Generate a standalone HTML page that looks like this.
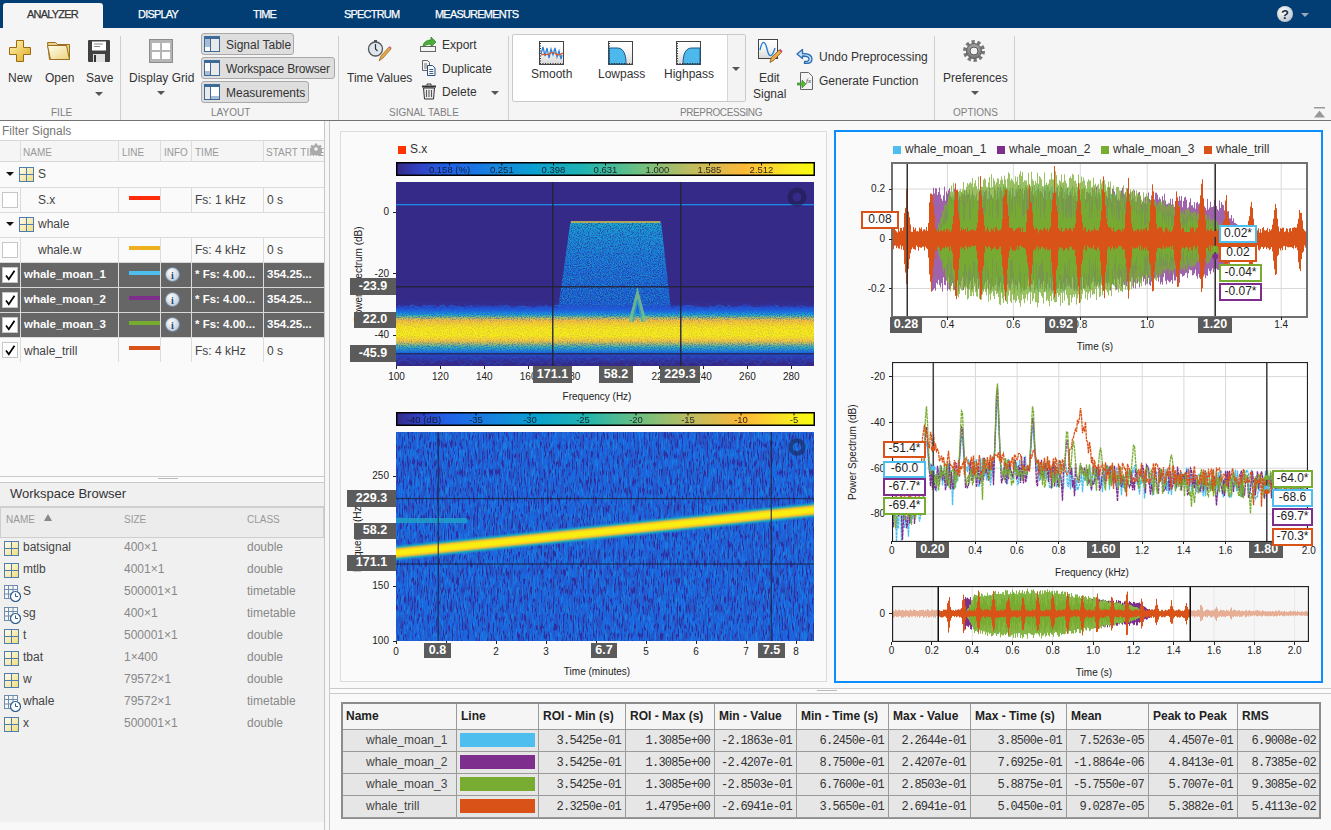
<!DOCTYPE html>
<html><head><meta charset="utf-8">
<style>
*{box-sizing:border-box;margin:0;padding:0}
html,body{width:1331px;height:830px;overflow:hidden;background:#f5f5f5;font-family:"Liberation Sans",sans-serif;color:#333;position:relative}
.a{position:absolute;white-space:nowrap}
.tabbar{left:0;top:0;width:1331px;height:28px;background:#023e73}
.tab{top:0;height:28px;line-height:28px;font-size:11px;color:#fff;letter-spacing:-0.8px;-webkit-text-stroke:0.25px currentColor}
.tabact{left:3px;top:3px;width:100px;height:25px;background:#f5f5f5;border-radius:3px 3px 0 0}
.ribbon{left:0;top:28px;width:1331px;height:92px;background:#f5f5f5}
.rl{font-size:12px;color:#333}
.grp{font-size:10px;color:#808080;top:107px}
.div{width:1px;background:#cfcfcf;top:36px;height:84px}
.tgl{background:#dedede;border:1px solid #a9a9a9;border-radius:3px}
.tri{width:0;height:0;border-left:4px solid transparent;border-right:4px solid transparent;border-top:4px solid #555}
.th{font-size:10px;color:#999;top:140px;height:21px;line-height:22px}
.vl{width:1px;background:#dcdcdc}
.hl{height:1px;background:#dcdcdc}
.st{font-size:12px;color:#444;line-height:15px;margin-top:1px}
.sel{font-size:11.5px;color:#fff;font-weight:bold}
.cb{width:16px;height:16px;background:#fff;border:1px solid #c6c6c6}
.ck{width:16px;height:16px}
.ws{font-size:12px;color:#444}
.wsg{font-size:12px;color:#888}
.lab{background:#5b5b5b;color:#fff;font-weight:bold;font-size:13px;text-align:center}
.tick{font-size:10px;color:#222}
.vlab{background:#fff;font-size:12px;color:#222;text-align:center}
.mt{font-size:12px;color:#333}
.mono{font-family:"Liberation Mono",monospace;font-size:12px;letter-spacing:-0.75px;color:#333;text-align:right;line-height:17px}
</style></head><body>
<!-- TAB BAR -->
<div class="a tabbar"></div>
<div class="a tabact"></div>
<div class="a tab" style="left:27px;color:#333">ANALYZER</div>
<div class="a tab" style="left:138px">DISPLAY</div>
<div class="a tab" style="left:253px">TIME</div>
<div class="a tab" style="left:344px">SPECTRUM</div>
<div class="a tab" style="left:435px">MEASUREMENTS</div>
<svg class="a" style="left:1276px;top:5px" width="18" height="18" viewBox="0 0 18 18"><defs><radialGradient id="hg" cx="40%" cy="35%" r="70%"><stop offset="0" stop-color="#fff"/><stop offset="1" stop-color="#b9c3cc"/></radialGradient></defs><circle cx="9" cy="9" r="8" fill="url(#hg)"/><text x="9" y="14" font-size="13" font-weight="bold" text-anchor="middle" fill="#1c2f4a" font-family="Liberation Sans">?</text></svg>
<div class="a tri" style="left:1301px;top:13px;border-top-color:#9aa9b8"></div>
<!-- RIBBON -->
<div class="a ribbon"></div>
<div class="a" style="left:0;top:120px;width:1331px;height:1px;background:#737373"></div><div class="a" style="left:0;top:121px;width:1331px;height:1px;background:#c4c4c4"></div>
<!-- FILE -->
<svg class="a" style="left:9px;top:40px" width="22" height="22" viewBox="0 0 22 22"><defs><linearGradient id="pg" x1="0" y1="0" x2="1" y2="1"><stop offset="0" stop-color="#fff6b8"/><stop offset="1" stop-color="#e0a81c"/></linearGradient></defs><path d="M7.5 0.5h7v7h7v7h-7v7h-7v-7h-7v-7h7z" fill="url(#pg)" stroke="#9a6a10"/></svg>
<svg class="a" style="left:47px;top:41px" width="24" height="20" viewBox="0 0 24 20"><defs><linearGradient id="fg" x1="0" y1="0" x2="1" y2="1"><stop offset="0" stop-color="#fffef0"/><stop offset="1" stop-color="#ead37a"/></linearGradient></defs><path d="M0.5 1.5h8l2 2h12v15h-20z" fill="#e9d28c" stroke="#9a6e1e"/><path d="M0.5 4.5h19l3 14h-19z" fill="url(#fg)" stroke="#9a6e1e"/></svg>
<svg class="a" style="left:88px;top:40px" width="22" height="22" viewBox="0 0 22 22"><rect x="0" y="0" width="22" height="22" rx="1" fill="#404040"/><rect x="4" y="1.5" width="14" height="9" fill="#fff"/><path d="M6 4h9M6 6.5h6" stroke="#888"/><rect x="5" y="14" width="12" height="8" fill="#e0e0e0"/><rect x="6" y="15" width="2" height="7" fill="#333"/></svg>
<div class="a rl" style="left:8px;top:71px">New</div>
<div class="a rl" style="left:45px;top:71px">Open</div>
<div class="a rl" style="left:86px;top:71px">Save</div>
<div class="a tri" style="left:95px;top:92px"></div>
<div class="a grp" style="left:51px">FILE</div>
<div class="a div" style="left:120px"></div>
<!-- LAYOUT -->
<svg class="a" style="left:149px;top:39px" width="24" height="24" viewBox="0 0 24 24"><rect width="24" height="24" fill="#8c8c8c"/><rect x="1" y="1" width="22" height="22" fill="#b5b5b5"/><rect x="3" y="4" width="8" height="7" fill="#fff"/><rect x="13" y="4" width="8" height="7" fill="#fff"/><rect x="3" y="13" width="8" height="7" fill="#fff"/><rect x="13" y="13" width="8" height="7" fill="#fff"/></svg>
<div class="a rl" style="left:129px;top:71px">Display Grid</div>
<div class="a tri" style="left:157px;top:91px"></div>
<div class="a tgl" style="left:201px;top:33px;width:93px;height:22px"></div>
<div class="a tgl" style="left:201px;top:57px;width:134px;height:22px"></div>
<div class="a tgl" style="left:201px;top:81px;width:108px;height:22px"></div>
<svg class="a" style="left:204px;top:36px" width="16" height="16" viewBox="0 0 16 16"><rect x="0.5" y="0.5" width="15" height="15" fill="#eaeaea" stroke="#3d6a99"/><rect x="1" y="1" width="14" height="2" fill="#3d6a99"/><rect x="1" y="3" width="5" height="8" fill="#a7bdd6"/><rect x="1" y="11" width="5" height="4" fill="#fff"/><path d="M6.5 3v12" stroke="#3d6a99"/></svg>
<svg class="a" style="left:204px;top:60px" width="16" height="16" viewBox="0 0 16 16"><rect x="0.5" y="0.5" width="15" height="15" fill="#eaeaea" stroke="#3d6a99"/><rect x="1" y="1" width="14" height="2" fill="#3d6a99"/><rect x="1" y="3" width="5" height="8" fill="#fff"/><rect x="1" y="11" width="5" height="4" fill="#a7bdd6"/><path d="M6.5 3v12" stroke="#3d6a99"/></svg>
<svg class="a" style="left:204px;top:84px" width="16" height="16" viewBox="0 0 16 16"><rect x="0.5" y="0.5" width="15" height="15" fill="#eaeaea" stroke="#3d6a99"/><rect x="1" y="1" width="14" height="2" fill="#3d6a99"/><rect x="7" y="3" width="8" height="9" fill="#fff"/><rect x="7" y="12" width="8" height="3" fill="#a7bdd6"/><path d="M6.5 3v12" stroke="#3d6a99"/></svg>
<div class="a rl" style="left:226px;top:38px">Signal Table</div>
<div class="a rl" style="left:226px;top:62px;letter-spacing:-0.2px">Workspace Browser</div>
<div class="a rl" style="left:226px;top:86px">Measurements</div>
<div class="a grp" style="left:211px">LAYOUT</div>
<div class="a div" style="left:338px"></div>
<!-- SIGNAL TABLE -->
<svg class="a" style="left:367px;top:39px" width="25" height="24" viewBox="0 0 25 24"><circle cx="8.5" cy="10" r="7" fill="#dfe7ee" stroke="#555" stroke-width="1.3"/><path d="M8.5 5v5l2 2" stroke="#333" fill="none" stroke-width="1.2"/><rect x="7" y="1" width="3" height="2" fill="#555"/><path d="M12 22l2-5 8-9 2 2-8 9z" fill="#e8a94a" stroke="#8b5a1a" stroke-width="0.7"/><path d="M22 8l2 2 0.8-1-2-2z" fill="#e07090"/></svg>
<div class="a rl" style="left:347px;top:71px">Time Values</div>
<svg class="a" style="left:420px;top:36px" width="17" height="17" viewBox="0 0 17 17"><rect x="0.5" y="10.5" width="15" height="5" fill="#f4f4f4" stroke="#666"/><path d="M3 11c0-5 4-7 8-7V1l5 5-5 5V8c-3 0-6 1-8 3z" fill="#4caf3c" stroke="#2a7a20" stroke-width="0.7"/></svg>
<svg class="a" style="left:421px;top:60px" width="16" height="16" viewBox="0 0 16 16"><path d="M1.5 0.5h5l2 2v8h-7z" fill="#f4f4f4" stroke="#555" stroke-width="0.9"/><path d="M3 4h3M3 6h4M3 8h4" stroke="#555" stroke-width="0.8"/><path d="M6.5 5.5h5l2.5 2.5v7.5h-7.5z" fill="#f6f8fb" stroke="#2b4f7e" stroke-width="1"/><path d="M8.3 9.5h4M8.3 11.5h4M8.3 13.5h4" stroke="#2b4f7e" stroke-width="0.9"/></svg>
<svg class="a" style="left:421px;top:83px" width="16" height="17" viewBox="0 0 16 17"><path d="M1 3.5h14" stroke="#333" stroke-width="2"/><path d="M6 2.5v-1.5h4v1.5" fill="none" stroke="#333"/><path d="M2.5 5h11l-1 11h-9z" fill="#e8e8e8" stroke="#333"/><path d="M5.5 7v7M8 7v7M10.5 7v7" stroke="#555"/></svg>
<div class="a rl" style="left:442px;top:38px">Export</div>
<div class="a rl" style="left:442px;top:62px">Duplicate</div>
<div class="a rl" style="left:442px;top:85px">Delete</div>
<div class="a tri" style="left:491px;top:91px"></div>
<div class="a grp" style="left:389px">SIGNAL TABLE</div>
<div class="a div" style="left:508px"></div>
<!-- PREPROCESSING -->
<div class="a" style="left:512px;top:34px;width:234px;height:68px;background:#fff;border:1px solid #c9c9c9;border-radius:2px"></div>
<div class="a" style="left:727px;top:35px;width:18px;height:66px;background:#f3f3f3;border-left:1px solid #d6d6d6"></div>
<div class="a tri" style="left:732px;top:67px"></div>
<svg class="a" style="left:539px;top:41px" width="25" height="24" viewBox="0 0 25 24"><defs><linearGradient id="icg" x1="0" y1="0" x2="0" y2="1"><stop offset="0" stop-color="#fff"/><stop offset="0.5" stop-color="#f4f4f4"/><stop offset="1" stop-color="#d8d8d8"/></linearGradient></defs><rect x="0.5" y="0.5" width="24" height="23" fill="url(#icg)" stroke="#444"/><path d="M1.5 23V2M1 22.5h23" stroke="#333" stroke-dasharray="1 1.5"/><path d="M2 13l2-7 2 9 2-8 2 10 2-9 2 6 2-7 2 9 2-6 2 8 1-4" stroke="#2a7fd4" fill="none" stroke-width="1.2"/><path d="M2 14c3-2 5 1 8-1s5-2 7 0 4 1 7-1" stroke="#e0552a" fill="none" stroke-width="1.4"/></svg>
<svg class="a" style="left:608px;top:41px" width="25" height="24" viewBox="0 0 25 24"><rect x="0.5" y="0.5" width="24" height="23" fill="url(#icg)" stroke="#444"/><path d="M1 7h8c6 0 9 5 9 16H1z" fill="#4db8ec" stroke="#1a5a8a" stroke-width="1"/><path d="M1.5 23V2M1 22.5h23" stroke="#333" stroke-dasharray="1 1.5"/></svg>
<svg class="a" style="left:676px;top:41px" width="25" height="24" viewBox="0 0 25 24"><rect x="0.5" y="0.5" width="24" height="23" fill="url(#icg)" stroke="#444"/><path d="M7 23c0-11 3-16 9-16h8v16z" fill="#4db8ec" stroke="#1a5a8a" stroke-width="1"/><path d="M1.5 23V2M1 22.5h23" stroke="#333" stroke-dasharray="1 1.5"/></svg>
<div class="a rl" style="left:531px;top:67px">Smooth</div>
<div class="a rl" style="left:598px;top:67px">Lowpass</div>
<div class="a rl" style="left:664px;top:67px">Highpass</div>
<svg class="a" style="left:758px;top:39px" width="25" height="24" viewBox="0 0 25 24"><rect x="0.5" y="0.5" width="19" height="19" fill="url(#icg)" stroke="#444"/><path d="M2 11c2-10 5-10 7-1s5 9 8-1" stroke="#2a7fd4" fill="none" stroke-width="1.4"/><path d="M12 23.5l1-4.5 8-8 2.5 2.5-8 8z" fill="#e8a94a" stroke="#7b4a10" stroke-width="0.7"/><path d="M21 11l2.5 2.5 1.2-1.2-2.5-2.5z" fill="#d05080"/></svg>
<div class="a rl" style="left:759px;top:71px">Edit</div>
<div class="a rl" style="left:753px;top:87px">Signal</div>
<svg class="a" style="left:796px;top:48px" width="17" height="16" viewBox="0 0 17 16"><path d="M6.5 1.5L1 6l5.5 4.5V8c4 0 6.5 0.8 6.5 3 0 1.6-1.5 2.5-3.5 2.5H8.5v2h1.5c3.5 0 6-1.8 6-4.5 0-3.8-3.2-5.5-9.5-5.5z" fill="#c6e0f6" stroke="#2a6cb2" stroke-width="1.3" stroke-linejoin="round"/></svg>
<svg class="a" style="left:797px;top:72px" width="16" height="18" viewBox="0 0 16 18"><path d="M3.5 0.5h8l4 4v13h-12z" fill="#f4f4f4" stroke="#666"/><text x="9" y="11" font-size="7" font-style="italic" fill="#333" font-family="Liberation Serif">fx</text><path d="M0 11h5V8l4 4-4 4v-3H0z" fill="#5cb83a" stroke="#2a7a20" stroke-width="0.6"/></svg>
<div class="a rl" style="left:819px;top:50px">Undo Preprocessing</div>
<div class="a rl" style="left:819px;top:74px">Generate Function</div>
<div class="a grp" style="left:680px;letter-spacing:-0.4px">PREPROCESSING</div>
<div class="a div" style="left:934px"></div>
<!-- OPTIONS -->
<svg class="a" style="left:963px;top:40px" width="22" height="22" viewBox="0 0 22 22"><defs><radialGradient id="gg" cx="50%" cy="40%" r="60%"><stop offset="0" stop-color="#c8c8c8"/><stop offset="1" stop-color="#6a6a6a"/></radialGradient></defs><circle cx="11" cy="11" r="9.2" fill="none" stroke="#777" stroke-width="3.6" stroke-dasharray="3.2 2.6"/><circle cx="11" cy="11" r="7.6" fill="url(#gg)" stroke="#555" stroke-width="0.8"/><circle cx="11" cy="11" r="4" fill="#f2f2f2" stroke="#555" stroke-width="1"/></svg>
<div class="a rl" style="left:943px;top:71px">Preferences</div>
<div class="a tri" style="left:971px;top:91px"></div>
<div class="a grp" style="left:953px">OPTIONS</div>
<div class="a div" style="left:1014px"></div>
<svg class="a" style="left:1314px;top:107px" width="11" height="11" viewBox="0 0 11 11"><rect x="0" y="0" width="11" height="1.5" fill="#999"/><path d="M0 10.5l5.5-7 5.5 7z" fill="#999"/></svg>
<!-- LEFT PANEL -->
<div class="a" style="left:0;top:121px;width:325px;height:355px;background:#fafafa"></div>
<div class="a" style="left:0;top:121px;width:324px;height:20px;background:#fff;border-bottom:1px solid #d6d6d6"></div>
<div class="a" style="left:2px;top:123px;font-size:12px;color:#777;line-height:17px">Filter Signals</div>
<div class="a" style="left:0;top:141px;width:324px;height:21px;background:#f5f5f5;border-bottom:1px solid #d9d9d9"></div>
<div class="a" style="left:324px;top:121px;width:1px;height:709px;background:#c6c6c6"></div>
<div class="a" style="left:329px;top:121px;width:1px;height:709px;background:#c9c9c9"></div>
<div class="a" style="left:325px;top:121px;width:4px;height:709px;background:#f7f7f7"></div>
<!-- header -->
<div class="a th" style="left:23px;top:142px">NAME</div>
<div class="a th" style="left:122px;top:142px">LINE</div>
<div class="a th" style="left:164px;top:142px">INFO</div>
<div class="a th" style="left:195px;top:142px">TIME</div>
<div class="a th" style="left:266px;top:142px">START TIME</div>
<svg class="a" style="left:310px;top:143px" width="12" height="12" viewBox="0 0 12 12"><g transform="translate(6 6)"><path d="M-1-5.5h2l.4 1.6 1.4.6 1.4-.9 1.4 1.4-.9 1.4.6 1.4 1.6.4v2l-1.6.4-.6 1.4.9 1.4-1.4 1.4-1.4-.9-1.4.6-.4 1.6h-2l-.4-1.6-1.4-.6-1.4.9-1.4-1.4.9-1.4-.6-1.4-1.6-.4v-2l1.6-.4.6-1.4-.9-1.4 1.4-1.4 1.4.9 1.4-.6z" fill="#aaa"/><circle r="1.8" fill="#f5f5f5"/></g></svg>
<!-- rows -->
<div class="a" style="left:0;top:262px;width:324px;height:75px;background:#666"></div>
<div class="a hl" style="left:0;top:187px;width:324px"></div>
<div class="a hl" style="left:0;top:212px;width:324px"></div>
<div class="a hl" style="left:0;top:237px;width:324px"></div>
<div class="a hl" style="left:0;top:262px;width:324px;background:#d8d8d8"></div>
<div class="a hl" style="left:0;top:287px;width:324px;background:#d8d8d8"></div>
<div class="a hl" style="left:0;top:312px;width:324px;background:#d8d8d8"></div>
<div class="a hl" style="left:0;top:337px;width:324px"></div>
<div class="a hl" style="left:0;top:362px;width:324px"></div>
<div class="a" style="left:0;top:362px;width:324px;height:114px;background:#fafafa"></div>
<!-- vertical col lines -->
<div class="a vl" style="left:20px;top:141px;height:21px"></div>
<div class="a vl" style="left:118px;top:141px;height:21px"></div>
<div class="a vl" style="left:160px;top:141px;height:21px"></div>
<div class="a vl" style="left:191px;top:141px;height:21px"></div>
<div class="a vl" style="left:263px;top:141px;height:21px"></div>
<div class="a vl" style="left:20px;top:187px;height:25px"></div><div class="a vl" style="left:118px;top:187px;height:25px"></div><div class="a vl" style="left:160px;top:187px;height:25px"></div><div class="a vl" style="left:191px;top:187px;height:25px"></div><div class="a vl" style="left:263px;top:187px;height:25px"></div>
<div class="a vl" style="left:20px;top:237px;height:125px"></div><div class="a vl" style="left:118px;top:237px;height:125px"></div><div class="a vl" style="left:160px;top:237px;height:125px"></div><div class="a vl" style="left:191px;top:237px;height:125px"></div><div class="a vl" style="left:263px;top:237px;height:125px"></div>
<!-- group rows -->
<div class="a tri" style="left:6px;top:172px;border-top-color:#111"></div>
<div class="a tri" style="left:6px;top:222px;border-top-color:#111"></div>
<svg class="a" style="left:19px;top:167px" width="15" height="15" viewBox="0 0 15 15"><defs><linearGradient id="tg" x1="0" y1="0" x2="1" y2="1"><stop offset="0" stop-color="#fffdf0"/><stop offset="1" stop-color="#f0dc7a"/></linearGradient></defs><rect x="0.5" y="0.5" width="14" height="14" fill="url(#tg)" stroke="#4f7db0"/><path d="M7.5 1v13M1 7.5h13" stroke="#4f7db0"/></svg>
<svg class="a" style="left:19px;top:217px" width="15" height="15" viewBox="0 0 15 15"><rect x="0.5" y="0.5" width="14" height="14" fill="url(#tg)" stroke="#4f7db0"/><path d="M7.5 1v13M1 7.5h13" stroke="#4f7db0"/></svg>
<div class="a st" style="left:38px;top:166px">S</div>
<div class="a st" style="left:38px;top:216px">whale</div>
<!-- S.x -->
<div class="a cb" style="left:2px;top:192px"></div>
<div class="a st" style="left:38px;top:192px">S.x</div>
<div class="a" style="left:129px;top:196px;width:31px;height:4px;background:#ff2a0a"></div>
<div class="a st" style="left:195px;top:192px">Fs: 1 kHz</div>
<div class="a st" style="left:267px;top:192px">0 s</div>
<!-- whale.w -->
<div class="a cb" style="left:2px;top:242px"></div>
<div class="a st" style="left:38px;top:242px">whale.w</div>
<div class="a" style="left:129px;top:246px;width:31px;height:4px;background:#edb120"></div>
<div class="a st" style="left:195px;top:242px">Fs: 4 kHz</div>
<div class="a st" style="left:267px;top:242px">0 s</div>
<!-- selected -->
<div class="a cb" style="left:2px;top:267px"></div><svg class="a ck" style="left:2px;top:267px" viewBox="0 0 16 16"><path d="M4 8.5L6.8 12.2L12.5 3.8" fill="none" stroke="#000" stroke-width="1.7"/></svg>
<div class="a cb" style="left:2px;top:292px"></div><svg class="a ck" style="left:2px;top:292px" viewBox="0 0 16 16"><path d="M4 8.5L6.8 12.2L12.5 3.8" fill="none" stroke="#000" stroke-width="1.7"/></svg>
<div class="a cb" style="left:2px;top:317px"></div><svg class="a ck" style="left:2px;top:317px" viewBox="0 0 16 16"><path d="M4 8.5L6.8 12.2L12.5 3.8" fill="none" stroke="#000" stroke-width="1.7"/></svg>
<div class="a cb" style="left:2px;top:342px"></div><svg class="a ck" style="left:2px;top:342px" viewBox="0 0 16 16"><path d="M4 8.5L6.8 12.2L12.5 3.8" fill="none" stroke="#000" stroke-width="1.7"/></svg>
<div class="a sel" style="left:24px;top:268px">whale_moan_1</div>
<div class="a sel" style="left:24px;top:293px">whale_moan_2</div>
<div class="a sel" style="left:24px;top:318px">whale_moan_3</div>
<div class="a st" style="left:24px;top:343px">whale_trill</div>
<div class="a" style="left:129px;top:271px;width:31px;height:4px;background:#4dbeee"></div>
<div class="a" style="left:129px;top:296px;width:31px;height:4px;background:#7e2f8e"></div>
<div class="a" style="left:129px;top:321px;width:31px;height:4px;background:#77ac30"></div>
<div class="a" style="left:129px;top:346px;width:31px;height:4px;background:#d95319"></div>
<svg class="a" style="left:165px;top:267px" width="15" height="15" viewBox="0 0 15 15"><defs><radialGradient id="ig" cx="40%" cy="35%" r="70%"><stop offset="0" stop-color="#fff"/><stop offset="1" stop-color="#b7c6d6"/></radialGradient></defs><circle cx="7.5" cy="7.5" r="7" fill="url(#ig)" stroke="#6d8298"/><text x="7.5" y="12" font-size="10" font-weight="bold" text-anchor="middle" fill="#24496e" font-family="Liberation Serif">i</text></svg>
<svg class="a" style="left:165px;top:292px" width="15" height="15" viewBox="0 0 15 15"><circle cx="7.5" cy="7.5" r="7" fill="url(#ig)" stroke="#6d8298"/><text x="7.5" y="12" font-size="10" font-weight="bold" text-anchor="middle" fill="#24496e" font-family="Liberation Serif">i</text></svg>
<svg class="a" style="left:165px;top:317px" width="15" height="15" viewBox="0 0 15 15"><circle cx="7.5" cy="7.5" r="7" fill="url(#ig)" stroke="#6d8298"/><text x="7.5" y="12" font-size="10" font-weight="bold" text-anchor="middle" fill="#24496e" font-family="Liberation Serif">i</text></svg>
<div class="a sel" style="left:195px;top:268px">* Fs: 4.00...</div>
<div class="a sel" style="left:195px;top:293px">* Fs: 4.00...</div>
<div class="a sel" style="left:195px;top:318px">* Fs: 4.00...</div>
<div class="a sel" style="left:267px;top:268px">354.25...</div>
<div class="a sel" style="left:267px;top:293px">354.25...</div>
<div class="a sel" style="left:267px;top:318px">354.25...</div>
<div class="a st" style="left:195px;top:343px">Fs: 4 kHz</div>
<div class="a st" style="left:267px;top:343px">0 s</div>
<!-- splitter -->
<div class="a" style="left:0;top:476px;width:324px;height:1px;background:#c9c9c9"></div>
<div class="a" style="left:0;top:477px;width:324px;height:5px;background:#fbfbfb"></div>
<div class="a" style="left:158px;top:478px;width:20px;height:1px;background:#bbb"></div>
<div class="a" style="left:0;top:482px;width:324px;height:1px;background:#c9c9c9"></div>
<!-- WORKSPACE -->
<div class="a" style="left:0;top:483px;width:324px;height:347px;background:#f0f0f0"></div>
<div class="a" style="left:10px;top:486px;font-size:13px;color:#333">Workspace Browser</div>
<div class="a" style="left:0;top:506px;width:324px;height:32px;background:#ececec;border:1px solid #cfcfcf;border-width:2px 1px 1px 1px"></div>
<div class="a th" style="left:6px;top:509px">NAME</div>
<svg class="a" style="left:44px;top:514px" width="8" height="7"><path d="M0 7L4 0l4 7z" fill="#888"/></svg>
<div class="a th" style="left:124px;top:509px">SIZE</div>
<div class="a th" style="left:247px;top:509px">CLASS</div>
<div class="a" style="left:0;top:822px;width:324px;height:8px;background:#f8f8f8"></div>
<svg class="a" style="left:4px;top:541px" width="15" height="15" viewBox="0 0 15 15"><rect x="0.5" y="0.5" width="14" height="14" fill="url(#tg)" stroke="#4f7db0"/><path d="M7.5 1v13M1 7.5h13" stroke="#4f7db0"/></svg>
<div class="a ws" style="left:23px;top:540px">batsignal</div>
<div class="a wsg" style="left:124px;top:540px">400×1</div>
<div class="a wsg" style="left:247px;top:540px">double</div>
<svg class="a" style="left:4px;top:563px" width="15" height="15" viewBox="0 0 15 15"><rect x="0.5" y="0.5" width="14" height="14" fill="url(#tg)" stroke="#4f7db0"/><path d="M7.5 1v13M1 7.5h13" stroke="#4f7db0"/></svg>
<div class="a ws" style="left:23px;top:562px">mtlb</div>
<div class="a wsg" style="left:124px;top:562px">4001×1</div>
<div class="a wsg" style="left:247px;top:562px">double</div>
<svg class="a" style="left:4px;top:585px" width="17" height="17" viewBox="0 0 17 17"><rect x="0.5" y="0.5" width="13" height="13" fill="#f6f6f6" stroke="#6f8cae"/><path d="M0.5 4.5h13M4.5 1v13M9 1v13M1 9h13" stroke="#6f8cae"/><circle cx="11.5" cy="11.5" r="5" fill="#fff" stroke="#2b5b8c" stroke-width="1.2"/><path d="M11.5 8.5v3h2.5" stroke="#2b5b8c" fill="none"/></svg>
<div class="a ws" style="left:23px;top:584px">S</div>
<div class="a wsg" style="left:124px;top:584px">500001×1</div>
<div class="a wsg" style="left:247px;top:584px">timetable</div>
<svg class="a" style="left:4px;top:607px" width="17" height="17" viewBox="0 0 17 17"><rect x="0.5" y="0.5" width="13" height="13" fill="#f6f6f6" stroke="#6f8cae"/><path d="M0.5 4.5h13M4.5 1v13M9 1v13M1 9h13" stroke="#6f8cae"/><circle cx="11.5" cy="11.5" r="5" fill="#fff" stroke="#2b5b8c" stroke-width="1.2"/><path d="M11.5 8.5v3h2.5" stroke="#2b5b8c" fill="none"/></svg>
<div class="a ws" style="left:23px;top:606px">sg</div>
<div class="a wsg" style="left:124px;top:606px">400×1</div>
<div class="a wsg" style="left:247px;top:606px">timetable</div>
<svg class="a" style="left:4px;top:629px" width="15" height="15" viewBox="0 0 15 15"><rect x="0.5" y="0.5" width="14" height="14" fill="url(#tg)" stroke="#4f7db0"/><path d="M7.5 1v13M1 7.5h13" stroke="#4f7db0"/></svg>
<div class="a ws" style="left:23px;top:628px">t</div>
<div class="a wsg" style="left:124px;top:628px">500001×1</div>
<div class="a wsg" style="left:247px;top:628px">double</div>
<svg class="a" style="left:4px;top:651px" width="15" height="15" viewBox="0 0 15 15"><rect x="0.5" y="0.5" width="14" height="14" fill="url(#tg)" stroke="#4f7db0"/><path d="M7.5 1v13M1 7.5h13" stroke="#4f7db0"/></svg>
<div class="a ws" style="left:23px;top:650px">tbat</div>
<div class="a wsg" style="left:124px;top:650px">1×400</div>
<div class="a wsg" style="left:247px;top:650px">double</div>
<svg class="a" style="left:4px;top:673px" width="15" height="15" viewBox="0 0 15 15"><rect x="0.5" y="0.5" width="14" height="14" fill="url(#tg)" stroke="#4f7db0"/><path d="M7.5 1v13M1 7.5h13" stroke="#4f7db0"/></svg>
<div class="a ws" style="left:23px;top:672px">w</div>
<div class="a wsg" style="left:124px;top:672px">79572×1</div>
<div class="a wsg" style="left:247px;top:672px">double</div>
<svg class="a" style="left:4px;top:695px" width="17" height="17" viewBox="0 0 17 17"><rect x="0.5" y="0.5" width="13" height="13" fill="#f6f6f6" stroke="#6f8cae"/><path d="M0.5 4.5h13M4.5 1v13M9 1v13M1 9h13" stroke="#6f8cae"/><circle cx="11.5" cy="11.5" r="5" fill="#fff" stroke="#2b5b8c" stroke-width="1.2"/><path d="M11.5 8.5v3h2.5" stroke="#2b5b8c" fill="none"/></svg>
<div class="a ws" style="left:23px;top:694px">whale</div>
<div class="a wsg" style="left:124px;top:694px">79572×1</div>
<div class="a wsg" style="left:247px;top:694px">timetable</div>
<svg class="a" style="left:4px;top:717px" width="15" height="15" viewBox="0 0 15 15"><rect x="0.5" y="0.5" width="14" height="14" fill="url(#tg)" stroke="#4f7db0"/><path d="M7.5 1v13M1 7.5h13" stroke="#4f7db0"/></svg>
<div class="a ws" style="left:23px;top:716px">x</div>
<div class="a wsg" style="left:124px;top:716px">500001×1</div>
<div class="a wsg" style="left:247px;top:716px">double</div><!-- PLOT AREA BG -->
<div class="a" style="left:330px;top:121px;width:1001px;height:567px;background:#f9f9f9"></div>
<div class="a" style="left:340px;top:131px;width:487px;height:551px;background:#fafafa;border:1px solid #dcdcdc"></div>
<div class="a" style="left:834px;top:130px;width:489px;height:553px;background:#fafafa;border:2px solid #0a8dff"></div>
<!-- splitter -->
<div class="a" style="left:330px;top:688px;width:1001px;height:1px;background:#cacaca"></div>
<div class="a" style="left:330px;top:689px;width:1001px;height:4px;background:#fbfbfb"></div>
<div class="a" style="left:817px;top:690px;width:20px;height:1px;background:#bbb"></div>
<div class="a" style="left:330px;top:693px;width:1001px;height:1px;background:#cacaca"></div>
<div class="a" style="left:330px;top:694px;width:1001px;height:136px;background:#f9f9f9"></div>
<div class="a" style="left:341px;top:702px;width:980px;height:117px;background:#e6e6e6;border:2px solid #8c8c8c"></div>
<div class="a" style="left:343px;top:704px;width:976px;height:26px;background:#f5f5f5"></div>
<div class="a" style="left:343px;top:729px;width:976px;height:1px;background:#9a9a9a"></div>
<div class="a" style="left:343px;top:751px;width:976px;height:1px;background:#9a9a9a"></div>
<div class="a" style="left:343px;top:773px;width:976px;height:1px;background:#9a9a9a"></div>
<div class="a" style="left:343px;top:795px;width:976px;height:1px;background:#9a9a9a"></div>
<div class="a" style="left:343px;top:817px;width:976px;height:1px;background:#9a9a9a"></div>
<div class="a" style="left:456px;top:704px;width:1px;height:115px;background:#9a9a9a"></div>
<div class="a" style="left:538px;top:704px;width:1px;height:115px;background:#9a9a9a"></div>
<div class="a" style="left:625px;top:704px;width:1px;height:115px;background:#9a9a9a"></div>
<div class="a" style="left:714px;top:704px;width:1px;height:115px;background:#9a9a9a"></div>
<div class="a" style="left:796px;top:704px;width:1px;height:115px;background:#9a9a9a"></div>
<div class="a" style="left:888px;top:704px;width:1px;height:115px;background:#9a9a9a"></div>
<div class="a" style="left:970px;top:704px;width:1px;height:115px;background:#9a9a9a"></div>
<div class="a" style="left:1066px;top:704px;width:1px;height:115px;background:#9a9a9a"></div>
<div class="a" style="left:1148px;top:704px;width:1px;height:115px;background:#9a9a9a"></div>
<div class="a" style="left:1237px;top:704px;width:1px;height:115px;background:#9a9a9a"></div>
<div class="a" style="left:346px;top:709px;font-size:12px;font-weight:bold;color:#222">Name</div>
<div class="a" style="left:461px;top:709px;font-size:12px;font-weight:bold;color:#222">Line</div>
<div class="a" style="left:543px;top:709px;font-size:12px;font-weight:bold;color:#222">ROI - Min (s)</div>
<div class="a" style="left:630px;top:709px;font-size:12px;font-weight:bold;color:#222">ROI - Max (s)</div>
<div class="a" style="left:719px;top:709px;font-size:12px;font-weight:bold;color:#222">Min - Value</div>
<div class="a" style="left:801px;top:709px;font-size:12px;font-weight:bold;color:#222">Min - Time (s)</div>
<div class="a" style="left:893px;top:709px;font-size:12px;font-weight:bold;color:#222">Max - Value</div>
<div class="a" style="left:975px;top:709px;font-size:12px;font-weight:bold;color:#222">Max - Time (s)</div>
<div class="a" style="left:1071px;top:709px;font-size:12px;font-weight:bold;color:#222">Mean</div>
<div class="a" style="left:1153px;top:709px;font-size:12px;font-weight:bold;color:#222">Peak to Peak</div>
<div class="a" style="left:1242px;top:709px;font-size:12px;font-weight:bold;color:#222">RMS</div>
<div class="a mt" style="left:366px;top:733px;font-size:12px;color:#444">whale_moan_1</div>
<div class="a" style="left:460px;top:733px;width:75px;height:14px;background:#4dbeee"></div>
<div class="a mono" style="left:530px;width:91px;top:733px">3.5425e-01</div>
<div class="a mono" style="left:619px;width:91px;top:733px">1.3085e+00</div>
<div class="a mono" style="left:701px;width:91px;top:733px">-2.1863e-01</div>
<div class="a mono" style="left:793px;width:91px;top:733px">6.2450e-01</div>
<div class="a mono" style="left:875px;width:91px;top:733px">2.2644e-01</div>
<div class="a mono" style="left:971px;width:91px;top:733px">3.8500e-01</div>
<div class="a mono" style="left:1053px;width:91px;top:733px">7.5263e-05</div>
<div class="a mono" style="left:1142px;width:91px;top:733px">4.4507e-01</div>
<div class="a mono" style="left:1225px;width:91px;top:733px">6.9008e-02</div>
<div class="a mt" style="left:366px;top:755px;font-size:12px;color:#444">whale_moan_2</div>
<div class="a" style="left:460px;top:755px;width:75px;height:14px;background:#7e2f8e"></div>
<div class="a mono" style="left:530px;width:91px;top:755px">3.5425e-01</div>
<div class="a mono" style="left:619px;width:91px;top:755px">1.3085e+00</div>
<div class="a mono" style="left:701px;width:91px;top:755px">-2.4207e-01</div>
<div class="a mono" style="left:793px;width:91px;top:755px">8.7500e-01</div>
<div class="a mono" style="left:875px;width:91px;top:755px">2.4207e-01</div>
<div class="a mono" style="left:971px;width:91px;top:755px">7.6925e-01</div>
<div class="a mono" style="left:1053px;width:91px;top:755px">-1.8864e-06</div>
<div class="a mono" style="left:1142px;width:91px;top:755px">4.8413e-01</div>
<div class="a mono" style="left:1225px;width:91px;top:755px">8.7385e-02</div>
<div class="a mt" style="left:366px;top:777px;font-size:12px;color:#444">whale_moan_3</div>
<div class="a" style="left:460px;top:777px;width:75px;height:14px;background:#77ac30"></div>
<div class="a mono" style="left:530px;width:91px;top:777px">3.5425e-01</div>
<div class="a mono" style="left:619px;width:91px;top:777px">1.3085e+00</div>
<div class="a mono" style="left:701px;width:91px;top:777px">-2.8503e-01</div>
<div class="a mono" style="left:793px;width:91px;top:777px">6.7600e-01</div>
<div class="a mono" style="left:875px;width:91px;top:777px">2.8503e-01</div>
<div class="a mono" style="left:971px;width:91px;top:777px">5.8875e-01</div>
<div class="a mono" style="left:1053px;width:91px;top:777px">-5.7550e-07</div>
<div class="a mono" style="left:1142px;width:91px;top:777px">5.7007e-01</div>
<div class="a mono" style="left:1225px;width:91px;top:777px">9.3085e-02</div>
<div class="a mt" style="left:366px;top:799px;font-size:12px;color:#444">whale_trill</div>
<div class="a" style="left:460px;top:799px;width:75px;height:14px;background:#d95319"></div>
<div class="a mono" style="left:530px;width:91px;top:799px">2.3250e-01</div>
<div class="a mono" style="left:619px;width:91px;top:799px">1.4795e+00</div>
<div class="a mono" style="left:701px;width:91px;top:799px">-2.6941e-01</div>
<div class="a mono" style="left:793px;width:91px;top:799px">3.5650e-01</div>
<div class="a mono" style="left:875px;width:91px;top:799px">2.6941e-01</div>
<div class="a mono" style="left:971px;width:91px;top:799px">5.0450e-01</div>
<div class="a mono" style="left:1053px;width:91px;top:799px">9.0287e-05</div>
<div class="a mono" style="left:1142px;width:91px;top:799px">5.3882e-01</div>
<div class="a mono" style="left:1225px;width:91px;top:799px">5.4113e-02</div><svg class="a" style="left:396px;top:182px" width="418" height="184" viewBox="0 0 418 184">
<defs>
<linearGradient id="band" x1="0" y1="0" x2="0" y2="1">
<stop offset="0" stop-color="#352a87" stop-opacity="0"/>
<stop offset="0.05" stop-color="#352a87" stop-opacity="0"/>
<stop offset="0.1" stop-color="#2050d8" stop-opacity="0.5"/>
<stop offset="0.17" stop-color="#1a78e0"/>
<stop offset="0.22" stop-color="#20a8c0"/>
<stop offset="0.26" stop-color="#a0bc68"/>
<stop offset="0.3" stop-color="#f4bc3c"/>
<stop offset="0.42" stop-color="#f8e41c"/>
<stop offset="0.55" stop-color="#f9ea18"/>
<stop offset="0.63" stop-color="#f8c838"/>
<stop offset="0.68" stop-color="#b0bc60"/>
<stop offset="0.74" stop-color="#30b0b0"/>
<stop offset="0.82" stop-color="#1a70e0"/>
<stop offset="0.87" stop-color="#2848c8" stop-opacity="0.7"/>
<stop offset="1" stop-color="#352a87" stop-opacity="0"/>
</linearGradient>
<linearGradient id="trap" x1="0" y1="0" x2="0" y2="1">
<stop offset="0" stop-color="#18a8c8"/>
<stop offset="0.12" stop-color="#1a8ad8"/>
<stop offset="0.5" stop-color="#1a6ad8"/>
<stop offset="1" stop-color="#1a58d0"/>
</linearGradient>
<linearGradient id="bmask" x1="0" y1="0" x2="0" y2="1">
<stop offset="0" stop-color="#222"/><stop offset="0.12" stop-color="#888"/><stop offset="0.25" stop-color="#888"/><stop offset="0.35" stop-color="#222"/><stop offset="0.6" stop-color="#222"/><stop offset="0.72" stop-color="#888"/><stop offset="0.88" stop-color="#888"/><stop offset="1" stop-color="#222"/>
</linearGradient>
<mask id="bm"><rect x="0" y="119.5" width="418" height="62" fill="url(#bmask)"/></mask>
<filter id="spk" x="0" y="0" width="100%" height="100%" color-interpolation-filters="sRGB"><feTurbulence type="fractalNoise" baseFrequency="0.9" numOctaves="1" seed="3"/><feColorMatrix type="matrix" values="0 0 0 0 0.14  0 0 0 0 0.30  0 0 0 0 0.85  0 0 0 -9 4.6"/></filter>
<filter id="spk2" x="0" y="0" width="100%" height="100%" color-interpolation-filters="sRGB"><feTurbulence type="fractalNoise" baseFrequency="0.9" numOctaves="1" seed="8"/><feColorMatrix type="matrix" values="0 0 0 0 0.2  0 0 0 0 0.17  0 0 0 0 0.55  0 0 0 -9 4.5"/></filter>
<filter id="spk3" x="0" y="0" width="100%" height="100%" color-interpolation-filters="sRGB"><feTurbulence type="fractalNoise" baseFrequency="0.9" numOctaves="1" seed="21"/><feColorMatrix type="matrix" values="0 0 0 0 0.1  0 0 0 0 0.72  0 0 0 0 0.78  0 0 0 -9 4.4"/></filter>
<clipPath id="tc"><path d="M174.5 39.5L265 39.5L275.5 132L161.5 132Z"/></clipPath>
</defs>
<rect width="418" height="184" fill="#352a87"/>
<g clip-path="url(#tc)"><rect x="150" y="39" width="140" height="95" fill="url(#trap)"/><rect x="150" y="39" width="140" height="95" filter="url(#spk2)" opacity="0.6"/><rect x="150" y="39" width="140" height="95" filter="url(#spk3)" opacity="0.45"/></g>
<path d="M175 40L264 40" stroke="#e0b040" stroke-width="1.5"/>
<polyline points="0 129.1 3 129.4 6 130.5 9 129.0 12 130.3 15 124.1 18 127.1 21 130.5 24 128.4 27 130.2 30 124.7 33 127.1 36 125.6 39 127.7 42 127.9 45 124.0 48 125.4 51 125.8 54 130.3 57 129.2 60 125.0 63 129.4 66 124.8 69 128.2 72 124.7 75 123.9 78 130.0 81 125.3 84 125.4 87 130.7 90 130.0 93 125.9 96 130.6 99 127.6 102 128.6 105 125.3 108 130.4 111 128.7 114 130.6 117 130.1 120 126.0 123 126.4 126 125.0 129 124.9 132 124.3 135 126.0 138 128.1 141 123.9 144 128.6 147 126.2 150 126.0 153 129.6 156 127.2 159 126.1 162 127.2 165 128.8 168 124.3 171 130.7 174 124.0 177 129.1 180 129.8 183 124.0 186 129.4 189 126.4 192 127.9 195 123.9 198 124.2 201 125.1 204 130.5 207 125.2 210 129.2 213 130.4 216 130.5 219 126.3 222 126.3 225 127.5 228 129.3 231 124.6 234 129.1 237 129.4 240 129.9 243 124.1 246 130.5 249 124.5 252 126.2 255 128.1 258 130.3 261 126.2 264 130.3 267 127.7 270 126.0 273 126.1 276 125.1 279 124.4 282 124.9 285 128.7 288 130.8 291 125.0 294 124.2 297 130.8 300 127.6 303 126.7 306 125.5 309 128.0 312 129.6 315 127.0 318 126.8 321 124.3 324 130.3 327 124.1 330 127.3 333 129.7 336 124.8 339 129.0 342 130.5 345 128.3 348 129.4 351 124.6 354 126.9 357 124.9 360 129.8 363 125.9 366 127.0 369 130.9 372 129.8 375 130.7 378 127.0 381 127.3 384 129.0 387 127.2 390 125.9 393 126.7 396 124.9 399 126.5 402 130.8 405 130.6 408 128.2 411 127.4 414 126.2 417 124.5 420 125.8" fill="none" stroke="#2a4fd0" stroke-width="1" opacity="0.75"/>
<polyline points="0 128.1 3 131.1 6 131.0 9 130.4 12 130.2 15 130.9 18 128.1 21 130.5 24 127.5 27 129.0 30 131.0 33 130.4 36 127.6 39 132.2 42 130.1 45 129.6 48 125.7 51 129.4 54 127.3 57 130.3 60 128.8 63 131.3 66 130.1 69 131.2 72 128.0 75 130.1 78 130.7 81 131.4 84 128.0 87 131.5 90 131.7 93 130.4 96 132.4 99 132.3 102 129.2 105 129.3 108 126.7 111 131.4 114 132.1 117 128.9 120 130.4 123 130.6 126 130.7 129 126.8 132 131.0 135 129.6 138 130.2 141 128.5 144 129.9 147 131.0 150 130.0 153 130.6 156 125.8 159 126.7 162 128.7 165 130.1 168 127.1 171 130.4 174 130.0 177 125.9 180 128.9 183 127.2 186 126.0 189 126.5 192 127.8 195 126.8 198 126.9 201 125.8 204 128.8 207 128.2 210 129.9 213 129.7 216 127.2 219 131.9 222 125.6 225 128.4 228 127.5 231 128.4 234 126.4 237 131.4 240 128.2 243 125.8 246 129.9 249 126.2 252 129.4 255 127.9 258 129.6 261 132.3 264 131.3 267 128.5 270 131.3 273 130.1 276 128.2 279 126.6 282 129.7 285 129.5 288 132.3 291 132.3 294 129.8 297 128.0 300 131.8 303 125.6 306 126.3 309 129.5 312 129.9 315 126.6 318 130.0 321 131.8 324 128.2 327 128.6 330 127.2 333 127.6 336 132.4 339 128.2 342 132.3 345 132.0 348 129.7 351 127.4 354 132.4 357 129.0 360 128.5 363 127.8 366 132.5 369 129.0 372 127.6 375 128.9 378 126.4 381 129.9 384 128.7 387 127.6 390 131.0 393 131.4 396 125.7 399 129.3 402 127.5 405 132.1 408 131.0 411 127.3 414 127.4 417 126.7 420 132.5" fill="none" stroke="#1a84d8" stroke-width="1" opacity="0.75"/>
<polyline points="0 129.9 3 126.6 6 129.0 9 129.1 12 129.2 15 123.1 18 123.8 21 124.9 24 127.9 27 127.2 30 128.1 33 123.1 36 125.4 39 127.7 42 128.6 45 123.9 48 123.0 51 126.8 54 127.7 57 123.7 60 127.8 63 124.3 66 126.0 69 128.6 72 127.1 75 127.8 78 129.6 81 127.5 84 129.0 87 128.8 90 126.3 93 127.7 96 128.0 99 129.2 102 126.2 105 128.3 108 125.1 111 123.0 114 128.4 117 127.0 120 127.5 123 126.3 126 125.1 129 124.1 132 127.8 135 129.2 138 129.8 141 126.7 144 125.9 147 126.7 150 123.3 153 128.1 156 124.8 159 123.5 162 123.4 165 129.5 168 125.3 171 126.0 174 123.4 177 125.8 180 126.4 183 123.8 186 123.8 189 127.2 192 128.7 195 123.7 198 129.2 201 129.9 204 127.9 207 126.0 210 124.2 213 124.2 216 128.6 219 123.4 222 124.4 225 126.8 228 127.6 231 128.2 234 124.9 237 126.9 240 123.8 243 125.7 246 127.3 249 123.0 252 123.6 255 127.7 258 126.4 261 125.4 264 127.5 267 129.3 270 123.9 273 125.0 276 126.9 279 127.7 282 125.0 285 129.5 288 126.8 291 124.5 294 123.4 297 124.6 300 128.8 303 124.9 306 129.8 309 128.6 312 129.0 315 126.1 318 125.7 321 123.9 324 123.1 327 125.3 330 127.0 333 123.2 336 129.0 339 126.5 342 126.1 345 125.7 348 126.2 351 129.7 354 123.7 357 126.7 360 126.7 363 125.6 366 128.9 369 129.6 372 126.0 375 128.5 378 128.2 381 123.5 384 129.3 387 126.4 390 124.4 393 127.9 396 125.6 399 128.8 402 125.0 405 129.5 408 127.9 411 128.5 414 125.6 417 128.0 420 125.5" fill="none" stroke="#1a84d8" stroke-width="1" opacity="0.75"/>
<polyline points="0 128.2 3 131.1 6 128.8 9 129.3 12 129.1 15 130.3 18 127.9 21 125.8 24 125.4 27 126.5 30 125.4 33 131.4 36 128.5 39 130.5 42 125.1 45 128.4 48 131.4 51 129.5 54 128.1 57 128.4 60 125.8 63 126.2 66 126.2 69 127.8 72 127.8 75 131.3 78 126.2 81 126.9 84 127.1 87 126.3 90 127.1 93 126.8 96 128.5 99 125.4 102 131.6 105 127.7 108 131.7 111 129.9 114 129.8 117 128.4 120 131.7 123 126.0 126 129.8 129 127.2 132 129.9 135 130.2 138 126.3 141 126.5 144 125.3 147 126.7 150 125.7 153 127.9 156 131.9 159 127.7 162 127.3 165 128.4 168 127.1 171 130.3 174 130.2 177 126.3 180 126.8 183 129.8 186 131.7 189 129.7 192 128.1 195 132.0 198 125.2 201 125.6 204 130.6 207 128.0 210 125.4 213 129.0 216 132.1 219 128.8 222 127.6 225 125.8 228 125.6 231 131.4 234 128.6 237 131.7 240 125.5 243 126.8 246 125.5 249 127.9 252 125.6 255 126.9 258 128.0 261 127.3 264 125.5 267 125.4 270 131.9 273 126.4 276 128.7 279 127.9 282 128.9 285 125.7 288 127.3 291 125.9 294 128.9 297 131.6 300 129.3 303 131.1 306 126.6 309 125.3 312 128.9 315 128.5 318 129.1 321 127.8 324 129.5 327 130.2 330 131.5 333 127.3 336 128.3 339 130.9 342 126.7 345 125.9 348 127.3 351 125.7 354 130.5 357 130.9 360 127.3 363 126.0 366 125.7 369 126.8 372 125.7 375 128.1 378 129.2 381 126.8 384 125.6 387 130.0 390 125.5 393 126.5 396 127.1 399 127.7 402 125.8 405 128.1 408 127.3 411 130.4 414 129.0 417 131.4 420 129.7" fill="none" stroke="#1f62e0" stroke-width="1" opacity="0.75"/>
<polyline points="0 126.6 3 129.2 6 128.1 9 130.2 12 128.6 15 128.4 18 125.4 21 129.2 24 126.2 27 124.4 30 124.0 33 124.7 36 125.4 39 128.3 42 125.5 45 124.0 48 128.9 51 127.4 54 123.7 57 123.9 60 124.4 63 126.0 66 129.5 69 130.2 72 127.8 75 125.1 78 126.5 81 126.1 84 125.8 87 123.6 90 127.6 93 129.3 96 128.6 99 124.2 102 127.2 105 124.7 108 128.5 111 126.6 114 130.1 117 129.1 120 124.4 123 125.7 126 129.9 129 126.8 132 126.6 135 126.6 138 128.9 141 130.1 144 127.3 147 130.3 150 127.7 153 124.2 156 129.2 159 126.5 162 123.9 165 130.4 168 123.8 171 127.6 174 126.9 177 129.7 180 126.3 183 125.0 186 125.5 189 124.9 192 127.5 195 126.0 198 128.8 201 125.2 204 126.0 207 125.3 210 130.4 213 129.4 216 129.5 219 127.9 222 126.3 225 124.5 228 129.3 231 127.0 234 123.8 237 124.7 240 124.2 243 128.5 246 129.8 249 124.9 252 129.1 255 125.8 258 128.3 261 129.6 264 127.9 267 129.1 270 126.2 273 123.6 276 127.1 279 127.6 282 124.8 285 126.2 288 125.7 291 123.7 294 125.7 297 126.2 300 126.9 303 128.4 306 126.3 309 130.4 312 129.2 315 130.0 318 128.4 321 128.2 324 127.3 327 129.1 330 126.1 333 127.7 336 128.3 339 127.2 342 125.5 345 124.1 348 124.1 351 126.0 354 127.6 357 128.8 360 128.5 363 125.7 366 130.0 369 125.4 372 128.5 375 124.0 378 128.8 381 128.2 384 130.2 387 129.8 390 128.3 393 129.4 396 128.7 399 127.8 402 125.0 405 127.1 408 129.8 411 125.2 414 130.3 417 127.3 420 126.3" fill="none" stroke="#1f62e0" stroke-width="1" opacity="0.75"/>
<polyline points="0 126.8 3 129.5 6 127.9 9 125.6 12 128.9 15 126.4 18 126.5 21 130.1 24 130.4 27 129.0 30 131.1 33 125.9 36 124.9 39 126.3 42 129.8 45 129.8 48 124.7 51 130.9 54 124.7 57 127.1 60 125.5 63 128.8 66 128.2 69 128.6 72 128.7 75 128.0 78 127.0 81 125.8 84 127.6 87 128.4 90 125.9 93 127.1 96 124.8 99 130.4 102 126.5 105 127.2 108 125.2 111 126.3 114 128.1 117 128.1 120 127.2 123 126.5 126 124.9 129 129.7 132 126.5 135 124.7 138 130.9 141 125.2 144 127.8 147 124.7 150 125.5 153 127.5 156 126.9 159 130.5 162 130.5 165 128.5 168 129.8 171 130.1 174 124.2 177 128.9 180 125.0 183 126.5 186 126.8 189 129.5 192 128.2 195 127.3 198 126.5 201 129.6 204 125.5 207 130.5 210 128.0 213 128.3 216 130.3 219 130.3 222 126.8 225 129.9 228 125.6 231 126.5 234 125.4 237 130.4 240 131.1 243 129.6 246 125.9 249 130.8 252 127.5 255 124.2 258 131.1 261 130.9 264 125.1 267 124.2 270 126.9 273 126.6 276 129.4 279 127.6 282 130.8 285 129.2 288 124.3 291 129.9 294 131.2 297 129.5 300 125.6 303 126.6 306 125.2 309 130.5 312 128.7 315 129.6 318 124.8 321 125.0 324 127.1 327 130.8 330 124.6 333 127.2 336 125.7 339 131.1 342 126.1 345 129.2 348 125.2 351 131.0 354 128.1 357 127.2 360 125.5 363 130.1 366 130.2 369 125.9 372 127.4 375 125.1 378 124.8 381 129.9 384 125.2 387 129.9 390 124.3 393 128.1 396 130.9 399 130.3 402 124.7 405 131.0 408 125.6 411 129.8 414 124.3 417 127.8 420 130.9" fill="none" stroke="#2a4fd0" stroke-width="1" opacity="0.75"/>
<polyline points="0 131.0 3 129.7 6 126.6 9 128.9 12 131.6 15 129.2 18 130.3 21 132.5 24 130.7 27 130.6 30 126.4 33 126.4 36 131.6 39 129.1 42 132.3 45 132.0 48 132.6 51 128.8 54 133.2 57 131.5 60 132.4 63 127.2 66 131.6 69 129.1 72 133.0 75 133.1 78 127.7 81 129.1 84 128.1 87 129.5 90 128.2 93 130.8 96 127.0 99 127.4 102 129.4 105 126.7 108 128.9 111 132.5 114 132.4 117 127.6 120 126.3 123 132.0 126 132.9 129 130.4 132 127.1 135 127.8 138 132.6 141 132.7 144 126.4 147 127.5 150 129.2 153 128.1 156 131.5 159 128.8 162 131.6 165 127.2 168 129.8 171 133.0 174 131.1 177 126.8 180 127.0 183 130.7 186 128.8 189 128.8 192 129.5 195 130.3 198 132.9 201 127.9 204 130.2 207 128.0 210 130.0 213 131.3 216 127.1 219 129.6 222 131.1 225 126.2 228 131.6 231 129.1 234 129.7 237 130.5 240 131.7 243 126.6 246 129.7 249 126.5 252 128.9 255 128.6 258 126.3 261 128.3 264 129.3 267 130.8 270 132.7 273 128.8 276 129.9 279 131.2 282 132.7 285 132.8 288 133.1 291 128.3 294 127.3 297 132.7 300 126.7 303 129.3 306 131.3 309 129.9 312 128.9 315 132.7 318 128.3 321 130.0 324 132.0 327 127.1 330 128.6 333 129.6 336 130.1 339 127.6 342 129.4 345 126.6 348 126.8 351 128.6 354 127.2 357 133.0 360 128.0 363 128.1 366 131.7 369 131.4 372 128.0 375 132.0 378 130.6 381 128.9 384 130.6 387 127.9 390 128.0 393 132.3 396 129.3 399 132.5 402 127.4 405 127.1 408 126.5 411 131.4 414 130.1 417 126.3 420 126.5" fill="none" stroke="#2a4fd0" stroke-width="1" opacity="0.75"/>
<polyline points="0 129.1 3 123.2 6 127.1 9 123.8 12 128.0 15 127.2 18 127.2 21 124.5 24 129.6 27 123.7 30 123.4 33 127.7 36 123.6 39 123.4 42 126.2 45 127.5 48 129.2 51 128.0 54 123.4 57 127.5 60 128.9 63 123.8 66 128.2 69 124.8 72 125.1 75 123.0 78 128.3 81 126.6 84 129.3 87 126.2 90 124.0 93 124.5 96 124.8 99 129.6 102 124.4 105 123.6 108 125.4 111 123.5 114 125.9 117 127.3 120 127.5 123 124.2 126 123.9 129 126.4 132 127.8 135 126.1 138 127.0 141 129.3 144 124.0 147 124.8 150 126.4 153 126.7 156 129.3 159 126.8 162 127.6 165 125.9 168 128.5 171 128.8 174 125.0 177 123.7 180 124.8 183 125.5 186 129.2 189 124.8 192 127.4 195 127.4 198 129.7 201 123.8 204 128.3 207 125.3 210 123.7 213 127.4 216 128.9 219 127.0 222 123.3 225 129.8 228 125.6 231 127.4 234 128.0 237 124.8 240 125.8 243 125.3 246 123.6 249 123.4 252 128.0 255 125.8 258 129.0 261 123.4 264 125.1 267 124.2 270 129.6 273 128.5 276 129.2 279 126.5 282 123.7 285 125.9 288 124.5 291 123.1 294 126.9 297 125.0 300 123.7 303 126.5 306 129.5 309 129.6 312 126.2 315 123.7 318 128.3 321 123.8 324 126.7 327 123.5 330 129.9 333 126.8 336 126.0 339 124.9 342 126.8 345 129.8 348 126.0 351 124.4 354 126.6 357 129.4 360 125.6 363 127.4 366 129.4 369 125.2 372 128.6 375 126.7 378 123.9 381 123.3 384 129.5 387 126.2 390 126.1 393 129.4 396 127.0 399 126.5 402 124.9 405 128.2 408 124.8 411 126.3 414 128.3 417 127.2 420 123.9" fill="none" stroke="#1f62e0" stroke-width="1" opacity="0.75"/>
<polyline points="0 129.4 3 128.1 6 125.8 9 124.3 12 124.4 15 127.2 18 127.7 21 124.5 24 125.9 27 127.4 30 128.3 33 126.1 36 124.8 39 128.9 42 127.1 45 127.6 48 126.5 51 126.6 54 124.1 57 122.9 60 126.7 63 126.1 66 128.6 69 128.8 72 126.3 75 126.9 78 126.9 81 123.1 84 124.7 87 126.4 90 124.8 93 125.3 96 128.1 99 124.7 102 124.1 105 129.4 108 122.9 111 126.1 114 123.8 117 129.4 120 125.6 123 124.7 126 128.5 129 126.8 132 125.9 135 129.1 138 126.4 141 125.0 144 127.5 147 128.2 150 122.8 153 126.7 156 127.3 159 126.5 162 126.1 165 126.0 168 125.3 171 124.3 174 122.7 177 129.5 180 127.9 183 123.9 186 123.9 189 126.3 192 127.4 195 125.5 198 123.4 201 125.6 204 128.7 207 127.2 210 129.1 213 124.1 216 124.4 219 123.2 222 129.2 225 125.3 228 126.8 231 124.3 234 123.4 237 126.6 240 126.6 243 128.3 246 128.2 249 127.8 252 128.9 255 126.4 258 122.7 261 125.7 264 125.9 267 124.0 270 124.0 273 123.9 276 128.9 279 129.0 282 126.0 285 124.7 288 123.2 291 128.1 294 127.6 297 127.0 300 126.0 303 127.0 306 126.9 309 129.1 312 128.7 315 124.1 318 127.3 321 125.8 324 126.2 327 129.5 330 127.6 333 124.1 336 126.4 339 128.9 342 123.9 345 125.5 348 122.9 351 123.1 354 124.0 357 128.8 360 125.4 363 128.1 366 123.5 369 125.4 372 124.0 375 123.6 378 129.0 381 123.7 384 129.4 387 124.6 390 126.4 393 124.1 396 127.5 399 128.6 402 124.6 405 123.3 408 124.3 411 125.7 414 128.4 417 128.5 420 129.0" fill="none" stroke="#2a4fd0" stroke-width="1" opacity="0.75"/>
<polyline points="0 181.8 3 179.6 6 177.6 9 178.7 12 178.1 15 181.5 18 182.2 21 177.6 24 180.3 27 182.8 30 179.0 33 176.8 36 180.9 39 179.0 42 177.2 45 178.4 48 176.1 51 177.3 54 179.5 57 176.9 60 176.1 63 180.5 66 183.7 69 182.7 72 178.7 75 183.5 78 176.7 81 177.3 84 176.1 87 176.5 90 180.9 93 182.1 96 179.9 99 182.5 102 179.7 105 183.4 108 180.9 111 180.4 114 177.4 117 179.5 120 179.6 123 182.6 126 177.9 129 178.4 132 182.6 135 176.6 138 180.4 141 177.8 144 181.4 147 180.8 150 176.8 153 181.9 156 179.3 159 178.6 162 182.9 165 182.3 168 178.5 171 181.5 174 177.0 177 180.2 180 176.7 183 181.2 186 183.4 189 181.2 192 176.4 195 180.2 198 179.8 201 179.6 204 177.3 207 178.3 210 179.7 213 176.6 216 181.5 219 178.0 222 178.4 225 176.8 228 178.5 231 183.5 234 178.4 237 176.8 240 178.8 243 183.6 246 176.8 249 178.8 252 177.7 255 181.5 258 179.8 261 176.8 264 183.0 267 178.7 270 181.6 273 179.7 276 183.0 279 176.5 282 177.9 285 178.3 288 178.2 291 182.6 294 180.1 297 178.8 300 180.1 303 182.8 306 180.6 309 179.7 312 181.3 315 181.0 318 179.3 321 179.5 324 177.1 327 179.6 330 183.1 333 178.5 336 179.0 339 180.9 342 180.8 345 177.5 348 179.6 351 181.9 354 176.4 357 176.9 360 182.1 363 183.3 366 176.6 369 176.7 372 181.1 375 178.3 378 181.3 381 176.3 384 179.7 387 177.4 390 178.7 393 181.6 396 180.1 399 182.9 402 182.8 405 181.0 408 182.8 411 177.5 414 179.9 417 178.6 420 181.1" fill="none" stroke="#1f62e0" stroke-width="1" opacity="0.45"/>
<polyline points="0 174.7 3 179.9 6 175.2 9 177.5 12 173.4 15 175.7 18 176.1 21 174.6 24 173.7 27 178.9 30 176.8 33 175.4 36 174.0 39 180.4 42 172.6 45 178.0 48 175.0 51 174.1 54 173.7 57 179.8 60 176.6 63 173.4 66 175.5 69 174.1 72 174.0 75 175.7 78 178.0 81 179.5 84 177.8 87 172.7 90 173.4 93 176.9 96 173.3 99 175.2 102 175.3 105 179.3 108 172.6 111 174.1 114 172.8 117 176.3 120 174.1 123 179.9 126 180.4 129 175.1 132 175.0 135 175.4 138 172.6 141 178.1 144 178.6 147 173.4 150 178.0 153 173.5 156 179.7 159 177.6 162 178.7 165 179.7 168 177.2 171 179.9 174 175.3 177 175.2 180 175.8 183 178.7 186 175.0 189 175.6 192 174.4 195 180.2 198 179.2 201 178.6 204 176.3 207 174.4 210 172.9 213 178.5 216 178.5 219 180.0 222 174.2 225 177.8 228 173.3 231 176.4 234 178.0 237 172.5 240 173.7 243 178.4 246 179.9 249 175.1 252 174.4 255 177.4 258 172.6 261 178.1 264 172.5 267 180.1 270 176.7 273 175.3 276 174.6 279 174.2 282 179.2 285 177.2 288 176.1 291 178.0 294 177.2 297 174.1 300 179.8 303 177.0 306 173.2 309 174.4 312 175.6 315 177.7 318 174.2 321 179.2 324 173.6 327 178.6 330 173.9 333 177.3 336 177.4 339 179.2 342 177.3 345 174.3 348 176.0 351 174.9 354 174.5 357 177.3 360 177.2 363 178.9 366 177.7 369 177.9 372 177.6 375 177.0 378 180.1 381 180.4 384 172.6 387 172.6 390 173.8 393 173.8 396 178.8 399 175.5 402 179.2 405 179.3 408 177.3 411 175.2 414 174.1 417 176.9 420 177.5" fill="none" stroke="#2a4fd0" stroke-width="1" opacity="0.45"/>
<polyline points="0 177.2 3 170.0 6 173.8 9 172.2 12 170.1 15 172.0 18 171.1 21 173.0 24 177.1 27 170.5 30 172.6 33 175.4 36 174.8 39 170.0 42 171.6 45 172.1 48 177.0 51 173.4 54 171.9 57 173.7 60 173.7 63 171.0 66 175.2 69 175.6 72 173.6 75 174.1 78 176.0 81 177.5 84 174.7 87 170.2 90 173.9 93 175.1 96 172.5 99 175.3 102 172.8 105 174.7 108 174.7 111 175.2 114 177.2 117 175.5 120 175.5 123 175.5 126 171.7 129 174.7 132 174.8 135 170.3 138 175.9 141 171.6 144 173.8 147 174.0 150 175.6 153 175.9 156 173.6 159 177.3 162 173.4 165 174.3 168 177.7 171 172.4 174 175.5 177 177.5 180 170.5 183 176.0 186 175.0 189 174.1 192 176.1 195 176.7 198 171.0 201 173.7 204 174.7 207 175.4 210 177.5 213 176.2 216 176.4 219 170.3 222 173.2 225 177.1 228 177.4 231 175.9 234 172.5 237 176.0 240 174.1 243 175.2 246 174.9 249 176.7 252 175.5 255 177.6 258 173.8 261 173.8 264 175.1 267 174.3 270 170.2 273 177.5 276 172.4 279 173.8 282 170.2 285 171.3 288 177.2 291 172.0 294 172.2 297 176.3 300 171.7 303 175.2 306 174.4 309 177.0 312 173.6 315 172.4 318 171.9 321 172.7 324 169.8 327 170.8 330 171.0 333 172.3 336 176.0 339 177.4 342 172.7 345 171.8 348 172.2 351 174.8 354 173.6 357 170.8 360 174.0 363 172.0 366 171.0 369 176.1 372 170.7 375 173.3 378 175.9 381 174.2 384 176.8 387 172.4 390 177.4 393 170.2 396 177.0 399 173.2 402 169.8 405 171.9 408 177.7 411 175.5 414 175.7 417 176.3 420 169.9" fill="none" stroke="#1a84d8" stroke-width="1" opacity="0.45"/>
<polyline points="0 174.6 3 179.2 6 178.5 9 176.4 12 181.2 15 180.4 18 175.7 21 177.0 24 181.2 27 173.5 30 177.3 33 179.4 36 181.4 39 174.3 42 177.6 45 174.1 48 181.4 51 174.4 54 178.1 57 178.6 60 177.5 63 176.6 66 175.0 69 178.9 72 177.3 75 177.7 78 175.1 81 179.2 84 173.7 87 178.4 90 176.8 93 181.2 96 177.2 99 178.0 102 180.7 105 180.7 108 175.6 111 175.3 114 177.4 117 175.5 120 175.6 123 178.4 126 181.2 129 177.9 132 181.4 135 176.9 138 178.9 141 177.2 144 173.9 147 174.9 150 175.3 153 177.6 156 180.4 159 174.7 162 176.3 165 179.0 168 179.7 171 176.9 174 175.3 177 181.0 180 181.2 183 178.7 186 178.1 189 180.4 192 177.0 195 174.8 198 176.4 201 174.4 204 177.2 207 174.1 210 177.2 213 178.8 216 176.4 219 178.3 222 181.3 225 175.4 228 177.6 231 178.8 234 176.5 237 175.9 240 177.6 243 179.4 246 176.5 249 179.8 252 180.3 255 176.5 258 176.8 261 178.3 264 176.9 267 180.2 270 175.2 273 174.9 276 179.2 279 180.8 282 176.2 285 173.8 288 179.7 291 180.8 294 176.9 297 177.7 300 180.6 303 178.9 306 174.4 309 181.5 312 176.4 315 176.6 318 178.0 321 176.5 324 176.0 327 175.3 330 174.7 333 176.1 336 180.2 339 176.0 342 176.1 345 175.3 348 180.6 351 180.6 354 179.5 357 176.1 360 174.2 363 177.5 366 181.2 369 174.2 372 174.7 375 176.1 378 179.1 381 179.6 384 174.8 387 175.1 390 176.6 393 181.4 396 175.7 399 178.6 402 180.7 405 173.7 408 179.9 411 178.3 414 174.3 417 179.5 420 177.6" fill="none" stroke="#2a4fd0" stroke-width="1" opacity="0.45"/>
<rect x="0" y="119.5" width="418" height="62" fill="url(#band)"/>
<rect x="0" y="119.5" width="418" height="62" filter="url(#spk)" mask="url(#bm)"/>
<path d="M234 140L241.5 111L249 140" fill="none" stroke="#7cc08a" stroke-width="3" opacity="0.85"/>
<path d="M237 140L241.5 118L246 140" fill="none" stroke="#2aa8c0" stroke-width="1.5" opacity="0.8"/>
<rect x="0" y="22" width="418" height="1.3" fill="#1d8ae8"/>
<rect x="156" y="0" width="1.5" height="184" fill="#222238" opacity="0.9"/>
<rect x="284" y="0" width="1.5" height="184" fill="#222238" opacity="0.9"/>
<rect x="0" y="104" width="418" height="1.5" fill="#222238" opacity="0.9"/>
<rect x="0" y="171" width="418" height="1.5" fill="#222238" opacity="0.75"/>
<circle cx="401" cy="15" r="7" fill="none" stroke="#1e1a4a" stroke-width="5" opacity="0.6"/>
</svg><svg class="a" style="left:396px;top:162px" width="419" height="14" viewBox="0 0 419 14">
<defs><linearGradient id="cb1" x1="0" y1="0" x2="1" y2="0">
<stop offset="0" stop-color="#352a87"/><stop offset="0.05" stop-color="#3040c0"/><stop offset="0.12" stop-color="#2060e8"/>
<stop offset="0.22" stop-color="#1880e0"/><stop offset="0.33" stop-color="#0aa0d0"/><stop offset="0.45" stop-color="#20b4b0"/>
<stop offset="0.58" stop-color="#6cc080"/><stop offset="0.7" stop-color="#bcbc60"/><stop offset="0.83" stop-color="#fcb838"/><stop offset="0.95" stop-color="#f8ee20"/><stop offset="1" stop-color="#f9fb0e"/>
</linearGradient></defs>
<rect x="0.75" y="0.75" width="417.5" height="12.5" fill="url(#cb1)" stroke="#000" stroke-width="1.5"/>
<text x="53.5" y="11" font-size="9.5" text-anchor="middle" fill="#151520" font-family="Liberation Sans" opacity="0.9">0.158 (%)</text>
<text x="105.80000000000001" y="11" font-size="9.5" text-anchor="middle" fill="#151520" font-family="Liberation Sans" opacity="0.9">0.251</text>
<text x="157.5" y="11" font-size="9.5" text-anchor="middle" fill="#151520" font-family="Liberation Sans" opacity="0.9">0.398</text>
<text x="209.5" y="11" font-size="9.5" text-anchor="middle" fill="#151520" font-family="Liberation Sans" opacity="0.9">0.631</text>
<text x="261.5" y="11" font-size="9.5" text-anchor="middle" fill="#151520" font-family="Liberation Sans" opacity="0.9">1.000</text>
<text x="313.5" y="11" font-size="9.5" text-anchor="middle" fill="#151520" font-family="Liberation Sans" opacity="0.9">1.585</text>
<text x="365.5" y="11" font-size="9.5" text-anchor="middle" fill="#151520" font-family="Liberation Sans" opacity="0.9">2.512</text>
<rect x="53.0" y="1.2" width="1" height="2.2" fill="#000"/>
<rect x="105.3" y="1.2" width="1" height="2.2" fill="#000"/>
<rect x="157.0" y="1.2" width="1" height="2.2" fill="#000"/>
<rect x="209.0" y="1.2" width="1" height="2.2" fill="#000"/>
<rect x="261.0" y="1.2" width="1" height="2.2" fill="#000"/>
<rect x="313.0" y="1.2" width="1" height="2.2" fill="#000"/>
<rect x="365.0" y="1.2" width="1" height="2.2" fill="#000"/>
</svg><svg class="a" style="left:396px;top:432px" width="418" height="209" viewBox="0 0 418 209">
<defs>
<filter id="sg1" x="0" y="0" width="100%" height="100%" color-interpolation-filters="sRGB"><feTurbulence type="fractalNoise" baseFrequency="0.8 0.11" numOctaves="2" seed="11"/><feColorMatrix type="matrix" values="0 0 0 0 0.19  0 0 0 0 0.18  0 0 0 0 0.62  0 0 0 -8 3.55"/></filter>
<filter id="sg2" x="0" y="0" width="100%" height="100%" color-interpolation-filters="sRGB"><feTurbulence type="fractalNoise" baseFrequency="0.8 0.11" numOctaves="2" seed="29"/><feColorMatrix type="matrix" values="0 0 0 0 0.10  0 0 0 0 0.56  0 0 0 0 0.88  0 0 0 -7 3.5"/></filter>
<filter id="sg3" x="0" y="0" width="100%" height="100%" color-interpolation-filters="sRGB"><feTurbulence type="fractalNoise" baseFrequency="0.35 0.06" numOctaves="2" seed="5"/><feColorMatrix type="matrix" values="0 0 0 0 0.2  0 0 0 0 0.22  0 0 0 0 0.65  0 0 0 -5 2.7"/></filter>
<linearGradient id="yl" x1="0" y1="0" x2="0" y2="1"><stop offset="0" stop-color="#1a8ad8" stop-opacity="0"/><stop offset="0.15" stop-color="#18a8c0"/><stop offset="0.28" stop-color="#f4c030"/><stop offset="0.4" stop-color="#f9ee10"/><stop offset="0.6" stop-color="#f9ee10"/><stop offset="0.72" stop-color="#f4c030"/><stop offset="0.85" stop-color="#18a8c0"/><stop offset="1" stop-color="#1a8ad8" stop-opacity="0"/></linearGradient>
</defs>
<rect width="418" height="209" fill="#1a66e0"/>
<rect width="418" height="209" filter="url(#sg2)" opacity="0.6"/>
<rect width="418" height="209" filter="url(#sg3)" opacity="0.45"/>
<rect width="418" height="209" filter="url(#sg1)"/>
<rect x="0" y="86" width="71" height="5" fill="#1ea0c8" opacity="0.85"/>
<g transform="matrix(1 -0.10287 0 1 0 121)"><rect x="0" y="-8.5" width="418" height="17" fill="url(#yl)"/></g>
<rect x="41.60000000000002" y="0" width="1.4" height="209" fill="#1c2448" opacity="0.75"/>
<rect x="374.6" y="0" width="1.4" height="209" fill="#1c2448" opacity="0.75"/>
<rect x="0" y="65.89999999999998" width="418" height="1.4" fill="#1c2448" opacity="0.75"/>
<rect x="0" y="131.29999999999995" width="418" height="1.4" fill="#1c2448" opacity="0.75"/>
<circle cx="401" cy="15" r="6.5" fill="none" stroke="#1a2a60" stroke-width="4.5" opacity="0.65"/>
</svg><svg class="a" style="left:396px;top:412px" width="419" height="14" viewBox="0 0 419 14">
<defs><linearGradient id="cb2" x1="0" y1="0" x2="1" y2="0">
<stop offset="0" stop-color="#352a87"/><stop offset="0.05" stop-color="#3040c0"/><stop offset="0.12" stop-color="#2060e8"/>
<stop offset="0.22" stop-color="#1880e0"/><stop offset="0.33" stop-color="#0aa0d0"/><stop offset="0.45" stop-color="#20b4b0"/>
<stop offset="0.58" stop-color="#6cc080"/><stop offset="0.7" stop-color="#bcbc60"/><stop offset="0.83" stop-color="#fcb838"/><stop offset="0.95" stop-color="#f8ee20"/><stop offset="1" stop-color="#f9fb0e"/>
</linearGradient></defs>
<rect x="0.75" y="0.75" width="417.5" height="12.5" fill="url(#cb2)" stroke="#000" stroke-width="1.5"/>
<text x="28" y="11" font-size="9.5" text-anchor="middle" fill="#151520" font-family="Liberation Sans" opacity="0.9">-40 (dB)</text>
<text x="80" y="11" font-size="9.5" text-anchor="middle" fill="#151520" font-family="Liberation Sans" opacity="0.9">-35</text>
<text x="134" y="11" font-size="9.5" text-anchor="middle" fill="#151520" font-family="Liberation Sans" opacity="0.9">-30</text>
<text x="187" y="11" font-size="9.5" text-anchor="middle" fill="#151520" font-family="Liberation Sans" opacity="0.9">-25</text>
<text x="240" y="11" font-size="9.5" text-anchor="middle" fill="#151520" font-family="Liberation Sans" opacity="0.9">-20</text>
<text x="292" y="11" font-size="9.5" text-anchor="middle" fill="#151520" font-family="Liberation Sans" opacity="0.9">-15</text>
<text x="345" y="11" font-size="9.5" text-anchor="middle" fill="#151520" font-family="Liberation Sans" opacity="0.9">-10</text>
<text x="398" y="11" font-size="9.5" text-anchor="middle" fill="#151520" font-family="Liberation Sans" opacity="0.9">-5</text>
<rect x="27.5" y="1.2" width="1" height="2.2" fill="#000"/>
<rect x="79.5" y="1.2" width="1" height="2.2" fill="#000"/>
<rect x="133.5" y="1.2" width="1" height="2.2" fill="#000"/>
<rect x="186.5" y="1.2" width="1" height="2.2" fill="#000"/>
<rect x="239.5" y="1.2" width="1" height="2.2" fill="#000"/>
<rect x="291.5" y="1.2" width="1" height="2.2" fill="#000"/>
<rect x="344.5" y="1.2" width="1" height="2.2" fill="#000"/>
<rect x="397.5" y="1.2" width="1" height="2.2" fill="#000"/>
</svg><svg class="a" style="left:891px;top:162px" width="417" height="156" viewBox="0 0 417 156">
<rect width="417" height="156" fill="#fff"/>
<rect x="55.9" y="0" width="1" height="156" fill="#d9d9d9"/>
<rect x="121.8" y="0" width="1" height="156" fill="#d9d9d9"/>
<rect x="188.8" y="0" width="1" height="156" fill="#d9d9d9"/>
<rect x="255.7" y="0" width="1" height="156" fill="#d9d9d9"/>
<rect x="322.7" y="0" width="1" height="156" fill="#d9d9d9"/>
<rect x="389.7" y="0" width="1" height="156" fill="#d9d9d9"/>
<rect x="0" y="26.5" width="417" height="1" fill="#d9d9d9"/>
<rect x="0" y="76.5" width="417" height="1" fill="#d9d9d9"/>
<rect x="0" y="126.0" width="417" height="1" fill="#d9d9d9"/>
<path d="M43.5 75.1V78.9M44.5 73.6V80.4M45.5 71.3V82.7M46.5 68.1V85.9M47.5 67.9V86.1M48.5 65.7V88.3M49.5 62.1V91.9M50.5 60.9V93.1M51.5 56.7V97.3M52.5 56.9V97.1M53.5 48.3V105.7M54.5 47.5V106.5M55.5 46.4V107.6M56.5 44.0V110.0M57.5 44.7V109.3M58.5 34.4V119.6M59.5 35.7V118.3M60.5 36.9V117.1M61.5 32.7V121.3M62.5 44.2V109.8M63.5 33.0V121.0M64.5 31.0V123.0M65.5 32.5V121.5M66.5 40.6V113.4M67.5 30.3V123.7M68.5 36.2V117.8M69.5 38.2V115.8M70.5 37.4V116.6M71.5 38.8V115.2M72.5 40.0V114.0M73.5 31.0V123.0M74.5 41.8V112.2M75.5 31.7V122.3M76.5 30.1V123.9M77.5 31.8V122.2M78.5 32.9V121.1M79.5 34.2V119.8M80.5 39.0V115.0M81.5 36.7V117.3M82.5 38.6V115.4M83.5 32.4V121.6M84.5 35.9V118.1M85.5 41.3V112.7M86.5 38.4V115.6M87.5 29.9V124.1M88.5 40.1V113.9M89.5 34.6V119.4M90.5 34.4V119.6M91.5 28.1V125.9M92.5 28.5V125.5M93.5 30.1V123.9M94.5 34.1V119.9M95.5 32.2V121.8M96.5 38.9V115.1M97.5 29.5V124.5M98.5 39.5V114.5M99.5 31.4V122.6M100.5 33.0V121.0M101.5 36.8V117.2M102.5 35.4V118.6M103.5 29.4V124.6M104.5 34.9V119.1M105.5 31.9V122.1M106.5 30.5V123.5M107.5 24.9V129.1M108.5 25.7V128.3M109.5 34.3V119.7M110.5 33.6V120.4M111.5 29.5V124.5M112.5 31.2V122.8M113.5 24.9V129.1M114.5 22.9V131.1M115.5 29.8V124.2M116.5 30.9V123.1M117.5 28.3V125.7M118.5 33.7V120.3M119.5 37.2V116.8M120.5 32.6V121.4M121.5 34.8V119.2M122.5 27.6V126.4M123.5 35.4V118.6M124.5 27.8V126.2M125.5 33.8V120.2M126.5 24.7V129.3M127.5 33.6V120.4M128.5 34.2V119.8M129.5 22.4V131.6M130.5 29.5V124.5M131.5 37.9V116.1M132.5 31.5V122.5M133.5 27.1V126.9M134.5 31.4V122.6M135.5 29.2V124.8M136.5 37.8V116.2M137.5 35.7V118.3M138.5 25.0V129.0M139.5 36.3V117.7M140.5 31.4V122.6M141.5 32.7V121.3M142.5 34.5V119.5M143.5 22.7V131.3M144.5 28.7V125.3M145.5 28.0V126.0M146.5 25.3V128.7M147.5 22.5V131.5M148.5 28.6V125.4M149.5 31.8V122.2M150.5 33.5V120.5M151.5 26.7V127.3M152.5 35.7V118.3M153.5 24.1V129.9M154.5 28.5V125.5M155.5 22.7V131.3M156.5 32.5V121.5M157.5 24.5V129.5M158.5 29.9V124.1M159.5 27.7V126.3M160.5 24.4V129.6M161.5 24.8V129.2M162.5 35.4V118.6M163.5 25.2V128.8M164.5 28.7V125.3M165.5 24.9V129.1M166.5 34.9V119.1M167.5 37.9V116.1M168.5 31.8V122.2M169.5 25.3V128.7M170.5 30.0V124.0M171.5 37.0V117.0M172.5 23.3V130.7M173.5 32.7V121.3M174.5 27.5V126.5M175.5 27.1V126.9M176.5 37.2V116.8M177.5 35.2V118.8M178.5 30.2V123.8M179.5 27.4V126.6M180.5 26.8V127.2M181.5 38.7V115.3M182.5 36.5V117.5M183.5 25.3V128.7M184.5 38.5V115.5M185.5 34.2V119.8M186.5 27.2V126.8M187.5 31.0V123.0M188.5 38.3V115.7M189.5 32.5V121.5M190.5 39.3V114.7M191.5 38.3V115.7M192.5 29.3V124.7M193.5 35.3V118.7M194.5 38.8V115.2M195.5 37.0V117.0M196.5 38.6V115.4M197.5 31.3V122.7M198.5 26.6V127.4M199.5 38.3V115.7M200.5 33.0V121.0M201.5 37.9V116.1M202.5 34.3V119.7M203.5 34.5V119.5M204.5 30.6V123.4M205.5 38.0V116.0M206.5 31.1V122.9M207.5 33.5V120.5M208.5 30.4V123.6M209.5 32.7V121.3M210.5 33.9V120.1M211.5 37.1V116.9M212.5 38.7V115.3M213.5 39.8V114.2M214.5 32.1V121.9M215.5 33.5V120.5M216.5 35.5V118.5M217.5 36.2V117.8M218.5 35.1V118.9M219.5 32.0V122.0M220.5 32.3V121.7M221.5 31.7V122.3M222.5 34.7V119.3M223.5 43.8V110.2M224.5 32.2V121.8M225.5 39.9V114.1M226.5 42.6V111.4M227.5 36.8V117.2M228.5 38.4V115.6M229.5 43.3V110.7M230.5 40.1V113.9M231.5 45.6V108.4M232.5 33.8V120.2M233.5 38.2V115.8M234.5 43.1V110.9M235.5 36.8V117.2M236.5 37.9V116.1M237.5 40.0V114.0M238.5 36.3V117.7M239.5 43.2V110.8M240.5 46.4V107.6M241.5 40.8V113.2M242.5 36.8V117.2M243.5 46.2V107.8M244.5 42.8V111.2M245.5 46.4V107.6M246.5 39.3V114.7M247.5 47.4V106.6M248.5 49.2V104.8M249.5 49.7V104.3M250.5 43.6V110.4M251.5 39.8V114.2M252.5 46.2V107.8M253.5 42.0V112.0M254.5 42.0V112.0M255.5 45.7V108.3M256.5 40.6V113.4M257.5 47.1V106.9M258.5 51.0V103.0M259.5 46.5V107.5M260.5 50.3V103.7M261.5 50.2V103.8M262.5 48.3V105.7M263.5 51.9V102.1M264.5 49.6V104.4M265.5 49.7V104.3M266.5 49.4V104.6M267.5 43.8V110.2M268.5 48.6V105.4M269.5 49.8V104.2M270.5 47.7V106.3M271.5 50.3V103.7M272.5 48.8V105.2M273.5 50.6V103.4M274.5 50.3V103.7M275.5 48.6V105.4M276.5 51.4V102.6M277.5 48.9V105.1M278.5 51.4V102.6M279.5 48.1V105.9M280.5 53.2V100.8M281.5 50.0V104.0M282.5 53.2V100.8M283.5 55.9V98.1M284.5 55.8V98.2M285.5 49.9V104.1M286.5 50.3V103.7M287.5 55.0V99.0M288.5 51.0V103.0M289.5 53.7V100.3M290.5 54.9V99.1M291.5 55.3V98.7M292.5 53.7V100.3M293.5 57.5V96.5M294.5 57.5V96.5M295.5 56.5V97.5M296.5 53.9V100.1M297.5 53.7V100.3M298.5 58.4V95.6M299.5 54.6V99.4M300.5 58.8V95.2M301.5 55.3V98.7M302.5 56.7V97.3M303.5 54.3V99.7M304.5 58.7V95.3M305.5 60.2V93.8M306.5 58.3V95.7M307.5 60.6V93.4M308.5 54.9V99.1M309.5 56.1V97.9M310.5 60.0V94.0M311.5 60.9V93.1M312.5 61.5V92.5M313.5 56.8V97.2M314.5 57.5V96.5M315.5 56.7V97.3M316.5 62.4V91.6M317.5 57.0V97.0M318.5 61.6V92.4M319.5 62.0V92.0M320.5 62.6V91.4M321.5 59.7V94.3M322.5 64.6V89.4M323.5 61.0V93.0M324.5 61.7V92.3M325.5 65.9V88.1M326.5 65.6V88.4M327.5 64.7V89.3M328.5 64.2V89.8M329.5 67.2V86.8M330.5 64.6V89.4M331.5 67.9V86.1M332.5 66.8V87.2M333.5 68.5V85.5M334.5 67.1V86.9M335.5 67.6V86.4M336.5 68.0V86.0M337.5 68.6V85.4M338.5 69.1V84.9M339.5 70.7V83.3M340.5 70.0V84.0M341.5 71.0V83.0M342.5 72.0V82.0M343.5 71.4V82.6M344.5 72.1V81.9M345.5 72.9V81.1M346.5 72.7V81.3M347.5 73.7V80.3M348.5 74.3V79.7M349.5 74.2V79.8M350.5 74.2V79.8M351.5 74.6V79.4M352.5 74.8V79.2M353.5 75.2V78.8M354.5 75.5V78.5M355.5 75.9V78.1" stroke="#4dbeee" stroke-width="1" stroke-opacity="0.8"/>
<path d="M41.5 32.7V128.8M42.5 25.8V127.6M43.5 31.4V126.2M44.5 26.3V128.7M45.5 26.4V120.8M46.5 32.9V122.3M47.5 30.0V117.9M48.5 25.5V123.1M49.5 32.5V125.4M50.5 36.6V121.2M51.5 38.7V129.5M52.5 33.5V115.4M53.5 24.6V122.8M54.5 38.6V123.3M55.5 29.4V118.0M56.5 31.7V128.5M57.5 28.2V115.6M58.5 26.3V127.7M59.5 39.4V126.8M60.5 35.4V123.6M61.5 38.1V120.9M62.5 38.4V127.7M63.5 26.6V128.0M64.5 26.5V129.1M65.5 35.5V126.3M66.5 39.1V117.4M67.5 37.8V129.1M68.5 33.7V123.1M69.5 38.5V124.5M70.5 33.5V118.9M71.5 31.3V114.5M72.5 32.4V128.0M73.5 28.2V124.6M74.5 33.3V123.9M75.5 27.9V116.1M76.5 32.7V126.5M77.5 31.9V127.0M78.5 28.0V122.3M79.5 37.4V118.0M80.5 33.2V128.1M81.5 28.2V127.3M82.5 33.0V114.9M83.5 39.1V120.4M84.5 36.3V119.4M85.5 31.4V129.5M86.5 39.2V116.8M87.5 37.8V126.8M88.5 29.1V123.9M89.5 33.9V122.1M90.5 28.5V129.0M91.5 38.2V127.7M92.5 34.4V127.7M93.5 29.8V121.9M94.5 28.3V119.5M95.5 28.1V117.3M96.5 36.6V117.9M97.5 37.6V127.5M98.5 25.4V121.7M99.5 34.9V129.4M100.5 32.9V127.4M101.5 36.3V124.4M102.5 36.0V125.1M103.5 25.5V120.9M104.5 28.3V123.0M105.5 38.3V115.1M106.5 25.2V129.5M107.5 36.8V123.3M108.5 34.6V124.9M109.5 24.9V120.6M110.5 28.2V123.9M111.5 35.9V116.9M112.5 28.8V122.1M113.5 26.5V118.6M114.5 32.2V116.7M115.5 36.0V126.1M116.5 38.9V122.0M117.5 37.2V121.5M118.5 28.7V125.9M119.5 30.0V127.6M120.5 37.3V122.5M121.5 25.8V116.6M122.5 37.1V121.1M123.5 33.7V121.7M124.5 35.4V123.0M125.5 27.5V123.6M126.5 30.1V128.1M127.5 28.3V117.1M128.5 27.1V121.7M129.5 26.6V125.4M130.5 32.7V124.6M131.5 26.2V122.9M132.5 37.4V128.7M133.5 28.4V128.7M134.5 25.2V115.0M135.5 24.8V119.9M136.5 27.7V118.2M137.5 26.0V114.5M138.5 35.9V119.4M139.5 31.9V128.7M140.5 29.2V121.9M141.5 24.6V122.5M142.5 32.7V117.9M143.5 38.5V127.0M144.5 34.6V116.3M145.5 34.2V123.2M146.5 30.9V126.6M147.5 27.1V118.5M148.5 33.5V116.6M149.5 28.7V126.2M150.5 29.6V121.8M151.5 32.2V124.5M152.5 35.7V119.4M153.5 27.4V115.6M154.5 28.9V120.8M155.5 38.2V127.2M156.5 37.0V122.2M157.5 36.0V116.7M158.5 28.2V125.9M159.5 37.2V115.5M160.5 38.3V127.5M161.5 29.7V119.3M162.5 35.8V121.1M163.5 29.8V115.5M164.5 37.4V119.7M165.5 29.4V126.9M166.5 25.3V121.8M167.5 34.4V126.0M168.5 29.4V118.1M169.5 32.5V127.0M170.5 25.0V126.8M171.5 26.8V127.3M172.5 36.2V121.3M173.5 39.1V128.5M174.5 37.4V125.1M175.5 31.6V116.2M176.5 25.9V123.5M177.5 33.3V124.5M178.5 33.6V121.6M179.5 30.1V126.1M180.5 32.5V124.9M181.5 36.5V115.1M182.5 34.1V126.2M183.5 33.7V129.1M184.5 30.5V126.8M185.5 38.9V127.6M186.5 29.3V128.8M187.5 30.4V124.7M188.5 28.5V122.0M189.5 37.7V127.3M190.5 31.4V127.9M191.5 27.6V114.9M192.5 31.6V126.0M193.5 26.3V126.2M194.5 37.2V117.0M195.5 30.0V122.8M196.5 29.6V125.3M197.5 30.8V124.3M198.5 32.3V126.6M199.5 30.4V119.2M200.5 34.7V121.5M201.5 26.5V116.9M202.5 34.9V114.8M203.5 26.3V124.3M204.5 34.0V120.5M205.5 24.7V124.7M206.5 36.5V122.1M207.5 31.8V119.4M208.5 31.5V125.1M209.5 39.1V121.6M210.5 26.9V116.7M211.5 27.9V128.3M212.5 36.9V128.2M213.5 31.1V117.9M214.5 35.4V116.3M215.5 34.3V121.1M216.5 35.9V124.5M217.5 25.6V120.6M218.5 25.9V115.8M219.5 36.9V128.3M220.5 39.4V123.0M221.5 26.7V121.5M222.5 27.6V123.0M223.5 29.5V117.2M224.5 35.2V125.1M225.5 32.3V127.6M226.5 37.9V116.4M227.5 36.7V117.7M228.5 39.1V122.1M229.5 31.5V115.2M230.5 28.4V124.4M231.5 25.7V127.4M232.5 31.0V119.7M233.5 32.6V123.0M234.5 30.8V121.3M235.5 34.6V124.4M236.5 35.0V116.6M237.5 31.2V117.8M238.5 32.0V119.2M239.5 30.2V119.7M240.5 37.7V115.8M241.5 28.8V115.4M242.5 41.1V126.0M243.5 28.4V120.4M244.5 40.1V126.4M245.5 39.6V116.1M246.5 34.7V121.5M247.5 30.6V114.6M248.5 30.0V125.4M249.5 34.9V117.2M250.5 41.9V119.3M251.5 40.7V113.1M252.5 36.6V119.6M253.5 41.1V116.9M254.5 34.7V123.4M255.5 41.9V112.5M256.5 34.6V121.7M257.5 30.5V115.8M258.5 36.9V122.6M259.5 38.1V123.9M260.5 33.4V119.6M261.5 37.0V118.4M262.5 42.1V123.0M263.5 37.5V116.4M264.5 30.7V115.1M265.5 30.8V113.2M266.5 32.7V115.7M267.5 37.5V119.7M268.5 35.4V113.4M269.5 37.2V122.3M270.5 42.8V120.2M271.5 34.1V122.7M272.5 38.3V115.0M273.5 31.7V111.3M274.5 38.6V118.8M275.5 42.3V122.4M276.5 42.1V117.8M277.5 42.0V119.1M278.5 41.3V120.4M279.5 36.9V119.7M280.5 42.6V118.0M281.5 36.7V121.8M282.5 45.0V110.6M283.5 44.8V118.5M284.5 43.8V118.5M285.5 35.9V112.4M286.5 38.1V113.0M287.5 38.8V112.5M288.5 34.1V120.8M289.5 38.5V111.6M290.5 34.0V112.2M291.5 45.2V114.7M292.5 39.0V114.0M293.5 35.5V113.3M294.5 34.7V111.2M295.5 37.7V110.6M296.5 46.3V116.1M297.5 45.3V111.3M298.5 40.1V107.5M299.5 36.3V108.4M300.5 43.4V108.2M301.5 43.2V113.4M302.5 45.6V113.0M303.5 40.3V111.3M304.5 46.7V107.6M305.5 40.9V114.1M306.5 39.8V116.6M307.5 42.3V111.9M308.5 41.4V115.7M309.5 44.4V107.1M310.5 46.5V113.0M311.5 36.9V116.2M312.5 43.6V111.9M313.5 44.2V112.4M314.5 45.8V116.3M315.5 48.2V113.4M316.5 36.8V113.9M317.5 47.4V106.7M318.5 45.5V109.1M319.5 39.7V112.1M320.5 45.2V108.3M321.5 45.0V106.3M322.5 44.3V110.2M323.5 37.9V106.5M324.5 48.8V105.7M325.5 44.0V106.7M326.5 47.1V107.9M327.5 48.6V107.8M328.5 38.5V113.2M329.5 46.0V106.9M330.5 40.1V104.6M331.5 42.6V110.9M332.5 43.2V102.0M333.5 48.4V101.7M334.5 46.3V103.0M335.5 51.4V100.0M336.5 49.9V106.1M337.5 49.0V100.5M338.5 56.4V102.3M339.5 56.4V97.5M340.5 53.0V98.2M341.5 59.0V94.4M342.5 56.3V96.5M343.5 60.8V97.6M344.5 61.1V93.0M345.5 61.9V94.1M346.5 62.7V91.7M347.5 63.0V90.1M348.5 64.4V90.5M349.5 63.2V89.2M350.5 64.5V89.0M351.5 67.9V87.1M352.5 66.3V85.1M353.5 68.2V85.6M354.5 69.3V83.6M355.5 71.4V83.1M356.5 71.8V83.2M357.5 72.9V82.4M358.5 73.5V81.3M359.5 74.4V80.3M360.5 74.8V78.9M361.5 76.0V78.1M362.5 76.7V77.3" stroke="#7e2f8e" stroke-width="1" stroke-opacity="0.75"/>
<path d="M43.5 74.7V79.0M44.5 72.5V82.1M45.5 69.7V85.0M46.5 67.3V87.0M47.5 61.8V92.0M48.5 60.5V94.9M49.5 56.5V99.2M50.5 54.9V98.2M51.5 49.1V105.8M52.5 49.3V109.4M53.5 43.4V105.7M54.5 42.2V115.1M55.5 43.0V118.9M56.5 39.3V120.4M57.5 33.3V127.1M58.5 31.3V120.0M59.5 29.6V129.4M60.5 23.7V123.3M61.5 29.5V120.8M62.5 20.7V128.4M63.5 30.0V124.5M64.5 21.5V133.5M65.5 31.1V133.6M66.5 27.8V133.7M67.5 29.7V135.3M68.5 28.5V131.9M69.5 27.2V126.6M70.5 29.9V128.3M71.5 27.5V128.6M72.5 20.0V125.0M73.5 28.0V125.6M74.5 28.3V133.0M75.5 24.8V125.6M76.5 21.1V137.6M77.5 22.6V136.4M78.5 21.3V127.6M79.5 20.1V134.1M80.5 21.5V134.1M81.5 15.9V130.2M82.5 24.9V134.2M83.5 21.3V124.7M84.5 18.2V130.1M85.5 24.2V134.3M86.5 27.3V134.8M87.5 14.7V126.5M88.5 27.4V136.6M89.5 23.7V138.0M90.5 24.6V137.5M91.5 24.9V132.5M92.5 17.8V129.8M93.5 16.2V127.1M94.5 17.4V130.0M95.5 24.7V133.4M96.5 25.2V126.3M97.5 20.3V139.6M98.5 15.0V132.5M99.5 25.7V138.2M100.5 12.1V131.3M101.5 24.9V129.4M102.5 16.3V133.8M103.5 18.6V137.0M104.5 22.5V128.9M105.5 20.1V132.1M106.5 16.3V131.4M107.5 16.7V135.0M108.5 22.1V142.3M109.5 18.4V143.1M110.5 14.4V130.8M111.5 17.6V136.4M112.5 21.9V141.0M113.5 13.6V134.4M114.5 17.5V133.4M115.5 25.3V139.9M116.5 16.5V142.0M117.5 10.3V133.6M118.5 11.8V128.8M119.5 18.6V139.4M120.5 16.5V141.1M121.5 18.1V132.5M122.5 19.9V138.0M123.5 21.6V137.8M124.5 14.3V140.7M125.5 19.6V139.0M126.5 14.8V133.8M127.5 23.0V137.5M128.5 12.1V141.0M129.5 9.2V144.6M130.5 14.1V138.5M131.5 10.1V132.6M132.5 20.0V137.1M133.5 18.1V141.2M134.5 18.8V136.4M135.5 18.3V132.3M136.5 22.7V138.4M137.5 10.8V131.6M138.5 21.9V130.1M139.5 24.0V142.1M140.5 9.8V130.5M141.5 17.3V139.2M142.5 19.1V136.8M143.5 23.1V130.9M144.5 18.8V140.3M145.5 21.1V140.1M146.5 10.8V145.3M147.5 21.7V140.9M148.5 14.2V129.9M149.5 15.3V130.8M150.5 17.4V133.9M151.5 23.9V135.9M152.5 24.5V141.6M153.5 10.5V130.1M154.5 22.7V129.7M155.5 20.7V139.0M156.5 22.8V137.6M157.5 21.5V139.1M158.5 17.4V144.3M159.5 17.6V134.1M160.5 10.9V139.2M161.5 17.1V131.6M162.5 17.8V137.6M163.5 23.4V140.1M164.5 9.3V140.3M165.5 13.1V140.0M166.5 21.5V131.1M167.5 23.1V134.9M168.5 18.1V133.3M169.5 19.4V143.9M170.5 12.5V130.8M171.5 20.9V140.8M172.5 20.0V128.8M173.5 12.2V138.7M174.5 18.6V128.3M175.5 21.3V132.9M176.5 25.7V136.3M177.5 24.7V143.4M178.5 16.1V143.4M179.5 14.6V133.0M180.5 16.4V140.4M181.5 11.8V135.6M182.5 13.0V132.6M183.5 19.0V135.1M184.5 18.3V132.2M185.5 21.5V142.6M186.5 24.9V136.3M187.5 12.5V132.5M188.5 21.4V135.3M189.5 20.6V140.3M190.5 14.6V137.3M191.5 19.3V131.8M192.5 15.4V127.1M193.5 18.4V128.6M194.5 23.4V136.5M195.5 26.6V130.1M196.5 19.5V138.1M197.5 17.2V131.5M198.5 18.7V129.5M199.5 18.4V135.9M200.5 25.3V128.4M201.5 24.6V133.1M202.5 15.7V131.8M203.5 22.9V132.1M204.5 21.6V126.8M205.5 28.5V138.1M206.5 23.1V124.3M207.5 21.7V125.8M208.5 26.5V135.0M209.5 17.1V134.3M210.5 21.4V123.3M211.5 18.9V133.1M212.5 26.7V127.4M213.5 18.1V126.4M214.5 22.5V127.3M215.5 28.6V128.5M216.5 25.0V130.5M217.5 19.7V133.5M218.5 24.9V128.5M219.5 19.4V126.4M220.5 31.8V134.1M221.5 30.9V122.0M222.5 23.5V122.6M223.5 32.1V124.4M224.5 34.1V128.5M225.5 25.1V123.7M226.5 24.8V127.3M227.5 25.0V130.6M228.5 28.5V126.3M229.5 28.8V129.1M230.5 30.5V128.9M231.5 35.0V130.1M232.5 23.4V122.8M233.5 32.0V119.9M234.5 29.9V127.8M235.5 25.8V117.3M236.5 34.4V127.7M237.5 33.6V118.4M238.5 31.5V128.4M239.5 27.5V119.8M240.5 30.3V127.1M241.5 29.2V124.4M242.5 27.1V116.8M243.5 29.7V119.6M244.5 33.6V124.8M245.5 28.4V121.4M246.5 31.7V117.3M247.5 31.6V119.7M248.5 32.5V122.6M249.5 33.4V121.2M250.5 37.6V124.4M251.5 39.3V115.2M252.5 30.2V115.3M253.5 35.4V113.1M254.5 40.7V118.0M255.5 31.9V121.8M256.5 34.6V116.0M257.5 34.4V112.9M258.5 39.2V119.4M259.5 38.5V118.1M260.5 35.6V113.9M261.5 39.4V110.6M262.5 34.6V120.2M263.5 39.2V110.6M264.5 38.2V117.7M265.5 41.6V119.0M266.5 43.9V114.6M267.5 40.9V111.6M268.5 39.1V115.5M269.5 39.1V113.5M270.5 39.7V111.4M271.5 42.2V107.8M272.5 39.3V113.0M273.5 38.0V108.5M274.5 44.2V109.6M275.5 45.2V108.2M276.5 43.7V106.6M277.5 40.6V106.6M278.5 43.5V111.5M279.5 42.2V108.2M280.5 44.2V108.9M281.5 44.2V109.3M282.5 42.2V113.1M283.5 47.0V106.8M284.5 42.8V107.3M285.5 41.7V107.7M286.5 44.4V108.9M287.5 44.8V105.8M288.5 43.8V104.2M289.5 47.8V106.5M290.5 51.4V108.8M291.5 49.9V105.8M292.5 49.2V107.4M293.5 52.2V109.3M294.5 47.4V103.5M295.5 47.7V106.7M296.5 46.8V108.5M297.5 46.6V101.8M298.5 48.7V103.8M299.5 53.0V105.8M300.5 50.0V104.4M301.5 50.6V105.1M302.5 50.3V103.3M303.5 49.9V104.6M304.5 49.5V102.6M305.5 53.3V100.9M306.5 50.8V99.0M307.5 51.6V100.4M308.5 51.2V99.2M309.5 51.5V101.6M310.5 51.7V99.1M311.5 53.1V103.2M312.5 51.2V98.3M313.5 57.1V98.1M314.5 52.7V98.2M315.5 52.4V100.8M316.5 57.2V101.7M317.5 57.2V100.8M318.5 53.6V99.8M319.5 57.6V96.5M320.5 58.5V95.7M321.5 58.5V96.1M322.5 56.6V94.8M323.5 57.1V94.7M324.5 57.5V94.3M325.5 59.8V95.3M326.5 59.1V91.1M327.5 63.0V91.2M328.5 62.7V92.0M329.5 61.3V92.2M330.5 62.9V89.7M331.5 64.6V91.0M332.5 64.1V90.7M333.5 66.2V87.8M334.5 67.4V88.3M335.5 67.1V86.4M336.5 66.3V86.2M337.5 66.4V87.5M338.5 68.8V86.9M339.5 69.7V84.7M340.5 69.5V84.8M341.5 69.1V83.8M342.5 69.5V83.0M343.5 71.3V82.6M344.5 71.6V82.1M345.5 71.5V81.9M346.5 72.1V82.1M347.5 72.6V81.1M348.5 72.5V81.1M349.5 73.0V80.6M350.5 73.7V79.9M351.5 73.8V79.7M352.5 74.7V79.3M353.5 75.0V79.0M354.5 75.4V78.7M355.5 75.8V78.4M356.5 75.9V78.1M357.5 76.4V77.7M358.5 76.7V77.3M359.5 77.0V77.0" stroke="#77ac30" stroke-width="1" stroke-opacity="0.75"/>
<path d="M43.5 75.8V77.8M44.5 75.1V81.0M45.5 71.0V80.5M46.5 71.3V84.3M47.5 72.0V83.4M48.5 63.6V84.3M49.5 69.5V88.0M50.5 66.3V96.7M51.5 54.6V98.2M52.5 63.2V99.6M53.5 61.1V105.5M54.5 62.5V108.1M55.5 59.2V102.7M56.5 57.9V100.0M57.5 36.5V93.2M58.5 38.2V112.2M59.5 32.7V97.3M60.5 41.7V101.2M61.5 37.4V112.6M62.5 35.3V111.1M63.5 57.3V117.2M64.5 59.6V116.0M65.5 34.1V100.5M66.5 30.6V102.3M67.5 52.0V97.1M68.5 60.1V122.5M69.5 33.8V116.3M70.5 30.7V115.1M71.5 41.8V114.5M72.5 57.2V110.3M73.5 59.1V101.9M74.5 44.1V101.9M75.5 29.3V110.7M76.5 40.7V124.6M77.5 35.8V109.6M78.5 57.0V103.6M79.5 57.4V107.6M80.5 31.8V119.3M81.5 35.2V112.3M82.5 46.2V100.1M83.5 38.3V99.2M84.5 34.6V122.0M85.5 33.6V116.2M86.5 40.6V102.1M87.5 58.2V105.2M88.5 30.9V114.8M89.5 31.7V98.6M90.5 41.0V111.2M91.5 38.5V107.8M92.5 58.4V126.9M93.5 51.3V118.4M94.5 50.2V99.4M95.5 34.3V128.2M96.5 40.6V104.7M97.5 39.1V111.3M98.5 56.0V116.8M99.5 37.9V122.4M100.5 37.3V116.3M101.5 55.8V95.7M102.5 34.8V127.3M103.5 27.1V124.1M104.5 34.6V119.8M105.5 49.6V98.9M106.5 56.8V121.9M107.5 55.0V107.9M108.5 29.9V115.0M109.5 35.2V114.8M110.5 38.9V128.2M111.5 54.8V130.6M112.5 23.8V104.5M113.5 25.3V113.8M114.5 38.6V115.1M115.5 33.1V124.6M116.5 27.1V111.6M117.5 33.4V119.0M118.5 55.4V118.5M119.5 25.9V97.9M120.5 51.7V99.1M121.5 48.7V96.6M122.5 35.0V111.3M123.5 37.3V131.5M124.5 55.9V117.9M125.5 35.5V120.5M126.5 41.9V117.0M127.5 23.0V115.3M128.5 45.5V100.6M129.5 28.8V109.5M130.5 28.1V130.1M131.5 55.2V126.0M132.5 54.0V128.3M133.5 51.9V111.4M134.5 23.4V127.2M135.5 53.1V127.0M136.5 55.0V124.0M137.5 52.7V105.6M138.5 30.8V115.5M139.5 26.2V115.3M140.5 54.5V118.5M141.5 53.8V121.9M142.5 42.4V100.0M143.5 30.8V125.9M144.5 30.3V127.9M145.5 49.3V100.5M146.5 27.9V118.7M147.5 46.2V108.9M148.5 30.5V104.4M149.5 55.5V102.3M150.5 30.2V100.7M151.5 35.8V96.9M152.5 51.0V110.3M153.5 56.7V129.8M154.5 45.7V125.5M155.5 38.5V110.9M156.5 24.8V109.2M157.5 30.1V120.2M158.5 37.1V119.4M159.5 47.6V98.6M160.5 39.3V113.2M161.5 55.2V100.3M162.5 51.8V109.9M163.5 47.3V122.4M164.5 43.5V117.8M165.5 38.7V119.5M166.5 54.8V126.5M167.5 51.8V126.0M168.5 31.0V112.4M169.5 22.7V112.8M170.5 48.8V119.1M171.5 48.0V128.4M172.5 55.8V114.0M173.5 29.8V101.1M174.5 55.0V105.2M175.5 56.1V110.9M176.5 49.4V101.2M177.5 55.5V114.5M178.5 49.1V96.6M179.5 56.4V115.1M180.5 55.8V123.0M181.5 23.7V114.8M182.5 53.8V108.6M183.5 26.2V113.8M184.5 55.4V118.6M185.5 48.8V129.4M186.5 31.5V96.9M187.5 32.3V115.3M188.5 49.5V104.5M189.5 43.3V98.5M190.5 27.1V117.1M191.5 31.4V114.1M192.5 25.9V117.0M193.5 26.2V109.9M194.5 47.1V126.8M195.5 41.0V112.0M196.5 40.1V122.6M197.5 37.7V111.6M198.5 56.6V97.0M199.5 30.7V127.1M200.5 55.9V104.4M201.5 49.0V119.8M202.5 27.8V101.8M203.5 31.8V108.7M204.5 41.5V97.0M205.5 46.8V120.1M206.5 55.1V105.1M207.5 28.0V118.0M208.5 48.0V115.7M209.5 35.2V112.5M210.5 29.9V97.6M211.5 57.9V98.4M212.5 35.9V116.5M213.5 51.1V100.4M214.5 29.8V119.2M215.5 54.0V110.4M216.5 58.7V106.4M217.5 45.8V99.7M218.5 38.5V122.0M219.5 45.6V121.7M220.5 52.1V123.1M221.5 55.8V107.0M222.5 35.3V119.9M223.5 53.5V100.8M224.5 40.6V94.9M225.5 57.6V119.8M226.5 49.0V108.8M227.5 58.9V105.7M228.5 57.0V102.1M229.5 48.4V107.3M230.5 40.3V109.0M231.5 60.7V104.0M232.5 37.2V117.8M233.5 46.8V107.0M234.5 55.0V101.8M235.5 56.3V94.8M236.5 60.5V105.8M237.5 44.1V97.9M238.5 36.7V109.9M239.5 43.3V113.4M240.5 39.8V94.1M241.5 47.7V104.2M242.5 36.2V104.0M243.5 48.7V100.7M244.5 39.0V100.8M245.5 52.1V95.0M246.5 41.9V115.8M247.5 39.7V104.7M248.5 52.8V112.1M249.5 47.8V102.8M250.5 63.0V110.9M251.5 50.5V110.7M252.5 46.8V111.2M253.5 63.5V94.5M254.5 62.8V95.3M255.5 50.3V90.9M256.5 62.2V93.9M257.5 40.7V107.0M258.5 41.8V99.1M259.5 48.9V91.7M260.5 61.9V89.7M261.5 56.4V91.6M262.5 51.6V93.3M263.5 59.0V94.9M264.5 57.4V96.7M265.5 43.4V95.6M266.5 52.0V101.0M267.5 50.0V106.8M268.5 48.1V90.4M269.5 48.3V96.4M270.5 51.6V89.5M271.5 60.1V99.3M272.5 55.2V95.6M273.5 59.2V97.7M274.5 49.2V90.6M275.5 62.7V99.5M276.5 53.6V92.0M277.5 64.1V105.3M278.5 54.4V99.9M279.5 54.3V89.4M280.5 63.7V95.0M281.5 63.8V93.5M282.5 57.0V96.8M283.5 56.6V90.5M284.5 51.4V88.0M285.5 60.5V102.2M286.5 64.0V89.5M287.5 62.3V102.5M288.5 51.6V91.3M289.5 56.0V102.4M290.5 54.5V99.5M291.5 63.8V91.2M292.5 66.8V88.1M293.5 64.2V98.1M294.5 61.5V101.5M295.5 67.9V94.1M296.5 61.0V88.2M297.5 55.4V98.3M298.5 56.5V96.0M299.5 58.8V91.9M300.5 58.7V98.0M301.5 63.8V86.4M302.5 53.4V100.8M303.5 54.0V97.2M304.5 59.2V92.9M305.5 61.2V88.2M306.5 58.5V95.9M307.5 58.1V95.9M308.5 67.3V96.2M309.5 68.1V91.3M310.5 62.1V85.4M311.5 59.0V90.5M312.5 58.3V98.1M313.5 61.8V88.6M314.5 69.5V89.9M315.5 68.3V91.4M316.5 58.0V91.1M317.5 68.9V91.5M318.5 60.5V88.1M319.5 64.1V89.1M320.5 61.9V93.8M321.5 64.5V91.4M322.5 65.6V92.3M323.5 64.2V90.0M324.5 69.9V92.2M325.5 67.6V82.8M326.5 65.8V84.6M327.5 63.8V86.9M328.5 67.9V89.8M329.5 71.9V89.9M330.5 66.1V88.7M331.5 66.4V82.5M332.5 68.9V85.1M333.5 69.6V80.8M334.5 67.4V85.7M335.5 72.6V86.3M336.5 70.3V81.2M337.5 73.8V83.4M338.5 73.3V84.5M339.5 73.8V79.7M340.5 74.0V81.7M341.5 73.3V83.4M342.5 72.4V81.6M343.5 74.2V79.7M344.5 73.2V81.8M345.5 75.2V79.3M346.5 75.2V80.2M347.5 74.9V78.6M348.5 74.4V80.3M349.5 75.7V80.1M350.5 74.5V78.4M351.5 74.4V78.9M352.5 75.8V78.2M353.5 76.2V78.4M354.5 76.1V78.0M355.5 76.0V77.5M356.5 76.7V77.8M357.5 76.6V77.5M358.5 76.7V77.3M359.5 77.0V77.0" stroke="#77ac30" stroke-width="1" stroke-opacity="0.9"/>
<path d="M0.5 67.0V83.4M1.5 69.1V84.6M2.5 66.4V87.2M3.5 65.5V83.8M4.5 68.3V83.5M5.5 69.4V86.2M6.5 70.5V84.4M7.5 66.9V86.4M8.5 69.4V86.7M9.5 66.0V83.3M10.5 66.0V87.3M11.5 68.7V84.2M12.5 65.2V85.2M13.5 65.8V86.8M14.5 67.6V88.9M15.5 65.9V86.9M16.5 66.6V83.6M17.5 70.2V84.6M18.5 67.0V85.4M19.5 69.2V88.7M20.5 69.7V87.5M21.5 69.8V85.5M22.5 65.0V87.0M23.5 67.5V87.3M24.5 65.8V87.8M25.5 69.4V83.5M26.5 68.9V84.8M27.5 69.5V88.7M28.5 65.6V85.1M29.5 66.9V85.6M30.5 65.4V85.9M31.5 69.2V84.7M32.5 67.5V84.8M33.5 67.3V88.5M34.5 68.4V84.6M35.5 64.9V86.2M36.5 70.2V83.6M37.5 66.1V85.7M38.5 64.9V86.4M39.5 70.6V87.5M40.5 69.2V87.0M41.5 65.6V84.8M42.5 69.0V87.0M43.5 65.3V88.4M44.5 66.3V84.0M45.5 68.9V89.0M46.5 69.4V84.6M47.5 66.8V84.5M48.5 70.1V85.8M49.5 68.7V88.3M50.5 68.1V88.3M51.5 69.7V86.1M52.5 68.1V85.7M53.5 67.4V86.4M54.5 70.2V84.4M55.5 67.1V85.7M56.5 66.8V85.0M57.5 69.5V84.8M58.5 67.2V89.0M59.5 70.0V83.9M60.5 67.9V88.5M61.5 69.2V87.6M62.5 69.8V84.0M63.5 65.6V85.6M64.5 68.8V88.7M65.5 66.0V86.0M66.5 67.0V85.6M67.5 68.2V87.5M68.5 67.6V87.5M69.5 69.0V85.1M70.5 65.5V86.9M71.5 68.0V85.9M72.5 67.0V85.2M73.5 68.0V88.2M74.5 66.9V83.3M75.5 70.4V84.7M76.5 65.6V86.8M77.5 69.2V84.7M78.5 69.1V85.1M79.5 67.6V85.7M80.5 68.5V83.3M81.5 67.2V84.6M82.5 68.0V84.0M83.5 68.0V83.6M84.5 69.2V83.8M85.5 66.3V88.8M86.5 66.7V87.7M87.5 66.8V88.8M88.5 70.0V89.0M89.5 65.2V87.0M90.5 68.2V87.5M91.5 70.5V88.2M92.5 70.2V87.5M93.5 68.9V86.7M94.5 69.6V84.0M95.5 67.7V84.9M96.5 65.1V86.5M97.5 68.2V84.4M98.5 70.4V84.2M99.5 69.4V86.3M100.5 66.4V88.8M101.5 68.1V86.7M102.5 66.2V86.9M103.5 70.3V84.3M104.5 65.3V86.2M105.5 65.1V88.1M106.5 68.0V87.1M107.5 68.8V87.2M108.5 68.1V85.1M109.5 68.3V84.4M110.5 68.2V87.3M111.5 65.4V86.0M112.5 67.5V85.5M113.5 66.0V84.9M114.5 68.1V85.2M115.5 68.5V87.1M116.5 67.7V85.9M117.5 65.8V88.2M118.5 65.4V89.1M119.5 66.1V85.0M120.5 65.7V86.9M121.5 66.1V88.5M122.5 69.3V88.2M123.5 69.0V88.9M124.5 67.8V88.5M125.5 66.5V87.1M126.5 66.5V83.8M127.5 65.4V88.1M128.5 65.1V84.1M129.5 66.1V83.4M130.5 70.1V84.7M131.5 65.4V85.0M132.5 69.9V85.9M133.5 70.1V86.1M134.5 70.1V87.3M135.5 68.1V87.1M136.5 69.5V84.5M137.5 69.7V87.1M138.5 66.4V86.1M139.5 68.1V88.9M140.5 70.3V84.9M141.5 65.8V87.1M142.5 68.2V87.1M143.5 67.5V86.7M144.5 66.5V88.9M145.5 65.8V85.4M146.5 67.0V83.5M147.5 70.7V88.3M148.5 68.3V85.3M149.5 67.1V87.2M150.5 68.2V84.9M151.5 69.0V84.5M152.5 66.6V86.2M153.5 65.7V86.6M154.5 67.1V88.1M155.5 68.9V85.3M156.5 66.5V88.0M157.5 69.7V87.8M158.5 67.1V88.3M159.5 67.8V85.1M160.5 67.5V87.9M161.5 65.5V85.3M162.5 69.1V85.7M163.5 66.9V88.5M164.5 65.3V85.1M165.5 68.3V85.4M166.5 70.1V87.8M167.5 66.2V88.0M168.5 67.6V85.1M169.5 69.1V85.5M170.5 65.7V86.5M171.5 69.8V85.8M172.5 69.3V89.0M173.5 69.0V88.1M174.5 65.9V86.5M175.5 66.1V85.9M176.5 68.2V86.9M177.5 67.8V89.0M178.5 66.1V85.3M179.5 66.0V84.3M180.5 68.1V85.0M181.5 69.2V87.7M182.5 65.6V87.6M183.5 66.1V87.5M184.5 68.9V86.8M185.5 65.2V83.7M186.5 70.3V87.8M187.5 67.6V85.6M188.5 68.1V89.1M189.5 66.8V88.2M190.5 66.1V86.2M191.5 67.2V83.8M192.5 68.1V87.2M193.5 65.4V83.6M194.5 65.5V88.2M195.5 69.7V88.7M196.5 70.5V83.6M197.5 67.1V85.0M198.5 68.2V86.1M199.5 69.9V85.4M200.5 68.5V86.9M201.5 67.8V86.3M202.5 68.7V83.6M203.5 65.6V87.5M204.5 67.8V87.7M205.5 68.7V88.7M206.5 68.0V85.9M207.5 69.0V85.2M208.5 65.0V86.7M209.5 66.5V86.7M210.5 70.6V85.1M211.5 69.5V85.2M212.5 67.0V87.3M213.5 66.6V85.1M214.5 65.2V87.9M215.5 65.3V87.3M216.5 66.6V83.9M217.5 65.1V85.2M218.5 65.4V84.3M219.5 65.1V88.6M220.5 67.6V86.2M221.5 69.2V84.4M222.5 65.9V86.3M223.5 69.3V87.7M224.5 70.0V85.1M225.5 69.0V86.8M226.5 68.0V86.4M227.5 66.6V83.8M228.5 67.7V84.0M229.5 68.1V83.6M230.5 70.4V85.3M231.5 66.3V87.7M232.5 68.5V87.2M233.5 66.5V84.6M234.5 69.1V88.7M235.5 70.5V86.8M236.5 69.0V88.0M237.5 69.0V83.7M238.5 66.2V85.1M239.5 65.4V86.5M240.5 66.5V84.4M241.5 65.7V85.2M242.5 69.3V86.8M243.5 69.2V86.3M244.5 68.3V86.5M245.5 68.8V85.5M246.5 67.0V86.1M247.5 67.0V83.6M248.5 69.4V87.4M249.5 67.9V83.3M250.5 66.8V88.0M251.5 69.2V85.6M252.5 66.9V88.3M253.5 67.8V85.8M254.5 65.7V88.4M255.5 65.3V85.1M256.5 69.3V88.1M257.5 67.8V88.9M258.5 66.2V83.5M259.5 67.1V87.9M260.5 68.9V85.4M261.5 67.2V85.2M262.5 68.5V84.1M263.5 67.1V86.7M264.5 66.0V88.3M265.5 66.7V86.1M266.5 66.8V86.5M267.5 66.1V85.7M268.5 65.0V86.1M269.5 65.5V86.4M270.5 65.0V87.2M271.5 67.7V86.7M272.5 70.6V83.9M273.5 69.5V86.1M274.5 65.8V87.0M275.5 65.2V84.6M276.5 67.3V85.5M277.5 69.6V85.2M278.5 67.3V85.3M279.5 69.9V84.0M280.5 69.6V87.0M281.5 68.1V83.6M282.5 66.7V85.7M283.5 68.1V87.6M284.5 66.5V86.5M285.5 68.2V89.0M286.5 69.5V84.5M287.5 65.0V87.2M288.5 66.6V88.1M289.5 70.2V86.3M290.5 68.1V87.1M291.5 65.9V85.3M292.5 66.2V86.0M293.5 69.9V87.1M294.5 69.7V85.6M295.5 69.9V84.6M296.5 70.3V85.5M297.5 69.9V89.0M298.5 69.8V85.7M299.5 65.1V85.1M300.5 66.7V88.2M301.5 65.5V88.8M302.5 65.3V84.1M303.5 70.6V83.7M304.5 68.3V87.4M305.5 66.0V86.4M306.5 65.8V83.6M307.5 70.0V87.4M308.5 69.1V88.4M309.5 68.6V86.2M310.5 65.7V84.7M311.5 68.8V85.7M312.5 65.2V83.7M313.5 67.1V86.0M314.5 69.4V85.3M315.5 69.3V86.1M316.5 66.7V85.5M317.5 68.2V88.9M318.5 69.1V83.7M319.5 67.6V88.9M320.5 66.7V83.5M321.5 69.2V89.0M322.5 69.9V83.4M323.5 67.3V84.8M324.5 65.9V85.2M325.5 66.8V84.3M326.5 69.0V85.7M327.5 67.1V87.9M328.5 67.8V85.5M329.5 67.6V87.7M330.5 70.4V89.1M331.5 67.3V88.0M332.5 69.6V89.0M333.5 65.4V84.5M334.5 65.8V88.3M335.5 66.1V88.8M336.5 68.9V87.3M337.5 65.4V88.9M338.5 70.2V87.4M339.5 68.5V87.5M340.5 65.7V87.1M341.5 70.3V84.3M342.5 67.9V83.5M343.5 66.7V87.5M344.5 69.8V85.4M345.5 69.0V83.8M346.5 69.6V88.4M347.5 66.4V87.2M348.5 66.0V85.7M349.5 66.6V86.2M350.5 65.0V88.9M351.5 65.9V84.8M352.5 68.1V88.3M353.5 66.3V88.7M354.5 68.5V86.1M355.5 65.6V85.2M356.5 68.9V84.9M357.5 69.1V85.7M358.5 67.7V84.2M359.5 65.9V84.7M360.5 65.9V86.2M361.5 67.3V84.3M362.5 65.5V87.6M363.5 68.5V84.2M364.5 65.8V87.0M365.5 66.8V84.9M366.5 68.3V83.4M367.5 66.2V87.7M368.5 70.6V88.6M369.5 67.0V86.8M370.5 70.7V84.8M371.5 66.1V85.1M372.5 65.1V87.0M373.5 68.3V85.5M374.5 68.7V84.8M375.5 68.0V87.2M376.5 65.9V85.6M377.5 70.1V86.3M378.5 66.9V88.2M379.5 68.5V87.0M380.5 67.2V85.0M381.5 70.1V83.7M382.5 65.7V84.8M383.5 69.0V84.2M384.5 66.0V87.9M385.5 66.8V87.5M386.5 69.2V85.7M387.5 66.6V86.6M388.5 69.4V86.4M389.5 66.2V88.5M390.5 66.8V86.2M391.5 65.8V88.2M392.5 65.6V84.3M393.5 70.1V84.0M394.5 69.2V88.0M395.5 66.3V84.4M396.5 66.8V85.2M397.5 70.2V85.4M398.5 66.4V85.1M399.5 66.1V85.2M400.5 69.2V85.0M401.5 65.8V86.0M402.5 65.7V86.7M403.5 65.2V83.7M404.5 65.6V86.2M405.5 65.7V85.5M406.5 69.0V83.6M407.5 69.5V85.7M408.5 68.1V85.1M409.5 67.9V86.9M410.5 70.7V84.9M411.5 66.3V86.1M412.5 67.2V87.0M413.5 68.5V83.5M414.5 69.5V85.5M415.5 70.6V85.2M416.5 65.9V84.4" stroke="#d95319" stroke-width="1"/>
<path d="M12.5 65.8V88.2M13.5 51.1V102.1M14.5 45.8V110.6M15.5 26.9V121.9M16.5 38.5V116.7M17.5 49.6V106.9M18.5 55.3V97.1M19.5 62.5V91.3M36.5 68.9V87.2M37.5 61.0V95.7M38.5 40.3V112.3M39.5 31.6V119.8M40.5 31.7V129.8M41.5 32.8V115.2M42.5 43.0V104.7M43.5 52.5V96.7M44.5 65.8V88.6M61.5 62.4V90.9M62.5 53.9V106.4M63.5 38.3V108.4M64.5 21.5V133.8M65.5 28.1V137.1M66.5 27.8V118.4M67.5 50.4V107.2M68.5 57.4V96.1M86.5 60.7V96.8M87.5 48.0V110.1M88.5 29.4V116.7M89.5 14.1V137.1M90.5 33.2V132.9M91.5 45.8V108.7M92.5 52.7V104.1M93.5 63.6V90.7M110.5 66.1V92.7M111.5 57.0V104.3M112.5 34.8V112.9M113.5 32.8V127.1M114.5 27.8V138.6M115.5 27.2V129.8M116.5 42.5V107.3M117.5 54.0V95.9M118.5 66.5V86.2M135.5 60.5V93.2M136.5 47.3V100.8M137.5 47.9V105.9M138.5 23.4V125.1M139.5 39.9V122.2M140.5 40.7V112.0M141.5 50.7V102.8M142.5 64.0V88.7M159.5 65.0V86.9M160.5 49.3V100.2M161.5 37.5V113.3M162.5 30.9V128.6M163.5 4.0V135.5M164.5 30.6V132.1M165.5 43.4V107.9M166.5 50.4V104.0M167.5 66.9V88.5M184.5 61.4V94.4M185.5 47.9V102.9M186.5 39.5V114.8M187.5 20.9V124.1M188.5 27.6V141.0M189.5 38.9V115.6M190.5 52.7V102.2M191.5 61.0V98.1M208.5 65.4V88.2M209.5 58.7V99.4M210.5 48.6V113.1M211.5 27.6V123.7M212.5 14.4V128.9M213.5 30.3V136.2M214.5 43.4V110.5M215.5 56.3V102.8M216.5 62.3V87.4M233.5 66.7V87.4M234.5 51.5V96.5M235.5 39.7V104.7M236.5 26.4V119.5M237.5 15.9V136.6M238.5 39.0V110.5M239.5 43.4V105.7M240.5 61.3V95.7M258.5 59.5V100.5M259.5 42.8V102.7M260.5 37.3V114.2M261.5 22.3V129.4M262.5 29.4V128.8M263.5 43.2V109.3M264.5 45.3V99.3M265.5 61.7V90.2M282.5 64.2V88.1M283.5 53.8V98.3M284.5 39.0V103.1M285.5 29.4V114.8M286.5 35.3V125.1M287.5 44.1V124.6M288.5 45.1V107.9M289.5 60.4V98.8M307.5 57.7V92.2M308.5 43.9V100.7M309.5 33.4V117.0M310.5 21.8V130.0M311.5 17.3V126.3M312.5 36.4V114.4M313.5 47.3V105.5M314.5 57.8V96.5M332.5 59.4V92.1M333.5 57.3V102.5M334.5 38.6V107.4M335.5 33.1V112.5M336.5 49.5V112.9M337.5 55.9V101.6M338.5 60.4V95.3M356.5 67.1V87.7M357.5 58.8V91.8M358.5 54.1V102.0M359.5 44.5V116.1M360.5 39.9V106.4M361.5 46.0V104.7M362.5 56.6V94.1M363.5 65.2V90.7M381.5 62.7V89.5M382.5 56.6V98.8M383.5 48.0V107.4M384.5 41.9V113.0M385.5 46.2V112.1M386.5 56.6V94.2M387.5 64.5V92.8M406.5 61.7V88.2M407.5 56.7V100.2M408.5 48.0V106.7M409.5 50.8V109.1M410.5 51.0V97.1M411.5 58.4V90.8M412.5 66.9V89.6" stroke="#d95319" stroke-width="1"/>
<rect x="15.5" y="0" width="1.5" height="156" fill="#333"/>
<rect x="323.5" y="0" width="1.5" height="156" fill="#333"/>
<circle cx="324.20000000000005" cy="72" r="3" fill="#d95319"/><circle cx="324.20000000000005" cy="87" r="3.2" fill="#77ac30"/><circle cx="324.20000000000005" cy="94.5" r="3" fill="#7e2f8e"/>
<rect x="1" y="1" width="415" height="154" fill="none" stroke="#707070" stroke-width="2"/>
</svg><svg class="a" style="left:892px;top:362px" width="416" height="180" viewBox="0 0 416 180">
<rect width="416" height="180" fill="#fff"/>
<rect x="41.2" y="0" width="1" height="180" fill="#d9d9d9"/>
<rect x="82.9" y="0" width="1" height="180" fill="#d9d9d9"/>
<rect x="124.6" y="0" width="1" height="180" fill="#d9d9d9"/>
<rect x="166.3" y="0" width="1" height="180" fill="#d9d9d9"/>
<rect x="208.0" y="0" width="1" height="180" fill="#d9d9d9"/>
<rect x="249.7" y="0" width="1" height="180" fill="#d9d9d9"/>
<rect x="291.4" y="0" width="1" height="180" fill="#d9d9d9"/>
<rect x="333.1" y="0" width="1" height="180" fill="#d9d9d9"/>
<rect x="374.8" y="0" width="1" height="180" fill="#d9d9d9"/>
<rect x="0" y="14.1" width="416" height="1" fill="#d9d9d9"/>
<rect x="0" y="59.9" width="416" height="1" fill="#d9d9d9"/>
<rect x="0" y="105.7" width="416" height="1" fill="#d9d9d9"/>
<rect x="0" y="151.5" width="416" height="1" fill="#d9d9d9"/>
<polyline points="0.5 162.9 1.5 144.1 2.5 152.1 3.5 147.5 4.5 180.5 5.5 154.0 6.5 166.8 7.5 145.4 8.5 138.7 9.5 179.0 10.5 138.9 11.5 160.4 12.5 166.0 13.5 153.8 14.5 159.9 15.5 160.4 16.5 174.7 17.5 150.3 18.5 161.4 19.5 141.3 20.5 157.0 21.5 145.7 22.5 154.3 23.5 146.9 24.5 149.4 25.5 141.7 26.5 149.4 27.5 159.7 28.5 154.6 29.5 150.5 30.5 146.8 31.5 138.8 32.5 98.0 33.5 84.4 34.5 78.7 35.5 87.4 36.5 100.1 37.5 111.1 38.5 101.2 39.5 114.3 40.5 123.4 41.5 101.8 42.5 116.4 43.5 113.7 44.5 129.8 45.5 105.4 46.5 107.7 47.5 114.2 48.5 116.9 49.5 103.5 50.5 123.4 51.5 114.8 52.5 118.8 53.5 110.5 54.5 124.8 55.5 123.5 56.5 103.0 57.5 104.8 58.5 120.8 59.5 108.3 60.5 143.2 61.5 120.7 62.5 109.4 63.5 125.8 64.5 112.0 65.5 119.5 66.5 110.5 67.5 99.3 68.5 86.6 69.5 74.1 70.5 75.0 71.5 90.5 72.5 102.3 73.5 105.2 74.5 105.5 75.5 110.1 76.5 97.2 77.5 110.7 78.5 106.7 79.5 108.7 80.5 107.0 81.5 116.7 82.5 99.4 83.5 99.8 84.5 97.3 85.5 112.8 86.5 124.8 87.5 123.8 88.5 96.2 89.5 119.6 90.5 95.7 91.5 109.4 92.5 114.1 93.5 104.3 94.5 118.5 95.5 104.4 96.5 109.2 97.5 98.1 98.5 123.4 99.5 114.1 100.5 100.5 101.5 117.4 102.5 93.7 103.5 71.7 104.5 44.7 105.5 37.5 106.5 57.1 107.5 81.1 108.5 101.9 109.5 105.6 110.5 112.5 111.5 114.7 112.5 105.4 113.5 97.0 114.5 107.0 115.5 122.2 116.5 97.6 117.5 98.7 118.5 105.1 119.5 112.2 120.5 116.8 121.5 115.5 122.5 106.7 123.5 109.9 124.5 100.2 125.5 123.3 126.5 121.0 127.5 97.4 128.5 116.7 129.5 111.3 130.5 119.0 131.5 101.9 132.5 97.0 133.5 95.3 134.5 115.5 135.5 110.1 136.5 105.0 137.5 105.8 138.5 92.8 139.5 77.8 140.5 65.0 141.5 68.9 142.5 86.2 143.5 100.2 144.5 109.1 145.5 105.6 146.5 109.3 147.5 118.2 148.5 117.3 149.5 112.5 150.5 106.8 151.5 114.4 152.5 116.4 153.5 101.1 154.5 117.4 155.5 110.4 156.5 108.9 157.5 126.2 158.5 124.8 159.5 124.9 160.5 108.3 161.5 103.7 162.5 101.7 163.5 112.6 164.5 125.4 165.5 122.6 166.5 98.6 167.5 118.5 168.5 112.9 169.5 119.5 170.5 124.2 171.5 127.6 172.5 101.8 173.5 101.7 174.5 106.7 175.5 123.7 176.5 124.4 177.5 109.3 178.5 127.4 179.5 105.3 180.5 113.4 181.5 116.1 182.5 119.6 183.5 129.1 184.5 117.5 185.5 128.1 186.5 126.0 187.5 122.5 188.5 118.4 189.5 112.1 190.5 130.2 191.5 115.6 192.5 117.5 193.5 108.9 194.5 116.0 195.5 124.1 196.5 114.2 197.5 103.6 198.5 111.8 199.5 128.9 200.5 105.0 201.5 108.4 202.5 122.0 203.5 106.0 204.5 110.5 205.5 113.7 206.5 104.8 207.5 114.5 208.5 124.1 209.5 114.7 210.5 130.1 211.5 110.4 212.5 116.4 213.5 110.1 214.5 102.6 215.5 113.1 216.5 104.7 217.5 127.8 218.5 106.9 219.5 111.1 220.5 104.5 221.5 120.7 222.5 119.2 223.5 122.4 224.5 105.1 225.5 128.6 226.5 120.0 227.5 123.4 228.5 118.9 229.5 133.2 230.5 114.2 231.5 126.1 232.5 116.1 233.5 114.8 234.5 112.0 235.5 108.2 236.5 116.1 237.5 106.9 238.5 115.4 239.5 123.9 240.5 108.3 241.5 110.1 242.5 103.7 243.5 103.4 244.5 117.5 245.5 123.2 246.5 121.8 247.5 132.4 248.5 119.1 249.5 120.6 250.5 112.1 251.5 113.2 252.5 136.5 253.5 114.8 254.5 108.0 255.5 103.3 256.5 107.9 257.5 110.6 258.5 123.7 259.5 114.4 260.5 133.5 261.5 120.3 262.5 107.4 263.5 111.2 264.5 110.8 265.5 110.9 266.5 113.9 267.5 121.1 268.5 114.4 269.5 110.0 270.5 110.5 271.5 115.4 272.5 125.6 273.5 107.5 274.5 129.0 275.5 119.1 276.5 132.3 277.5 111.5 278.5 123.1 279.5 133.1 280.5 105.6 281.5 121.9 282.5 115.8 283.5 127.7 284.5 125.9 285.5 109.3 286.5 123.1 287.5 112.1 288.5 114.7 289.5 109.9 290.5 116.0 291.5 117.5 292.5 110.8 293.5 124.5 294.5 105.7 295.5 109.3 296.5 107.7 297.5 125.1 298.5 111.9 299.5 128.9 300.5 129.7 301.5 121.4 302.5 113.0 303.5 126.9 304.5 130.6 305.5 113.5 306.5 112.5 307.5 113.5 308.5 125.8 309.5 123.2 310.5 132.0 311.5 133.4 312.5 108.6 313.5 134.1 314.5 110.9 315.5 117.0 316.5 110.3 317.5 114.7 318.5 123.4 319.5 124.1 320.5 128.5 321.5 121.7 322.5 129.2 323.5 125.7 324.5 108.5 325.5 134.3 326.5 110.1 327.5 124.3 328.5 108.4 329.5 109.6 330.5 131.3 331.5 135.4 332.5 116.1 333.5 124.7 334.5 122.2 335.5 109.1 336.5 134.3 337.5 134.9 338.5 132.7 339.5 135.4 340.5 114.1 341.5 111.1 342.5 124.7 343.5 107.5 344.5 129.2 345.5 108.6 346.5 126.1 347.5 119.9 348.5 134.8 349.5 124.3 350.5 110.5 351.5 117.0 352.5 114.6 353.5 114.4 354.5 107.8 355.5 109.5 356.5 111.5 357.5 134.2 358.5 123.0 359.5 107.7 360.5 121.3 361.5 133.3 362.5 116.1 363.5 136.5 364.5 134.6 365.5 134.7 366.5 125.9 367.5 128.0 368.5 113.8 369.5 112.0 370.5 124.8 371.5 120.9 372.5 127.5 373.5 109.1 374.5 134.5 375.5 124.3 376.5 116.3 377.5 116.9 378.5 111.1 379.5 129.2 380.5 126.9 381.5 135.0 382.5 120.9 383.5 113.8 384.5 128.7 385.5 127.6 386.5 115.9 387.5 122.5 388.5 111.0 389.5 128.5 390.5 109.2 391.5 111.2 392.5 109.5 393.5 110.9 394.5 114.6 395.5 122.9 396.5 109.0 397.5 117.7 398.5 127.9 399.5 119.5 400.5 124.9 401.5 122.9 402.5 134.4 403.5 122.1 404.5 133.4 405.5 117.3 406.5 136.0 407.5 131.1 408.5 131.3 409.5 123.4 410.5 137.0 411.5 120.0 412.5 124.6 413.5 114.0 414.5 130.9 415.5 121.5" fill="none" stroke="#4dbeee" stroke-width="1.3" stroke-dasharray="3 0.6"/>
<polyline points="0.5 138.4 1.5 165.2 2.5 142.0 3.5 146.9 4.5 148.8 5.5 149.6 6.5 154.1 7.5 145.4 8.5 138.6 9.5 153.6 10.5 178.0 11.5 157.4 12.5 140.3 13.5 150.2 14.5 166.2 15.5 162.8 16.5 137.2 17.5 161.5 18.5 143.2 19.5 139.9 20.5 143.4 21.5 137.7 22.5 162.1 23.5 145.6 24.5 151.1 25.5 139.4 26.5 142.1 27.5 140.6 28.5 153.2 29.5 139.5 30.5 152.4 31.5 136.3 32.5 91.3 33.5 72.7 34.5 65.0 35.5 76.8 36.5 94.3 37.5 109.3 38.5 124.3 39.5 102.6 40.5 128.0 41.5 108.6 42.5 124.4 43.5 128.3 44.5 121.8 45.5 103.8 46.5 114.2 47.5 122.4 48.5 103.3 49.5 108.1 50.5 118.6 51.5 109.2 52.5 115.9 53.5 128.4 54.5 104.7 55.5 123.3 56.5 117.2 57.5 99.1 58.5 127.4 59.5 110.0 60.5 124.8 61.5 127.2 62.5 105.2 63.5 101.0 64.5 102.0 65.5 113.5 66.5 107.8 67.5 96.1 68.5 80.5 69.5 65.0 70.5 66.1 71.5 85.4 72.5 100.0 73.5 126.1 74.5 122.3 75.5 125.3 76.5 123.4 77.5 111.0 78.5 98.2 79.5 118.9 80.5 118.3 81.5 107.0 82.5 104.4 83.5 112.8 84.5 125.1 85.5 113.0 86.5 103.5 87.5 122.0 88.5 118.0 89.5 109.2 90.5 115.4 91.5 118.2 92.5 95.8 93.5 111.5 94.5 107.0 95.5 111.8 96.5 118.7 97.5 100.1 98.5 108.5 99.5 105.7 100.5 94.6 101.5 123.2 102.5 91.3 103.5 65.8 104.5 34.4 105.5 26.1 106.5 48.8 107.5 76.6 108.5 100.9 109.5 121.2 110.5 117.7 111.5 111.7 112.5 101.0 113.5 119.8 114.5 121.0 115.5 104.3 116.5 117.2 117.5 100.3 118.5 108.6 119.5 109.8 120.5 115.4 121.5 109.3 122.5 99.6 123.5 98.7 124.5 116.7 125.5 115.9 126.5 103.5 127.5 106.3 128.5 121.0 129.5 94.2 130.5 111.5 131.5 121.4 132.5 94.7 133.5 120.3 134.5 117.4 135.5 104.1 136.5 108.8 137.5 105.1 138.5 89.3 139.5 71.3 140.5 55.8 141.5 60.5 142.5 81.4 143.5 98.2 144.5 120.9 145.5 124.5 146.5 99.2 147.5 110.4 148.5 113.6 149.5 97.9 150.5 111.9 151.5 116.2 152.5 106.6 153.5 100.9 154.5 107.9 155.5 106.7 156.5 120.0 157.5 105.6 158.5 107.6 159.5 126.5 160.5 105.5 161.5 100.4 162.5 124.4 163.5 104.7 164.5 105.5 165.5 122.1 166.5 123.8 167.5 115.1 168.5 111.3 169.5 122.2 170.5 138.7 171.5 103.6 172.5 104.8 173.5 93.8 174.5 79.2 175.5 78.7 176.5 90.5 177.5 102.2 178.5 112.6 179.5 106.0 180.5 125.5 181.5 118.2 182.5 134.2 183.5 101.0 184.5 113.9 185.5 116.8 186.5 120.9 187.5 115.8 188.5 103.0 189.5 105.8 190.5 111.2 191.5 111.1 192.5 105.6 193.5 111.8 194.5 114.9 195.5 107.1 196.5 121.7 197.5 117.3 198.5 122.8 199.5 127.7 200.5 119.9 201.5 121.7 202.5 117.6 203.5 118.2 204.5 104.7 205.5 118.3 206.5 103.8 207.5 128.6 208.5 125.9 209.5 120.5 210.5 108.0 211.5 107.6 212.5 119.8 213.5 121.6 214.5 104.3 215.5 111.3 216.5 109.8 217.5 106.0 218.5 109.5 219.5 123.3 220.5 112.0 221.5 120.3 222.5 103.6 223.5 117.9 224.5 126.6 225.5 139.2 226.5 121.5 227.5 105.9 228.5 119.2 229.5 125.2 230.5 120.6 231.5 113.3 232.5 122.9 233.5 129.5 234.5 126.2 235.5 119.8 236.5 122.1 237.5 125.2 238.5 122.3 239.5 109.5 240.5 128.1 241.5 119.6 242.5 128.4 243.5 107.2 244.5 109.5 245.5 120.7 246.5 120.7 247.5 114.0 248.5 107.5 249.5 114.9 250.5 103.1 251.5 107.5 252.5 120.3 253.5 131.2 254.5 103.0 255.5 104.8 256.5 105.5 257.5 123.7 258.5 132.6 259.5 122.4 260.5 128.5 261.5 130.2 262.5 113.7 263.5 106.3 264.5 118.8 265.5 129.0 266.5 131.4 267.5 105.9 268.5 117.7 269.5 107.2 270.5 118.7 271.5 129.9 272.5 127.1 273.5 127.1 274.5 115.0 275.5 106.6 276.5 118.5 277.5 128.8 278.5 109.3 279.5 127.5 280.5 124.9 281.5 121.1 282.5 110.1 283.5 117.2 284.5 125.5 285.5 104.6 286.5 113.1 287.5 114.5 288.5 117.7 289.5 128.4 290.5 115.0 291.5 112.1 292.5 120.1 293.5 111.3 294.5 109.5 295.5 133.3 296.5 131.2 297.5 118.3 298.5 106.1 299.5 107.8 300.5 125.9 301.5 110.1 302.5 126.4 303.5 117.8 304.5 122.4 305.5 121.3 306.5 131.2 307.5 126.8 308.5 128.6 309.5 119.0 310.5 119.4 311.5 129.1 312.5 114.5 313.5 121.8 314.5 124.9 315.5 127.6 316.5 121.1 317.5 121.3 318.5 126.1 319.5 117.4 320.5 128.8 321.5 115.9 322.5 115.2 323.5 129.4 324.5 143.5 325.5 129.7 326.5 126.2 327.5 114.2 328.5 122.6 329.5 124.5 330.5 131.9 331.5 117.8 332.5 134.0 333.5 108.7 334.5 121.3 335.5 108.8 336.5 127.2 337.5 108.6 338.5 115.2 339.5 118.6 340.5 120.7 341.5 130.0 342.5 116.5 343.5 117.9 344.5 123.4 345.5 124.8 346.5 125.2 347.5 129.9 348.5 112.2 349.5 108.5 350.5 135.1 351.5 124.8 352.5 133.7 353.5 121.3 354.5 119.5 355.5 115.0 356.5 136.2 357.5 133.1 358.5 127.4 359.5 118.7 360.5 109.0 361.5 120.5 362.5 117.2 363.5 133.0 364.5 117.6 365.5 109.2 366.5 127.2 367.5 119.3 368.5 114.1 369.5 109.2 370.5 113.5 371.5 122.4 372.5 136.8 373.5 127.2 374.5 107.9 375.5 112.0 376.5 121.7 377.5 124.8 378.5 114.3 379.5 136.5 380.5 109.1 381.5 117.9 382.5 111.1 383.5 130.7 384.5 111.4 385.5 111.0 386.5 120.4 387.5 131.2 388.5 138.0 389.5 123.4 390.5 118.9 391.5 123.0 392.5 126.4 393.5 134.7 394.5 124.8 395.5 109.5 396.5 123.2 397.5 125.6 398.5 114.9 399.5 133.8 400.5 134.9 401.5 138.1 402.5 109.7 403.5 121.9 404.5 125.7 405.5 126.3 406.5 132.4 407.5 110.7 408.5 130.9 409.5 114.1 410.5 122.8 411.5 118.7 412.5 118.0 413.5 114.0 414.5 119.6 415.5 123.4" fill="none" stroke="#7e2f8e" stroke-width="1.3" stroke-dasharray="3 0.6"/>
<polyline points="0.5 159.8 1.5 155.9 2.5 148.3 3.5 166.5 4.5 159.2 5.5 137.2 6.5 142.0 7.5 147.9 8.5 148.0 9.5 151.3 10.5 146.9 11.5 144.3 12.5 157.9 13.5 141.1 14.5 145.5 15.5 145.6 16.5 155.1 17.5 153.6 18.5 140.7 19.5 162.8 20.5 138.1 21.5 148.2 22.5 151.8 23.5 156.4 24.5 149.5 25.5 146.6 26.5 141.4 27.5 146.9 28.5 141.3 29.5 140.0 30.5 145.6 31.5 132.6 32.5 81.4 33.5 55.2 34.5 44.4 35.5 61.0 36.5 85.6 37.5 104.6 38.5 112.2 39.5 109.0 40.5 104.1 41.5 115.2 42.5 120.9 43.5 112.2 44.5 124.1 45.5 111.7 46.5 128.5 47.5 120.3 48.5 102.9 49.5 115.7 50.5 110.2 51.5 112.6 52.5 101.1 53.5 116.2 54.5 121.8 55.5 99.7 56.5 124.0 57.5 125.2 58.5 109.6 59.5 109.7 60.5 108.0 61.5 107.0 62.5 127.3 63.5 107.7 64.5 120.2 65.5 110.0 66.5 109.1 67.5 90.6 68.5 69.7 69.5 49.0 70.5 50.4 71.5 76.3 72.5 95.9 73.5 113.6 74.5 123.4 75.5 116.4 76.5 113.2 77.5 121.1 78.5 106.6 79.5 112.4 80.5 122.1 81.5 119.9 82.5 100.5 83.5 117.1 84.5 106.2 85.5 114.9 86.5 116.4 87.5 116.9 88.5 112.4 89.5 112.6 90.5 137.7 91.5 98.4 92.5 111.5 93.5 96.8 94.5 102.1 95.5 104.5 96.5 115.5 97.5 117.3 98.5 106.4 99.5 99.8 100.5 96.9 101.5 96.3 102.5 90.3 103.5 63.4 104.5 30.3 105.5 21.5 106.5 45.5 107.5 74.9 108.5 100.4 109.5 109.2 110.5 112.9 111.5 107.5 112.5 118.3 113.5 95.9 114.5 112.9 115.5 97.7 116.5 115.3 117.5 107.7 118.5 109.3 119.5 123.4 120.5 119.7 121.5 121.4 122.5 98.1 123.5 108.6 124.5 114.2 125.5 104.4 126.5 113.0 127.5 114.0 128.5 107.3 129.5 112.6 130.5 118.6 131.5 106.0 132.5 112.8 133.5 105.6 134.5 113.2 135.5 103.4 136.5 103.8 137.5 104.1 138.5 85.0 139.5 63.1 140.5 44.4 141.5 50.1 142.5 75.3 143.5 95.7 144.5 101.0 145.5 98.9 146.5 105.6 147.5 108.8 148.5 116.7 149.5 102.8 150.5 123.2 151.5 99.8 152.5 125.5 153.5 122.7 154.5 106.4 155.5 98.2 156.5 102.9 157.5 104.0 158.5 105.6 159.5 104.8 160.5 125.4 161.5 110.5 162.5 120.2 163.5 120.1 164.5 105.2 165.5 116.9 166.5 117.5 167.5 125.6 168.5 99.2 169.5 106.0 170.5 107.8 171.5 108.5 172.5 102.4 173.5 88.6 174.5 70.2 175.5 69.6 176.5 84.4 177.5 99.1 178.5 107.9 179.5 97.1 180.5 84.1 181.5 78.7 182.5 87.2 183.5 99.7 184.5 110.6 185.5 118.6 186.5 119.4 187.5 107.1 188.5 100.8 189.5 112.5 190.5 105.6 191.5 113.9 192.5 109.1 193.5 118.7 194.5 102.2 195.5 124.0 196.5 109.5 197.5 102.4 198.5 123.8 199.5 123.4 200.5 110.2 201.5 104.4 202.5 105.5 203.5 118.7 204.5 128.8 205.5 106.6 206.5 102.6 207.5 91.6 208.5 85.6 209.5 91.6 210.5 102.7 211.5 112.1 212.5 123.6 213.5 128.4 214.5 104.8 215.5 103.8 216.5 108.9 217.5 123.1 218.5 112.5 219.5 124.1 220.5 103.4 221.5 116.1 222.5 117.4 223.5 110.7 224.5 115.3 225.5 112.9 226.5 126.8 227.5 112.7 228.5 104.5 229.5 122.4 230.5 114.5 231.5 113.0 232.5 123.0 233.5 130.2 234.5 109.8 235.5 110.3 236.5 124.4 237.5 106.4 238.5 115.7 239.5 105.8 240.5 94.6 241.5 83.3 242.5 83.8 243.5 98.0 244.5 108.7 245.5 109.2 246.5 126.9 247.5 120.0 248.5 108.2 249.5 114.8 250.5 120.6 251.5 116.8 252.5 126.5 253.5 109.3 254.5 108.7 255.5 104.4 256.5 116.3 257.5 113.9 258.5 112.4 259.5 107.3 260.5 115.0 261.5 132.9 262.5 113.3 263.5 117.5 264.5 127.3 265.5 132.0 266.5 114.0 267.5 116.4 268.5 106.7 269.5 109.7 270.5 131.8 271.5 126.4 272.5 117.4 273.5 123.9 274.5 112.8 275.5 108.0 276.5 106.0 277.5 105.9 278.5 96.3 279.5 92.5 280.5 98.7 281.5 107.9 282.5 115.8 283.5 129.1 284.5 113.1 285.5 121.4 286.5 125.0 287.5 111.5 288.5 128.7 289.5 112.7 290.5 123.1 291.5 116.5 292.5 134.2 293.5 111.0 294.5 120.7 295.5 128.2 296.5 122.4 297.5 133.7 298.5 129.5 299.5 144.8 300.5 122.5 301.5 133.1 302.5 140.8 303.5 128.2 304.5 120.6 305.5 116.3 306.5 131.2 307.5 113.2 308.5 111.5 309.5 107.2 310.5 127.6 311.5 110.8 312.5 124.8 313.5 114.8 314.5 124.8 315.5 132.5 316.5 134.2 317.5 115.8 318.5 129.4 319.5 121.2 320.5 108.1 321.5 134.5 322.5 117.4 323.5 132.9 324.5 110.3 325.5 124.0 326.5 115.4 327.5 130.5 328.5 113.9 329.5 119.3 330.5 125.0 331.5 129.1 332.5 121.6 333.5 130.9 334.5 118.0 335.5 124.5 336.5 131.5 337.5 135.4 338.5 113.6 339.5 133.3 340.5 111.1 341.5 110.1 342.5 122.9 343.5 114.6 344.5 125.4 345.5 124.6 346.5 133.4 347.5 133.3 348.5 117.3 349.5 135.2 350.5 117.5 351.5 136.4 352.5 108.0 353.5 120.0 354.5 113.6 355.5 113.4 356.5 131.3 357.5 134.6 358.5 151.6 359.5 131.1 360.5 134.5 361.5 130.5 362.5 118.8 363.5 114.5 364.5 126.9 365.5 124.0 366.5 112.5 367.5 113.1 368.5 121.4 369.5 115.8 370.5 127.2 371.5 135.4 372.5 115.7 373.5 118.3 374.5 131.3 375.5 108.1 376.5 124.9 377.5 131.3 378.5 110.1 379.5 111.8 380.5 119.7 381.5 122.0 382.5 109.8 383.5 109.8 384.5 115.0 385.5 108.4 386.5 129.5 387.5 132.7 388.5 116.7 389.5 122.8 390.5 137.1 391.5 130.1 392.5 128.1 393.5 116.2 394.5 135.4 395.5 126.3 396.5 134.0 397.5 117.8 398.5 109.5 399.5 127.6 400.5 129.4 401.5 123.1 402.5 128.1 403.5 130.4 404.5 112.5 405.5 130.1 406.5 123.3 407.5 123.2 408.5 134.1 409.5 133.0 410.5 125.3 411.5 115.8 412.5 138.2 413.5 138.9 414.5 129.2 415.5 123.1" fill="none" stroke="#77ac30" stroke-width="1.3" stroke-dasharray="3 0.6"/>
<polyline points="0.5 146.0 1.5 142.7 2.5 149.5 3.5 131.9 4.5 135.1 5.5 139.8 6.5 147.3 7.5 146.4 8.5 133.8 9.5 134.4 10.5 144.5 11.5 135.8 12.5 132.7 13.5 138.4 14.5 140.4 15.5 141.1 16.5 131.6 17.5 139.6 18.5 132.1 19.5 132.7 20.5 140.4 21.5 138.5 22.5 147.5 23.5 134.1 24.5 149.9 25.5 145.1 26.5 141.1 27.5 130.3 28.5 125.1 29.5 103.2 30.5 76.1 31.5 69.6 32.5 62.7 33.5 71.2 34.5 67.9 35.5 79.9 36.5 82.3 37.5 86.3 38.5 69.9 39.5 74.4 40.5 90.3 41.5 71.9 42.5 84.6 43.5 81.4 44.5 89.3 45.5 87.4 46.5 89.8 47.5 99.4 48.5 96.6 49.5 93.7 50.5 100.4 51.5 94.8 52.5 103.5 53.5 102.4 54.5 104.0 55.5 98.1 56.5 88.9 57.5 99.7 58.5 103.3 59.5 103.1 60.5 105.6 61.5 106.6 62.5 98.1 63.5 106.4 64.5 111.3 65.5 112.1 66.5 98.3 67.5 115.0 68.5 104.2 69.5 107.4 70.5 102.0 71.5 100.0 72.5 113.2 73.5 96.9 74.5 95.7 75.5 101.0 76.5 101.1 77.5 103.3 78.5 99.9 79.5 94.8 80.5 112.1 81.5 93.6 82.5 112.3 83.5 110.4 84.5 99.1 85.5 109.3 86.5 100.8 87.5 93.2 88.5 112.1 89.5 111.7 90.5 109.5 91.5 95.6 92.5 100.2 93.5 107.2 94.5 104.4 95.5 95.1 96.5 107.4 97.5 98.6 98.5 92.9 99.5 107.7 100.5 94.6 101.5 98.3 102.5 93.2 103.5 93.1 104.5 92.5 105.5 94.6 106.5 90.0 107.5 99.0 108.5 91.5 109.5 100.8 110.5 93.7 111.5 91.5 112.5 103.4 113.5 100.9 114.5 106.2 115.5 106.0 116.5 99.5 117.5 98.5 118.5 105.5 119.5 98.5 120.5 95.0 121.5 108.3 122.5 92.4 123.5 94.2 124.5 97.1 125.5 97.6 126.5 91.4 127.5 91.5 128.5 92.5 129.5 97.9 130.5 107.7 131.5 103.3 132.5 108.2 133.5 108.1 134.5 107.5 135.5 103.7 136.5 104.3 137.5 109.7 138.5 92.5 139.5 96.6 140.5 92.1 141.5 87.9 142.5 88.8 143.5 93.0 144.5 99.1 145.5 101.2 146.5 97.5 147.5 111.0 148.5 99.7 149.5 101.0 150.5 107.7 151.5 105.8 152.5 95.8 153.5 108.1 154.5 108.0 155.5 94.3 156.5 106.8 157.5 98.4 158.5 115.9 159.5 104.5 160.5 103.1 161.5 96.4 162.5 112.9 163.5 96.2 164.5 97.5 165.5 110.2 166.5 111.5 167.5 97.8 168.5 100.9 169.5 112.1 170.5 97.4 171.5 100.5 172.5 105.1 173.5 110.3 174.5 111.5 175.5 112.6 176.5 108.7 177.5 88.1 178.5 86.8 179.5 85.9 180.5 76.4 181.5 75.7 182.5 70.4 183.5 67.3 184.5 69.8 185.5 57.9 186.5 60.3 187.5 55.8 188.5 46.0 189.5 53.9 190.5 71.1 191.5 66.2 192.5 68.4 193.5 59.7 194.5 78.5 195.5 79.6 196.5 91.5 197.5 80.1 198.5 86.3 199.5 101.3 200.5 95.1 201.5 112.5 202.5 97.8 203.5 104.6 204.5 106.5 205.5 106.5 206.5 102.3 207.5 113.9 208.5 107.5 209.5 103.4 210.5 102.2 211.5 107.1 212.5 108.3 213.5 100.4 214.5 119.1 215.5 110.5 216.5 108.5 217.5 116.7 218.5 104.8 219.5 106.5 220.5 100.7 221.5 126.9 222.5 108.1 223.5 120.6 224.5 120.2 225.5 118.0 226.5 102.6 227.5 104.2 228.5 113.0 229.5 120.3 230.5 100.9 231.5 103.2 232.5 106.8 233.5 106.5 234.5 134.4 235.5 101.8 236.5 105.5 237.5 108.1 238.5 114.4 239.5 115.8 240.5 120.4 241.5 115.1 242.5 118.3 243.5 119.3 244.5 117.6 245.5 116.7 246.5 107.3 247.5 110.8 248.5 114.1 249.5 100.7 250.5 116.1 251.5 118.8 252.5 115.1 253.5 107.6 254.5 119.8 255.5 117.7 256.5 120.9 257.5 117.7 258.5 120.8 259.5 114.8 260.5 109.1 261.5 101.3 262.5 117.3 263.5 102.2 264.5 101.7 265.5 103.3 266.5 108.2 267.5 119.9 268.5 119.2 269.5 110.9 270.5 114.7 271.5 105.0 272.5 121.5 273.5 117.8 274.5 110.6 275.5 109.6 276.5 115.0 277.5 103.1 278.5 115.5 279.5 127.4 280.5 105.7 281.5 103.5 282.5 122.0 283.5 108.1 284.5 120.1 285.5 113.5 286.5 113.9 287.5 122.5 288.5 108.1 289.5 120.9 290.5 111.8 291.5 113.4 292.5 112.5 293.5 110.8 294.5 111.2 295.5 123.1 296.5 107.1 297.5 122.8 298.5 117.9 299.5 117.3 300.5 120.3 301.5 110.0 302.5 104.2 303.5 118.7 304.5 113.0 305.5 116.6 306.5 120.1 307.5 121.8 308.5 112.0 309.5 121.4 310.5 112.1 311.5 107.6 312.5 122.8 313.5 108.4 314.5 113.4 315.5 123.5 316.5 106.9 317.5 115.0 318.5 110.6 319.5 106.6 320.5 129.3 321.5 107.4 322.5 123.6 323.5 123.5 324.5 106.4 325.5 107.8 326.5 108.4 327.5 106.4 328.5 111.7 329.5 119.4 330.5 116.8 331.5 112.3 332.5 112.6 333.5 114.3 334.5 124.4 335.5 123.0 336.5 110.1 337.5 118.9 338.5 113.8 339.5 112.8 340.5 106.4 341.5 110.3 342.5 117.4 343.5 118.8 344.5 115.4 345.5 121.2 346.5 122.9 347.5 113.0 348.5 114.5 349.5 122.5 350.5 112.5 351.5 107.0 352.5 119.8 353.5 120.2 354.5 120.3 355.5 116.9 356.5 119.3 357.5 120.5 358.5 110.6 359.5 109.9 360.5 125.2 361.5 143.3 362.5 127.2 363.5 115.9 364.5 122.3 365.5 119.3 366.5 118.4 367.5 121.5 368.5 111.3 369.5 144.7 370.5 118.7 371.5 116.3 372.5 120.7 373.5 124.8 374.5 112.3 375.5 117.9 376.5 119.1 377.5 120.0 378.5 120.1 379.5 127.6 380.5 125.6 381.5 113.1 382.5 110.1 383.5 114.6 384.5 120.3 385.5 126.4 386.5 110.4 387.5 111.5 388.5 119.7 389.5 110.6 390.5 116.0 391.5 123.0 392.5 128.2 393.5 116.0 394.5 124.1 395.5 119.2 396.5 121.8 397.5 120.6 398.5 126.7 399.5 129.0 400.5 113.6 401.5 114.1 402.5 126.5 403.5 124.0 404.5 117.9 405.5 109.5 406.5 113.4 407.5 110.6 408.5 122.6 409.5 114.3 410.5 111.3 411.5 116.2 412.5 117.2 413.5 116.7 414.5 129.7 415.5 112.2" fill="none" stroke="#d95319" stroke-width="1.3" stroke-dasharray="3 0.6"/>
<rect x="40.5" y="0" width="1.5" height="180" fill="#444"/>
<rect x="374.0" y="0" width="1.5" height="180" fill="#444"/>
<circle cx="41.200000000000045" cy="86.5" r="2.5" fill="#d95319"/><circle cx="41.200000000000045" cy="106.2" r="2.5" fill="#4dbeee"/>
<circle cx="374.70000000000005" cy="115.4" r="2.5" fill="#77ac30"/><circle cx="374.70000000000005" cy="125.9" r="2.5" fill="#4dbeee"/><circle cx="374.70000000000005" cy="129.8" r="2.5" fill="#d95319"/>
<rect x="0.5" y="0.5" width="415" height="179" fill="none" stroke="#222" stroke-width="1.2"/>
</svg><svg class="a" style="left:892px;top:586px" width="417" height="56" viewBox="0 0 417 56">
<rect width="417" height="56" fill="#fff"/>
<rect x="39.4" y="0" width="1" height="56" fill="#e0e0e0"/>
<rect x="79.7" y="0" width="1" height="56" fill="#e0e0e0"/>
<rect x="120.0" y="0" width="1" height="56" fill="#e0e0e0"/>
<rect x="160.3" y="0" width="1" height="56" fill="#e0e0e0"/>
<rect x="200.6" y="0" width="1" height="56" fill="#e0e0e0"/>
<rect x="240.9" y="0" width="1" height="56" fill="#e0e0e0"/>
<rect x="281.2" y="0" width="1" height="56" fill="#e0e0e0"/>
<rect x="321.5" y="0" width="1" height="56" fill="#e0e0e0"/>
<rect x="361.8" y="0" width="1" height="56" fill="#e0e0e0"/>
<rect x="402.1" y="0" width="1" height="56" fill="#e0e0e0"/>
<path d="M73.5 26.9V28.1M74.5 25.2V29.8M75.5 24.2V30.8M76.5 22.5V32.5M77.5 21.3V33.7M78.5 18.5V36.5M79.5 19.6V35.4M80.5 16.4V38.6M81.5 14.1V40.9M82.5 12.4V42.6M83.5 14.0V41.0M84.5 13.1V41.9M85.5 12.0V43.0M86.5 13.6V41.4M87.5 12.5V42.5M88.5 13.1V41.9M89.5 10.5V44.5M90.5 11.0V44.0M91.5 11.7V43.3M92.5 13.8V41.2M93.5 9.7V45.3M94.5 11.7V43.3M95.5 11.8V43.2M96.5 13.5V41.5M97.5 9.2V45.8M98.5 9.8V45.2M99.5 13.4V41.6M100.5 13.2V41.8M101.5 13.3V41.7M102.5 14.0V41.0M103.5 13.8V41.2M104.5 8.5V46.5M105.5 9.3V45.7M106.5 13.0V42.0M107.5 8.3V46.7M108.5 12.7V42.3M109.5 13.0V42.0M110.5 12.0V43.0M111.5 9.2V45.8M112.5 10.6V44.4M113.5 9.1V45.9M114.5 9.0V46.0M115.5 12.1V42.9M116.5 8.6V46.4M117.5 12.6V42.4M118.5 9.0V46.0M119.5 12.3V42.7M120.5 8.5V46.5M121.5 10.6V44.4M122.5 12.4V42.6M123.5 7.9V47.1M124.5 10.4V44.6M125.5 9.8V45.2M126.5 7.5V47.5M127.5 13.2V41.8M128.5 9.9V45.1M129.5 8.1V46.9M130.5 8.9V46.1M131.5 11.1V43.9M132.5 12.0V43.0M133.5 9.1V45.9M134.5 11.8V43.2M135.5 8.7V46.3M136.5 8.6V46.4M137.5 7.6V47.4M138.5 11.0V44.0M139.5 8.7V46.3M140.5 10.8V44.2M141.5 10.9V44.1M142.5 10.4V44.6M143.5 8.6V46.4M144.5 7.7V47.3M145.5 9.2V45.8M146.5 11.1V43.9M147.5 10.2V44.8M148.5 9.9V45.1M149.5 9.1V45.9M150.5 12.1V42.9M151.5 10.7V44.3M152.5 13.4V41.6M153.5 8.1V46.9M154.5 8.7V46.3M155.5 10.7V44.3M156.5 8.9V46.1M157.5 13.6V41.4M158.5 8.6V46.4M159.5 9.7V45.3M160.5 9.4V45.6M161.5 9.9V45.1M162.5 8.4V46.6M163.5 9.4V45.6M164.5 9.4V45.6M165.5 12.1V42.9M166.5 11.5V43.5M167.5 10.6V44.4M168.5 14.3V40.7M169.5 12.1V42.9M170.5 9.8V45.2M171.5 10.0V45.0M172.5 11.1V43.9M173.5 13.8V41.2M174.5 13.3V41.7M175.5 10.2V44.8M176.5 14.1V40.9M177.5 10.0V45.0M178.5 10.9V44.1M179.5 12.8V42.2M180.5 13.7V41.3M181.5 13.5V41.5M182.5 12.9V42.1M183.5 15.7V39.3M184.5 13.2V41.8M185.5 12.2V42.8M186.5 13.5V41.5M187.5 15.7V39.3M188.5 12.2V42.8M189.5 13.0V42.0M190.5 12.9V42.1M191.5 12.5V42.5M192.5 13.3V41.7M193.5 15.6V39.4M194.5 14.0V41.0M195.5 16.5V38.5M196.5 13.9V41.1M197.5 16.8V38.2M198.5 16.2V38.8M199.5 15.1V39.9M200.5 17.2V37.8M201.5 17.0V38.0M202.5 17.1V37.9M203.5 15.5V39.5M204.5 14.8V40.2M205.5 17.1V37.9M206.5 16.4V38.6M207.5 16.7V38.3M208.5 16.3V38.7M209.5 15.5V39.5M210.5 18.3V36.7M211.5 16.4V38.6M212.5 18.0V37.0M213.5 16.1V38.9M214.5 18.8V36.2M215.5 17.1V37.9M216.5 18.1V36.9M217.5 18.3V36.7M218.5 18.8V36.2M219.5 17.6V37.4M220.5 19.3V35.7M221.5 18.5V36.5M222.5 20.2V34.8M223.5 17.9V37.1M224.5 18.1V36.9M225.5 18.1V36.9M226.5 18.9V36.1M227.5 19.6V35.4M228.5 19.3V35.7M229.5 19.5V35.5M230.5 21.3V33.7M231.5 19.8V35.2M232.5 20.4V34.6M233.5 20.1V34.9M234.5 20.4V34.6M235.5 19.6V35.4M236.5 21.3V33.7M237.5 20.8V34.2M238.5 20.7V34.3M239.5 21.1V33.9M240.5 20.8V34.2M241.5 22.7V32.3M242.5 22.6V32.4M243.5 23.0V32.0M244.5 22.3V32.7M245.5 23.1V31.9M246.5 22.9V32.1M247.5 24.4V30.6M248.5 23.5V31.5M249.5 24.0V31.0M250.5 25.0V30.0M251.5 25.0V30.0M252.5 24.9V30.1M253.5 25.4V29.6M254.5 25.8V29.2M255.5 26.0V29.0M256.5 26.0V29.0M257.5 26.4V28.6M258.5 26.6V28.4M259.5 26.6V28.4M260.5 26.8V28.2M261.5 27.1V27.9" stroke="#4dbeee" stroke-width="1"/>
<path d="M72.5 13.9V40.0M73.5 11.1V43.4M74.5 12.4V39.7M75.5 11.6V40.3M76.5 12.6V41.1M77.5 13.3V39.4M78.5 11.1V43.1M79.5 15.2V43.6M80.5 14.7V40.4M81.5 15.5V40.4M82.5 11.2V42.9M83.5 14.6V42.1M84.5 12.9V41.9M85.5 15.1V42.2M86.5 15.7V41.8M87.5 15.4V39.3M88.5 11.6V41.6M89.5 13.1V39.3M90.5 14.5V39.9M91.5 13.2V43.6M92.5 13.2V43.5M93.5 12.4V41.6M94.5 11.5V43.8M95.5 11.4V41.8M96.5 11.9V40.6M97.5 15.6V40.0M98.5 12.1V43.6M99.5 11.8V42.2M100.5 15.5V41.7M101.5 12.8V43.6M102.5 15.7V43.2M103.5 13.1V41.6M104.5 14.3V41.4M105.5 12.6V40.3M106.5 12.7V43.0M107.5 11.3V43.8M108.5 12.9V41.0M109.5 12.3V43.4M110.5 12.6V42.9M111.5 12.4V39.6M112.5 11.4V41.9M113.5 15.0V39.3M114.5 15.0V43.8M115.5 12.0V42.1M116.5 11.6V41.9M117.5 15.4V43.5M118.5 13.5V41.8M119.5 15.7V42.0M120.5 15.1V40.8M121.5 14.0V40.3M122.5 15.5V43.0M123.5 12.6V40.1M124.5 13.8V40.5M125.5 12.7V42.3M126.5 14.5V40.0M127.5 13.5V43.2M128.5 13.7V43.8M129.5 14.9V41.9M130.5 11.8V42.8M131.5 15.4V40.1M132.5 11.1V41.3M133.5 15.1V43.1M134.5 12.8V43.1M135.5 13.0V39.5M136.5 14.9V42.6M137.5 13.9V40.2M138.5 15.7V41.5M139.5 12.8V43.7M140.5 14.1V41.1M141.5 14.0V43.9M142.5 11.3V41.0M143.5 11.9V40.8M144.5 11.5V40.0M145.5 13.9V43.7M146.5 14.5V43.3M147.5 15.6V43.1M148.5 12.6V41.8M149.5 15.4V39.4M150.5 13.0V42.7M151.5 12.2V39.4M152.5 11.8V40.7M153.5 12.2V39.8M154.5 11.7V39.6M155.5 11.4V43.3M156.5 13.0V41.4M157.5 11.3V39.7M158.5 12.3V42.8M159.5 15.5V42.5M160.5 13.2V42.8M161.5 12.7V42.3M162.5 15.0V39.9M163.5 15.3V40.8M164.5 14.4V42.3M165.5 14.6V41.0M166.5 11.7V41.8M167.5 14.5V43.6M168.5 13.0V41.9M169.5 11.8V41.3M170.5 11.2V43.0M171.5 13.0V43.2M172.5 11.4V39.6M173.5 13.4V42.2M174.5 12.9V40.8M175.5 12.8V42.9M176.5 13.8V43.5M177.5 13.2V40.8M178.5 14.3V41.9M179.5 14.5V43.1M180.5 12.5V43.4M181.5 13.9V43.5M182.5 15.7V42.0M183.5 13.9V40.2M184.5 15.3V41.6M185.5 15.1V40.9M186.5 15.3V43.1M187.5 14.3V41.0M188.5 12.3V41.8M189.5 14.4V40.0M190.5 13.2V40.8M191.5 11.9V43.2M192.5 12.4V40.4M193.5 15.2V41.0M194.5 16.1V42.0M195.5 13.7V39.8M196.5 14.2V41.0M197.5 14.8V40.8M198.5 16.4V40.6M199.5 16.6V41.4M200.5 13.1V42.0M201.5 12.4V39.7M202.5 15.2V38.7M203.5 13.6V41.9M204.5 16.7V40.8M205.5 14.1V42.0M206.5 15.6V39.2M207.5 13.2V41.3M208.5 15.9V41.2M209.5 14.2V38.6M210.5 13.7V39.8M211.5 13.6V40.6M212.5 15.0V38.8M213.5 14.0V40.6M214.5 15.4V38.8M215.5 15.1V41.4M216.5 14.7V39.0M217.5 15.9V41.1M218.5 14.8V39.4M219.5 14.7V39.3M220.5 16.4V40.7M221.5 14.7V39.4M222.5 17.1V38.5M223.5 17.1V38.2M224.5 14.1V39.7M225.5 16.1V39.8M226.5 14.2V37.5M227.5 14.9V38.3M228.5 14.9V37.0M229.5 17.9V37.5M230.5 16.6V38.7M231.5 16.9V36.9M232.5 15.3V38.3M233.5 18.0V38.6M234.5 17.0V37.2M235.5 17.2V37.7M236.5 16.9V38.0M237.5 15.1V39.9M238.5 16.0V37.6M239.5 17.0V36.9M240.5 17.6V37.5M241.5 15.9V38.9M242.5 16.0V38.8M243.5 17.4V36.3M244.5 17.1V39.5M245.5 16.9V39.3M246.5 16.9V36.0M247.5 16.4V36.8M248.5 17.7V35.9M249.5 17.6V36.0M250.5 18.4V35.2M251.5 20.0V35.7M252.5 20.6V33.3M253.5 21.2V32.8M254.5 22.2V33.7M255.5 23.1V33.3M256.5 23.3V31.9M257.5 23.0V31.9M258.5 24.2V31.0M259.5 24.3V30.4M260.5 24.7V29.9M261.5 25.4V30.1M262.5 26.0V29.2M263.5 26.0V28.9M264.5 26.5V28.3M265.5 27.1V28.0" stroke="#7e2f8e" stroke-width="1"/>
<path d="M73.5 26.5V28.5M74.5 24.7V30.1M75.5 22.7V32.2M76.5 22.0V33.2M77.5 18.9V35.2M78.5 18.7V36.9M79.5 14.3V38.8M80.5 13.8V40.0M81.5 10.5V43.4M82.5 8.2V47.0M83.5 9.0V45.2M84.5 9.2V44.6M85.5 9.6V46.0M86.5 8.8V48.3M87.5 6.3V44.2M88.5 10.3V47.6M89.5 7.3V44.2M90.5 8.4V47.8M91.5 10.5V45.3M92.5 9.4V45.5M93.5 10.1V48.8M94.5 9.9V46.5M95.5 6.7V50.0M96.5 9.5V46.4M97.5 9.3V48.0M98.5 9.2V47.1M99.5 9.4V50.4M100.5 8.1V49.9M101.5 7.7V48.8M102.5 5.7V47.3M103.5 4.9V47.5M104.5 7.9V50.0M105.5 8.0V48.1M106.5 5.7V48.0M107.5 8.3V45.9M108.5 7.7V51.3M109.5 8.0V48.6M110.5 6.4V49.3M111.5 6.3V49.4M112.5 8.9V47.7M113.5 3.8V49.1M114.5 4.8V48.0M115.5 4.1V46.6M116.5 8.3V50.8M117.5 8.1V50.8M118.5 6.3V50.6M119.5 7.8V49.3M120.5 3.8V48.6M121.5 5.9V51.8M122.5 6.9V47.5M123.5 8.0V51.9M124.5 4.6V47.5M125.5 8.4V51.3M126.5 6.3V46.7M127.5 4.1V47.0M128.5 7.1V52.1M129.5 6.6V48.9M130.5 4.1V52.3M131.5 7.4V51.1M132.5 5.4V48.0M133.5 7.8V48.3M134.5 5.1V48.7M135.5 2.6V52.7M136.5 5.6V47.1M137.5 7.6V47.1M138.5 7.3V47.9M139.5 3.9V48.8M140.5 4.4V48.9M141.5 3.2V52.0M142.5 5.2V48.7M143.5 7.1V47.3M144.5 7.6V47.5M145.5 6.5V47.3M146.5 8.4V48.5M147.5 5.6V50.5M148.5 4.2V46.9M149.5 8.2V52.3M150.5 4.5V49.7M151.5 7.4V49.5M152.5 4.4V47.8M153.5 4.4V50.7M154.5 6.0V49.7M155.5 3.3V46.7M156.5 6.0V49.1M157.5 4.3V50.5M158.5 6.4V46.2M159.5 5.2V48.4M160.5 4.8V48.7M161.5 8.4V50.8M162.5 4.9V47.0M163.5 6.9V45.7M164.5 4.7V45.5M165.5 4.7V49.0M166.5 7.8V50.7M167.5 7.5V50.6M168.5 8.1V47.0M169.5 6.0V49.0M170.5 4.9V48.0M171.5 8.1V48.1M172.5 5.8V48.3M173.5 5.6V47.8M174.5 10.4V45.5M175.5 9.0V45.7M176.5 8.0V47.5M177.5 7.7V44.4M178.5 11.0V45.0M179.5 7.0V47.7M180.5 9.9V47.3M181.5 11.3V47.7M182.5 11.5V44.1M183.5 8.4V47.1M184.5 8.6V46.1M185.5 8.4V43.1M186.5 11.1V43.0M187.5 9.9V47.1M188.5 12.2V47.1M189.5 10.1V44.3M190.5 11.6V44.3M191.5 9.5V45.7M192.5 11.0V41.9M193.5 10.0V43.7M194.5 11.6V44.5M195.5 13.6V41.5M196.5 10.0V42.2M197.5 11.7V45.2M198.5 11.8V44.4M199.5 12.5V42.9M200.5 14.3V42.8M201.5 10.8V42.6M202.5 11.0V42.3M203.5 11.6V41.5M204.5 12.1V42.7M205.5 12.6V40.5M206.5 12.3V42.2M207.5 15.4V42.6M208.5 13.9V40.9M209.5 15.1V42.4M210.5 14.5V39.9M211.5 13.7V39.6M212.5 14.2V41.7M213.5 14.3V39.8M214.5 15.8V38.9M215.5 15.5V39.1M216.5 16.7V39.1M217.5 14.6V40.6M218.5 16.1V38.4M219.5 16.1V39.3M220.5 15.1V38.5M221.5 17.0V37.8M222.5 17.4V39.6M223.5 16.1V38.5M224.5 16.6V36.9M225.5 15.8V37.1M226.5 17.0V37.7M227.5 16.4V37.7M228.5 17.7V36.9M229.5 18.0V37.8M230.5 19.3V37.0M231.5 17.3V37.2M232.5 18.2V35.5M233.5 17.3V35.9M234.5 19.1V37.2M235.5 18.3V36.1M236.5 19.1V35.4M237.5 18.5V36.6M238.5 18.9V35.0M239.5 19.2V35.7M240.5 20.1V34.4M241.5 20.7V34.5M242.5 21.0V33.7M243.5 21.0V34.5M244.5 21.0V33.1M245.5 21.4V32.7M246.5 22.4V32.2M247.5 22.8V31.7M248.5 23.6V31.5M249.5 23.4V31.7M250.5 23.7V31.4M251.5 24.0V30.9M252.5 24.6V30.3M253.5 24.9V30.4M254.5 25.3V30.1M255.5 25.4V29.4M256.5 25.7V29.4M257.5 26.0V29.1M258.5 26.4V28.9M259.5 26.4V28.4M260.5 26.7V28.4M261.5 27.0V28.0M262.5 27.1V27.8M263.5 27.3V27.7" stroke="#84b545" stroke-width="1"/>
<path d="M73.5 26.9V28.3M74.5 25.9V29.4M75.5 24.4V31.2M76.5 23.2V30.2M77.5 21.2V30.1M78.5 23.0V35.3M79.5 18.5V34.6M80.5 19.5V39.5M81.5 20.4V33.1M82.5 12.8V42.7M83.5 12.3V37.9M84.5 17.0V37.1M85.5 14.7V42.1M86.5 17.7V43.0M87.5 19.7V35.5M88.5 17.2V36.8M89.5 15.8V43.6M90.5 18.5V37.6M91.5 12.2V41.6M92.5 13.2V38.8M93.5 16.4V39.3M94.5 10.6V43.0M95.5 19.0V34.6M96.5 20.6V38.8M97.5 18.6V42.0M98.5 9.4V38.8M99.5 14.6V37.2M100.5 18.4V34.3M101.5 16.9V45.3M102.5 14.0V42.8M103.5 12.6V45.3M104.5 14.2V43.5M105.5 19.9V46.1M106.5 20.5V39.7M107.5 17.0V34.4M108.5 18.3V45.4M109.5 12.4V40.4M110.5 12.6V40.4M111.5 13.8V36.3M112.5 11.6V35.5M113.5 14.9V41.1M114.5 14.4V45.8M115.5 15.2V40.3M116.5 9.3V38.2M117.5 9.9V37.8M118.5 16.9V37.7M119.5 12.6V45.1M120.5 8.3V35.7M121.5 8.2V42.8M122.5 9.7V36.2M123.5 18.7V44.0M124.5 14.1V38.1M125.5 8.8V44.5M126.5 17.2V35.8M127.5 10.7V37.2M128.5 17.6V35.9M129.5 9.9V42.0M130.5 8.0V42.2M131.5 11.2V41.8M132.5 14.4V41.0M133.5 9.3V36.3M134.5 18.3V35.7M135.5 14.8V39.5M136.5 19.6V38.2M137.5 14.9V40.3M138.5 10.3V40.4M139.5 7.6V34.9M140.5 13.9V43.7M141.5 18.8V38.6M142.5 12.5V41.9M143.5 12.1V42.3M144.5 20.1V45.9M145.5 19.6V45.1M146.5 11.7V43.1M147.5 15.6V45.8M148.5 13.4V41.2M149.5 18.3V43.6M150.5 11.0V34.6M151.5 16.2V35.7M152.5 10.8V46.0M153.5 18.4V43.1M154.5 20.4V41.2M155.5 7.7V38.8M156.5 13.1V36.4M157.5 15.1V42.2M158.5 10.8V46.6M159.5 13.2V46.2M160.5 14.8V36.9M161.5 11.6V44.4M162.5 13.5V42.4M163.5 9.8V44.5M164.5 19.9V46.4M165.5 19.3V44.3M166.5 8.9V40.8M167.5 13.9V45.2M168.5 17.6V35.2M169.5 14.9V39.6M170.5 15.6V45.7M171.5 14.0V41.2M172.5 15.9V34.4M173.5 12.2V40.2M174.5 10.4V39.0M175.5 21.1V39.9M176.5 9.9V41.0M177.5 16.5V44.3M178.5 16.7V40.8M179.5 14.0V40.6M180.5 20.4V34.5M181.5 18.9V36.8M182.5 18.5V39.0M183.5 11.9V44.0M184.5 11.2V37.3M185.5 13.1V42.7M186.5 17.1V35.7M187.5 17.7V42.2M188.5 18.2V39.9M189.5 19.4V34.3M190.5 18.0V41.3M191.5 17.4V39.8M192.5 13.5V38.6M193.5 17.9V36.5M194.5 17.7V33.5M195.5 18.6V35.0M196.5 14.0V39.0M197.5 20.2V35.1M198.5 17.2V37.5M199.5 17.6V39.5M200.5 15.3V35.2M201.5 22.0V34.4M202.5 19.6V35.4M203.5 20.8V33.0M204.5 20.5V35.3M205.5 20.1V39.9M206.5 15.6V32.1M207.5 20.5V36.4M208.5 21.6V33.2M209.5 22.9V39.2M210.5 20.6V37.2M211.5 22.2V32.5M212.5 17.9V35.3M213.5 20.5V34.1M214.5 17.1V34.9M215.5 23.0V37.2M216.5 19.4V34.9M217.5 20.5V36.5M218.5 23.1V33.5M219.5 18.5V37.3M220.5 21.0V33.0M221.5 20.9V32.2M222.5 20.9V31.2M223.5 21.5V31.8M224.5 23.5V33.6M225.5 23.9V31.6M226.5 21.4V33.8M227.5 20.1V33.8M228.5 23.9V31.0M229.5 20.3V33.1M230.5 21.6V34.6M231.5 19.0V35.9M232.5 19.5V30.8M233.5 20.7V33.1M234.5 22.2V32.7M235.5 24.4V31.0M236.5 22.9V31.5M237.5 23.9V34.2M238.5 22.7V34.1M239.5 24.7V31.7M240.5 23.9V31.2M241.5 22.5V34.0M242.5 23.9V32.4M243.5 25.1V29.8M244.5 24.3V29.6M245.5 25.6V29.7M246.5 24.8V30.2M247.5 24.6V31.2M248.5 25.5V29.2M249.5 24.1V30.3M250.5 26.2V30.0M251.5 24.6V29.9M252.5 25.1V29.8M253.5 26.4V29.2M254.5 26.7V29.6M255.5 25.7V28.5M256.5 26.0V28.3M257.5 26.4V28.5M258.5 27.0V28.4M259.5 27.0V28.4M260.5 27.2V28.0M261.5 27.2V27.8M262.5 27.3V27.8M263.5 27.4V27.6" stroke="#77ac30" stroke-width="1"/>
<path d="M0.5 24.2V30.6M1.5 24.9V31.7M2.5 25.2V30.9M3.5 23.3V30.0M4.5 24.0V31.1M5.5 25.1V30.6M6.5 23.7V30.8M7.5 23.6V30.2M8.5 24.7V30.1M9.5 24.1V31.8M10.5 23.9V31.5M11.5 24.4V31.4M12.5 25.0V30.4M13.5 23.7V31.4M14.5 24.3V30.0M15.5 24.6V30.3M16.5 24.6V31.5M17.5 24.8V31.7M18.5 23.3V29.9M19.5 24.4V30.9M20.5 25.1V30.7M21.5 23.3V30.1M22.5 23.9V30.1M23.5 24.0V31.7M24.5 24.8V29.8M25.5 25.0V31.0M26.5 25.1V30.0M27.5 24.1V31.8M28.5 24.3V30.7M29.5 23.8V30.0M30.5 23.9V30.2M31.5 23.9V31.9M32.5 25.1V31.0M33.5 23.9V30.1M34.5 24.6V31.9M35.5 23.1V30.1M36.5 23.7V31.8M37.5 24.7V31.1M38.5 25.1V30.6M39.5 23.7V31.1M40.5 23.5V30.0M41.5 24.4V31.7M42.5 23.9V30.8M43.5 24.3V31.9M44.5 24.0V29.9M45.5 23.5V30.5M46.5 24.3V30.3M47.5 24.2V30.5M48.5 25.0V31.2M49.5 25.0V31.5M50.5 25.1V31.5M51.5 23.5V30.9M52.5 23.7V30.3M53.5 23.6V30.7M54.5 24.7V31.9M55.5 23.4V30.6M56.5 23.4V30.4M57.5 24.8V31.8M58.5 25.2V29.9M59.5 23.9V31.9M60.5 24.4V30.1M61.5 24.0V30.1M62.5 25.0V31.0M63.5 23.7V30.0M64.5 24.2V31.3M65.5 23.6V30.6M66.5 23.3V30.2M67.5 23.7V31.5M68.5 23.3V30.9M69.5 25.0V29.9M70.5 23.8V30.0M71.5 25.2V30.2M72.5 24.2V31.8M73.5 25.0V31.2M74.5 25.1V31.1M75.5 25.1V31.1M76.5 25.0V30.6M77.5 23.2V31.1M78.5 24.8V30.3M79.5 24.1V30.6M80.5 25.1V30.0M81.5 24.6V30.5M82.5 23.1V30.0M83.5 24.7V30.4M84.5 24.8V31.0M85.5 23.3V31.4M86.5 24.1V30.0M87.5 25.0V31.6M88.5 24.5V30.6M89.5 23.7V31.7M90.5 23.6V30.6M91.5 25.0V30.1M92.5 23.4V31.9M93.5 23.8V31.9M94.5 23.1V30.2M95.5 23.4V31.1M96.5 23.5V30.8M97.5 24.1V31.1M98.5 24.6V30.8M99.5 23.9V31.8M100.5 24.2V30.1M101.5 24.0V29.9M102.5 25.0V31.3M103.5 24.4V30.9M104.5 25.0V31.7M105.5 24.3V31.8M106.5 24.4V31.8M107.5 24.9V31.0M108.5 24.1V31.2M109.5 23.6V31.2M110.5 25.0V30.7M111.5 23.8V31.3M112.5 23.1V31.3M113.5 23.5V30.6M114.5 24.5V31.3M115.5 23.5V30.8M116.5 24.2V30.4M117.5 24.4V30.3M118.5 23.7V30.4M119.5 24.4V31.0M120.5 25.0V30.6M121.5 24.6V31.1M122.5 24.7V30.1M123.5 23.7V31.1M124.5 24.4V31.7M125.5 24.1V31.6M126.5 25.2V30.7M127.5 23.5V31.2M128.5 24.7V29.9M129.5 24.6V31.4M130.5 24.8V31.0M131.5 24.5V31.4M132.5 24.3V31.4M133.5 24.6V30.7M134.5 25.1V29.9M135.5 23.3V31.2M136.5 24.7V30.4M137.5 25.0V30.9M138.5 24.4V31.0M139.5 24.8V30.1M140.5 23.2V31.9M141.5 24.3V30.5M142.5 24.8V29.9M143.5 23.2V31.3M144.5 23.1V30.9M145.5 23.5V31.6M146.5 25.2V30.1M147.5 25.0V31.7M148.5 23.9V30.0M149.5 25.1V31.1M150.5 25.1V30.3M151.5 24.6V29.9M152.5 25.1V31.1M153.5 23.9V30.2M154.5 23.2V30.5M155.5 24.4V30.2M156.5 23.7V30.4M157.5 24.7V30.3M158.5 24.5V31.1M159.5 23.7V30.8M160.5 23.8V31.4M161.5 24.9V30.4M162.5 24.8V29.9M163.5 23.1V31.8M164.5 25.0V31.7M165.5 24.4V31.6M166.5 24.1V31.1M167.5 23.2V30.4M168.5 24.2V30.9M169.5 24.7V31.3M170.5 23.8V30.0M171.5 23.3V30.7M172.5 24.1V30.2M173.5 25.1V30.5M174.5 23.8V31.0M175.5 25.0V30.4M176.5 23.2V31.3M177.5 24.9V30.7M178.5 23.3V31.7M179.5 24.3V31.0M180.5 24.8V30.4M181.5 24.2V30.8M182.5 23.6V29.9M183.5 23.1V30.3M184.5 24.3V31.7M185.5 23.8V30.1M186.5 23.3V30.2M187.5 24.9V30.8M188.5 25.0V30.0M189.5 25.1V30.0M190.5 23.1V30.7M191.5 24.7V31.9M192.5 24.9V30.5M193.5 23.2V31.4M194.5 24.0V31.4M195.5 24.8V30.5M196.5 23.6V31.8M197.5 23.5V31.5M198.5 23.5V31.2M199.5 24.8V31.7M200.5 24.9V31.8M201.5 23.9V29.8M202.5 24.9V31.1M203.5 23.7V31.2M204.5 25.0V30.3M205.5 25.1V30.9M206.5 23.5V30.8M207.5 24.1V31.2M208.5 24.4V30.8M209.5 23.5V31.6M210.5 24.6V31.9M211.5 23.8V31.7M212.5 23.3V30.8M213.5 23.7V31.7M214.5 23.5V30.2M215.5 23.5V29.9M216.5 23.8V29.8M217.5 23.8V31.7M218.5 24.0V31.8M219.5 25.2V31.7M220.5 24.8V30.2M221.5 24.3V30.2M222.5 24.4V31.2M223.5 24.1V30.3M224.5 24.4V31.3M225.5 23.5V31.0M226.5 24.0V31.5M227.5 23.7V30.8M228.5 23.6V29.9M229.5 24.1V31.2M230.5 24.9V31.6M231.5 24.6V31.1M232.5 24.2V31.5M233.5 24.3V30.9M234.5 23.1V29.9M235.5 23.3V31.0M236.5 24.4V31.2M237.5 24.4V30.5M238.5 23.1V31.1M239.5 24.5V31.7M240.5 24.8V31.2M241.5 24.9V31.4M242.5 23.8V30.3M243.5 23.6V31.3M244.5 24.1V31.2M245.5 23.2V30.4M246.5 24.8V29.8M247.5 23.3V30.3M248.5 23.9V31.7M249.5 23.6V31.0M250.5 23.8V31.0M251.5 23.6V31.1M252.5 23.7V31.5M253.5 24.6V30.3M254.5 23.4V31.7M255.5 24.8V31.5M256.5 23.2V30.5M257.5 24.3V30.6M258.5 24.1V31.6M259.5 23.4V31.8M260.5 23.4V30.3M261.5 24.1V31.8M262.5 23.1V31.0M263.5 23.6V31.1M264.5 23.4V30.5M265.5 24.8V30.9M266.5 25.2V30.4M267.5 25.0V30.7M268.5 25.1V29.9M269.5 23.8V31.4M270.5 23.9V31.1M271.5 25.2V30.7M272.5 24.7V31.4M273.5 23.7V30.7M274.5 24.4V29.9M275.5 24.2V29.9M276.5 23.2V30.0M277.5 23.5V31.1M278.5 24.2V30.7M279.5 24.7V30.1M280.5 23.2V31.1M281.5 24.0V30.1M282.5 24.6V31.2M283.5 24.5V30.0M284.5 24.2V30.6M285.5 24.3V31.7M286.5 23.3V30.9M287.5 23.6V31.6M288.5 24.4V31.4M289.5 25.0V30.3M290.5 24.6V31.1M291.5 25.0V31.9M292.5 24.0V31.5M293.5 23.8V31.4M294.5 23.6V30.1M295.5 24.2V30.0M296.5 23.4V31.5M297.5 23.4V31.6M298.5 23.2V31.8M299.5 24.2V30.2M300.5 24.5V30.7M301.5 24.5V29.9M302.5 24.3V31.9M303.5 25.0V30.6M304.5 24.8V30.4M305.5 23.5V30.9M306.5 23.7V30.1M307.5 24.3V30.9M308.5 24.3V31.4M309.5 23.3V30.8M310.5 24.9V31.5M311.5 25.2V30.9M312.5 25.1V30.1M313.5 24.1V30.9M314.5 23.6V30.7M315.5 23.5V31.5M316.5 23.8V29.9M317.5 24.3V29.8M318.5 24.7V31.2M319.5 24.6V31.5M320.5 23.8V30.8M321.5 24.8V30.3M322.5 23.6V31.1M323.5 24.4V30.4M324.5 23.5V31.4M325.5 24.0V29.9M326.5 25.4V30.7M327.5 24.9V30.9M328.5 23.5V30.0M329.5 24.1V31.1M330.5 24.3V30.5M331.5 23.9V30.6M332.5 24.5V30.7M333.5 25.2V31.2M334.5 23.7V30.2M335.5 24.5V29.9M336.5 24.6V29.8M337.5 25.2V30.2M338.5 23.7V30.8M339.5 24.3V30.2M340.5 24.7V30.7M341.5 23.8V31.1M342.5 23.9V30.1M343.5 23.8V30.7M344.5 25.0V30.4M345.5 24.7V30.6M346.5 24.1V29.6M347.5 24.3V31.1M348.5 25.4V30.8M349.5 24.6V30.5M350.5 24.8V30.6M351.5 25.1V29.5M352.5 25.3V29.4M353.5 25.5V29.6M354.5 24.3V29.7M355.5 25.5V29.7M356.5 24.7V30.6M357.5 24.1V29.4M358.5 24.9V30.6M359.5 24.9V29.9M360.5 25.4V29.7M361.5 24.6V29.5M362.5 25.4V29.6M363.5 24.5V29.4M364.5 24.3V30.3M365.5 24.1V30.2M366.5 24.9V30.2M367.5 24.4V29.5M368.5 25.6V29.8M369.5 25.4V30.8M370.5 24.2V30.1M371.5 24.9V29.4M372.5 25.5V29.6M373.5 25.1V30.4M374.5 25.3V29.8M375.5 25.7V30.4M376.5 25.0V30.3M377.5 25.5V29.8M378.5 25.1V30.2M379.5 25.7V30.2M380.5 25.0V29.6M381.5 25.4V30.6M382.5 25.7V30.3M383.5 24.8V29.8M384.5 24.5V30.5M385.5 25.7V30.1M386.5 24.5V29.3M387.5 24.5V30.0M388.5 25.7V29.5M389.5 25.1V29.2M390.5 25.6V30.2M391.5 25.6V30.1M392.5 24.6V30.3M393.5 25.9V29.5M394.5 25.5V29.7M395.5 26.0V29.7M396.5 25.8V30.2M397.5 25.1V29.4M398.5 25.2V29.2M399.5 25.4V29.7M400.5 25.7V29.3M401.5 24.8V30.1M402.5 25.3V29.0M403.5 25.2V30.1M404.5 26.0V29.4M405.5 24.8V30.1M406.5 25.7V28.9M407.5 25.7V29.3M408.5 25.9V29.6M409.5 25.3V29.9M410.5 25.2V29.7M411.5 26.0V29.3M412.5 25.6V29.7M413.5 26.1V29.6M414.5 25.1V29.8M415.5 26.1V30.0M416.5 25.8V29.2" stroke="#d95319" stroke-width="1"/>
<path d="M54.5 23.7V31.2M55.5 17.2V35.7M56.5 14.7V46.6M57.5 11.1V41.7M58.5 21.0V34.6M69.5 22.1V32.1M70.5 14.2V38.0M71.5 8.7V47.1M72.5 13.0V44.5M73.5 19.9V34.3M84.5 21.9V34.6M85.5 15.7V41.2M86.5 4.5V46.6M87.5 10.9V42.1M88.5 21.6V34.6M99.5 20.4V33.5M100.5 14.0V40.5M101.5 4.9V45.4M102.5 13.5V42.7M103.5 20.6V32.2M114.5 17.3V37.9M115.5 14.6V41.6M116.5 11.7V49.0M117.5 14.6V41.8M118.5 21.5V33.0M129.5 20.1V34.5M130.5 12.7V44.2M131.5 11.5V43.8M132.5 18.6V37.6M133.5 23.2V31.8M143.5 23.0V32.0M144.5 14.6V39.9M145.5 5.3V44.9M146.5 11.7V43.7M147.5 18.2V38.0M158.5 23.2V33.6M159.5 13.0V40.3M160.5 8.3V43.7M161.5 11.0V40.4M162.5 17.9V37.7M173.5 22.3V34.0M174.5 14.2V42.1M175.5 6.2V48.0M176.5 9.9V43.7M177.5 20.2V35.9M188.5 21.3V34.8M189.5 12.9V43.1M190.5 9.4V49.4M191.5 16.2V41.7M192.5 21.6V33.6M203.5 20.6V36.6M204.5 11.1V46.1M205.5 7.5V45.8M206.5 14.3V43.0M207.5 22.7V33.5M218.5 20.6V36.9M219.5 10.9V44.5M220.5 11.8V42.3M221.5 16.3V38.9M222.5 22.6V31.4M232.5 24.3V30.8M233.5 14.7V36.4M234.5 8.4V49.2M235.5 5.6V48.8M236.5 16.7V36.4M237.5 23.7V32.2M248.5 19.7V36.2M249.5 12.6V42.5M250.5 15.6V40.2M251.5 20.7V34.8M262.5 23.4V30.6M263.5 19.7V36.8M264.5 12.8V39.1M265.5 18.8V35.9M266.5 22.8V33.6M277.5 23.6V30.8M278.5 20.2V36.1M279.5 14.2V37.9M280.5 20.3V37.6M281.5 23.1V32.5M292.5 23.7V32.1M293.5 19.9V35.0M294.5 17.0V38.5M295.5 20.9V34.0M307.5 24.3V31.1M308.5 19.0V35.2M309.5 19.2V34.7M310.5 21.2V33.7M322.5 24.0V30.7M323.5 22.6V33.4M324.5 20.7V35.0M325.5 22.6V31.8M338.5 23.1V32.7M339.5 21.5V33.5M353.5 24.4V31.5M354.5 23.9V30.9M383.5 25.5V29.7M398.5 24.7V29.8M413.5 25.2V29.8" stroke="#d95319" stroke-width="1"/>
<rect x="0" y="0" width="46.2" height="56" fill="#efefef" opacity="0.58"/>
<rect x="298.2" y="0" width="118.8" height="56" fill="#efefef" opacity="0.58"/>
<rect x="45.5" y="0" width="1.5" height="56" fill="#111"/>
<rect x="297.5" y="0" width="1.5" height="56" fill="#111"/>
<rect x="0.5" y="0.5" width="416" height="55" fill="none" stroke="#222" stroke-width="1.3"/>
</svg><div class="a" style="left:398px;top:146px;width:8px;height:8px;background:#ff3300"></div>
<div class="a" style="left:410px;top:142px;font-size:12px;color:#333">S.x</div>
<div class="a tick" style="left:329px;top:205px;width:60px;text-align:right;line-height:14px;font-size:10px">0</div>
<div class="a" style="left:393px;top:211.5px;width:3px;height:1px;background:#222"></div>
<div class="a tick" style="left:329px;top:266.7px;width:60px;text-align:right;line-height:14px;font-size:10px">-20</div>
<div class="a" style="left:393px;top:273.2px;width:3px;height:1px;background:#222"></div>
<div class="a tick" style="left:329px;top:328px;width:60px;text-align:right;line-height:14px;font-size:10px">-40</div>
<div class="a" style="left:393px;top:334.5px;width:3px;height:1px;background:#222"></div>
<div class="a tick" style="left:366.5px;top:370px;width:60px;text-align:center;line-height:14px;font-size:10px">100</div>
<div class="a" style="left:396.0px;top:366px;width:1px;height:3px;background:#222"></div>
<div class="a tick" style="left:410.37px;top:370px;width:60px;text-align:center;line-height:14px;font-size:10px">120</div>
<div class="a" style="left:439.87px;top:366px;width:1px;height:3px;background:#222"></div>
<div class="a tick" style="left:454.24px;top:370px;width:60px;text-align:center;line-height:14px;font-size:10px">140</div>
<div class="a" style="left:483.74px;top:366px;width:1px;height:3px;background:#222"></div>
<div class="a tick" style="left:498.11px;top:370px;width:60px;text-align:center;line-height:14px;font-size:10px">160</div>
<div class="a" style="left:527.61px;top:366px;width:1px;height:3px;background:#222"></div>
<div class="a tick" style="left:541.98px;top:370px;width:60px;text-align:center;line-height:14px;font-size:10px">180</div>
<div class="a" style="left:571.48px;top:366px;width:1px;height:3px;background:#222"></div>
<div class="a tick" style="left:585.85px;top:370px;width:60px;text-align:center;line-height:14px;font-size:10px">200</div>
<div class="a" style="left:615.35px;top:366px;width:1px;height:3px;background:#222"></div>
<div class="a tick" style="left:629.72px;top:370px;width:60px;text-align:center;line-height:14px;font-size:10px">220</div>
<div class="a" style="left:659.22px;top:366px;width:1px;height:3px;background:#222"></div>
<div class="a tick" style="left:673.5899999999999px;top:370px;width:60px;text-align:center;line-height:14px;font-size:10px">240</div>
<div class="a" style="left:703.0899999999999px;top:366px;width:1px;height:3px;background:#222"></div>
<div class="a tick" style="left:717.46px;top:370px;width:60px;text-align:center;line-height:14px;font-size:10px">260</div>
<div class="a" style="left:746.96px;top:366px;width:1px;height:3px;background:#222"></div>
<div class="a tick" style="left:761.3299999999999px;top:370px;width:60px;text-align:center;line-height:14px;font-size:10px">280</div>
<div class="a" style="left:790.8299999999999px;top:366px;width:1px;height:3px;background:#222"></div>
<div class="a" style="left:353px;top:245px;font-size:10px;color:#222;transform:rotate(-90deg);transform-origin:0 0;top:322px">Power Spectrum (dB)</div>
<div class="a lab" style="left:350px;top:278px;width:46px;height:17px;line-height:16px;font-size:12.5px">-23.9</div>
<div class="a lab" style="left:354px;top:312px;width:42px;height:16px;line-height:15px;font-size:12.5px">22.0</div>
<div class="a lab" style="left:350px;top:345px;width:46px;height:17px;line-height:16px;font-size:12.5px">-45.9</div>
<div class="a lab" style="left:533px;top:366px;width:39px;height:17px;line-height:16px;font-size:12.5px">171.1</div>
<div class="a lab" style="left:599px;top:366px;width:34px;height:17px;line-height:16px;font-size:12.5px">58.2</div>
<div class="a lab" style="left:660px;top:366px;width:40px;height:17px;line-height:16px;font-size:12.5px">229.3</div>
<div class="a" style="left:547px;top:391px;width:100px;text-align:center;font-size:10px;color:#222">Frequency (Hz)</div>
<div class="a tick" style="left:329px;top:469px;width:60px;text-align:right;line-height:14px;font-size:10px">250</div>
<div class="a" style="left:393px;top:475.5px;width:3px;height:1px;background:#222"></div>
<div class="a tick" style="left:329px;top:579px;width:60px;text-align:right;line-height:14px;font-size:10px">150</div>
<div class="a" style="left:393px;top:585.5px;width:3px;height:1px;background:#222"></div>
<div class="a tick" style="left:329px;top:634px;width:60px;text-align:right;line-height:14px;font-size:10px">100</div>
<div class="a" style="left:393px;top:640.5px;width:3px;height:1px;background:#222"></div>
<div class="a tick" style="left:366px;top:645px;width:60px;text-align:center;line-height:14px;font-size:10px">0</div>
<div class="a" style="left:395.5px;top:641px;width:1px;height:3px;background:#222"></div>
<div class="a" style="left:445.5px;top:641px;width:1px;height:3px;background:#222"></div>
<div class="a tick" style="left:466px;top:645px;width:60px;text-align:center;line-height:14px;font-size:10px">2</div>
<div class="a" style="left:495.5px;top:641px;width:1px;height:3px;background:#222"></div>
<div class="a tick" style="left:516px;top:645px;width:60px;text-align:center;line-height:14px;font-size:10px">3</div>
<div class="a" style="left:545.5px;top:641px;width:1px;height:3px;background:#222"></div>
<div class="a" style="left:595.5px;top:641px;width:1px;height:3px;background:#222"></div>
<div class="a tick" style="left:616px;top:645px;width:60px;text-align:center;line-height:14px;font-size:10px">5</div>
<div class="a" style="left:645.5px;top:641px;width:1px;height:3px;background:#222"></div>
<div class="a tick" style="left:666px;top:645px;width:60px;text-align:center;line-height:14px;font-size:10px">6</div>
<div class="a" style="left:695.5px;top:641px;width:1px;height:3px;background:#222"></div>
<div class="a tick" style="left:716px;top:645px;width:60px;text-align:center;line-height:14px;font-size:10px">7</div>
<div class="a" style="left:745.5px;top:641px;width:1px;height:3px;background:#222"></div>
<div class="a tick" style="left:766px;top:645px;width:60px;text-align:center;line-height:14px;font-size:10px">8</div>
<div class="a" style="left:795.5px;top:641px;width:1px;height:3px;background:#222"></div>
<div class="a" style="left:352px;top:572px;font-size:10px;color:#222;transform:rotate(-90deg);transform-origin:0 0">Frequency (Hz)</div>
<div class="a lab" style="left:347px;top:490px;width:49px;height:17px;line-height:16px;font-size:12.5px">229.3</div>
<div class="a lab" style="left:354px;top:523px;width:42px;height:16px;line-height:15px;font-size:12.5px">58.2</div>
<div class="a lab" style="left:347px;top:555px;width:49px;height:16px;line-height:15px;font-size:12.5px">171.1</div>
<div class="a lab" style="left:424px;top:643px;width:27px;height:15px;line-height:14px;font-size:12.5px">0.8</div>
<div class="a lab" style="left:591px;top:643px;width:26px;height:15px;line-height:14px;font-size:12.5px">6.7</div>
<div class="a lab" style="left:758px;top:643px;width:27px;height:15px;line-height:14px;font-size:12.5px">7.5</div>
<div class="a" style="left:547px;top:666px;width:100px;text-align:center;font-size:10px;color:#222">Time (minutes)</div>
<div class="a" style="left:893px;top:146px;width:8px;height:8px;background:#4dbeee"></div>
<div class="a" style="left:905px;top:142px;font-size:12px;color:#333">whale_moan_1</div>
<div class="a" style="left:997px;top:146px;width:8px;height:8px;background:#7e2f8e"></div>
<div class="a" style="left:1009px;top:142px;font-size:12px;color:#333">whale_moan_2</div>
<div class="a" style="left:1101px;top:146px;width:8px;height:8px;background:#77ac30"></div>
<div class="a" style="left:1113px;top:142px;font-size:12px;color:#333">whale_moan_3</div>
<div class="a" style="left:1204px;top:146px;width:8px;height:8px;background:#d95319"></div>
<div class="a" style="left:1216px;top:142px;font-size:12px;color:#333">whale_trill</div>
<div class="a tick" style="left:825px;top:182px;width:60px;text-align:right;line-height:14px;font-size:10px">0.2</div>
<div class="a" style="left:889px;top:188.5px;width:3px;height:1px;background:#222"></div>
<div class="a tick" style="left:825px;top:232px;width:60px;text-align:right;line-height:14px;font-size:10px">0</div>
<div class="a" style="left:889px;top:238.5px;width:3px;height:1px;background:#222"></div>
<div class="a tick" style="left:825px;top:281.5px;width:60px;text-align:right;line-height:14px;font-size:10px">-0.2</div>
<div class="a" style="left:889px;top:288.0px;width:3px;height:1px;background:#222"></div>
<div class="a tick" style="left:917.4px;top:318px;width:60px;text-align:center;line-height:14px;font-size:10px">0.4</div>
<div class="a" style="left:946.9px;top:317px;width:1px;height:3px;background:#222"></div>
<div class="a tick" style="left:983.3px;top:318px;width:60px;text-align:center;line-height:14px;font-size:10px">0.6</div>
<div class="a" style="left:1012.8px;top:317px;width:1px;height:3px;background:#222"></div>
<div class="a tick" style="left:1050.3px;top:318px;width:60px;text-align:center;line-height:14px;font-size:10px">0.8</div>
<div class="a" style="left:1079.8px;top:317px;width:1px;height:3px;background:#222"></div>
<div class="a tick" style="left:1117.2px;top:318px;width:60px;text-align:center;line-height:14px;font-size:10px">1.0</div>
<div class="a" style="left:1146.7px;top:317px;width:1px;height:3px;background:#222"></div>
<div class="a tick" style="left:1184.2px;top:318px;width:60px;text-align:center;line-height:14px;font-size:10px">1.2</div>
<div class="a" style="left:1213.7px;top:317px;width:1px;height:3px;background:#222"></div>
<div class="a tick" style="left:1251.2px;top:318px;width:60px;text-align:center;line-height:14px;font-size:10px">1.4</div>
<div class="a" style="left:1280.7px;top:317px;width:1px;height:3px;background:#222"></div>
<div class="a lab" style="left:890px;top:317px;width:32px;height:16px;line-height:15px;font-size:12.5px">0.28</div>
<div class="a lab" style="left:1045px;top:317px;width:32px;height:16px;line-height:15px;font-size:12.5px">0.92</div>
<div class="a lab" style="left:1198px;top:317px;width:34px;height:16px;line-height:15px;font-size:12.5px">1.20</div>
<div class="a" style="left:1045px;top:341px;width:100px;text-align:center;font-size:10px;color:#222">Time (s)</div>
<div class="a vlab" style="left:861px;top:211px;width:38px;height:18px;line-height:12px;border:2px solid #d95319">0.08</div>
<div class="a vlab" style="left:1219px;top:225px;width:38px;height:18px;line-height:12px;border:2px solid #4dbeee">0.02*</div>
<div class="a vlab" style="left:1219px;top:245px;width:38px;height:17px;line-height:11px;border:2px solid #d95319">0.02</div>
<div class="a vlab" style="left:1219px;top:264px;width:43px;height:18px;line-height:12px;border:2px solid #77ac30">-0.04*</div>
<div class="a vlab" style="left:1219px;top:283px;width:43px;height:18px;line-height:12px;border:2px solid #7e2f8e">-0.07*</div>
<div class="a tick" style="left:825px;top:369.6px;width:60px;text-align:right;line-height:14px;font-size:10px">-20</div>
<div class="a" style="left:889px;top:376.1px;width:3px;height:1px;background:#222"></div>
<div class="a tick" style="left:825px;top:415.9px;width:60px;text-align:right;line-height:14px;font-size:10px">-40</div>
<div class="a" style="left:889px;top:422.4px;width:3px;height:1px;background:#222"></div>
<div class="a tick" style="left:825px;top:461.8px;width:60px;text-align:right;line-height:14px;font-size:10px">-60</div>
<div class="a" style="left:889px;top:468.3px;width:3px;height:1px;background:#222"></div>
<div class="a tick" style="left:825px;top:506.9px;width:60px;text-align:right;line-height:14px;font-size:10px">-80</div>
<div class="a" style="left:889px;top:513.4px;width:3px;height:1px;background:#222"></div>
<div class="a tick" style="left:861.8px;top:544px;width:60px;text-align:center;line-height:14px;font-size:10px">0</div>
<div class="a" style="left:891.3px;top:541px;width:1px;height:3px;background:#222"></div>
<div class="a tick" style="left:903.5px;top:544px;width:60px;text-align:center;line-height:14px;font-size:10px">0.2</div>
<div class="a" style="left:933.0px;top:541px;width:1px;height:3px;background:#222"></div>
<div class="a tick" style="left:945.1999999999999px;top:544px;width:60px;text-align:center;line-height:14px;font-size:10px">0.4</div>
<div class="a" style="left:974.6999999999999px;top:541px;width:1px;height:3px;background:#222"></div>
<div class="a tick" style="left:986.9px;top:544px;width:60px;text-align:center;line-height:14px;font-size:10px">0.6</div>
<div class="a" style="left:1016.4px;top:541px;width:1px;height:3px;background:#222"></div>
<div class="a tick" style="left:1028.6px;top:544px;width:60px;text-align:center;line-height:14px;font-size:10px">0.8</div>
<div class="a" style="left:1058.1px;top:541px;width:1px;height:3px;background:#222"></div>
<div class="a tick" style="left:1070.3px;top:544px;width:60px;text-align:center;line-height:14px;font-size:10px">1.0</div>
<div class="a" style="left:1099.8px;top:541px;width:1px;height:3px;background:#222"></div>
<div class="a tick" style="left:1112.0px;top:544px;width:60px;text-align:center;line-height:14px;font-size:10px">1.2</div>
<div class="a" style="left:1141.5px;top:541px;width:1px;height:3px;background:#222"></div>
<div class="a tick" style="left:1153.7px;top:544px;width:60px;text-align:center;line-height:14px;font-size:10px">1.4</div>
<div class="a" style="left:1183.2px;top:541px;width:1px;height:3px;background:#222"></div>
<div class="a tick" style="left:1195.4px;top:544px;width:60px;text-align:center;line-height:14px;font-size:10px">1.6</div>
<div class="a" style="left:1224.9px;top:541px;width:1px;height:3px;background:#222"></div>
<div class="a tick" style="left:1237.1px;top:544px;width:60px;text-align:center;line-height:14px;font-size:10px">1.8</div>
<div class="a" style="left:1266.6px;top:541px;width:1px;height:3px;background:#222"></div>
<div class="a tick" style="left:1278.8px;top:544px;width:60px;text-align:center;line-height:14px;font-size:10px">2.0</div>
<div class="a" style="left:1308.3px;top:541px;width:1px;height:3px;background:#222"></div>
<div class="a" style="left:847px;top:500px;font-size:10px;color:#222;transform:rotate(-90deg);transform-origin:0 0">Power Spectrum (dB)</div>
<div class="a lab" style="left:916px;top:542px;width:33px;height:16px;line-height:15px;font-size:12.5px">0.20</div>
<div class="a lab" style="left:1087px;top:542px;width:33px;height:16px;line-height:15px;font-size:12.5px">1.60</div>
<div class="a lab" style="left:1249px;top:542px;width:34px;height:16px;line-height:15px;font-size:12.5px">1.80</div>
<div class="a" style="left:1042px;top:567px;width:100px;text-align:center;font-size:10px;color:#222">Frequency (kHz)</div>
<div class="a vlab" style="left:883px;top:441px;width:43px;height:17px;line-height:11px;border:2px solid #d95319">-51.4*</div>
<div class="a vlab" style="left:883px;top:461px;width:43px;height:17px;line-height:11px;border:2px solid #4dbeee">-60.0</div>
<div class="a vlab" style="left:883px;top:478px;width:43px;height:18px;line-height:12px;border:2px solid #7e2f8e">-67.7*</div>
<div class="a vlab" style="left:883px;top:497px;width:43px;height:18px;line-height:12px;border:2px solid #77ac30">-69.4*</div>
<div class="a vlab" style="left:1272px;top:470px;width:41px;height:18px;line-height:12px;border:2px solid #77ac30">-64.0*</div>
<div class="a vlab" style="left:1272px;top:489px;width:41px;height:18px;line-height:12px;border:2px solid #4dbeee">-68.6</div>
<div class="a vlab" style="left:1272px;top:508px;width:41px;height:18px;line-height:12px;border:2px solid #7e2f8e">-69.7*</div>
<div class="a vlab" style="left:1272px;top:528px;width:41px;height:18px;line-height:12px;border:2px solid #d95319">-70.3*</div>
<div class="a tick" style="left:825px;top:606.5px;width:60px;text-align:right;line-height:14px;font-size:10px">0</div>
<div class="a" style="left:889px;top:612.5px;width:3px;height:1px;background:#222"></div>
<div class="a tick" style="left:861.6px;top:644px;width:60px;text-align:center;line-height:14px;font-size:10px">0</div>
<div class="a" style="left:891.1px;top:642px;width:1px;height:3px;background:#222"></div>
<div class="a tick" style="left:901.9px;top:644px;width:60px;text-align:center;line-height:14px;font-size:10px">0.2</div>
<div class="a" style="left:931.4px;top:642px;width:1px;height:3px;background:#222"></div>
<div class="a tick" style="left:942.2px;top:644px;width:60px;text-align:center;line-height:14px;font-size:10px">0.4</div>
<div class="a" style="left:971.7px;top:642px;width:1px;height:3px;background:#222"></div>
<div class="a tick" style="left:982.5px;top:644px;width:60px;text-align:center;line-height:14px;font-size:10px">0.6</div>
<div class="a" style="left:1012.0px;top:642px;width:1px;height:3px;background:#222"></div>
<div class="a tick" style="left:1022.8px;top:644px;width:60px;text-align:center;line-height:14px;font-size:10px">0.8</div>
<div class="a" style="left:1052.3px;top:642px;width:1px;height:3px;background:#222"></div>
<div class="a tick" style="left:1063.1px;top:644px;width:60px;text-align:center;line-height:14px;font-size:10px">1.0</div>
<div class="a" style="left:1092.6px;top:642px;width:1px;height:3px;background:#222"></div>
<div class="a tick" style="left:1103.4px;top:644px;width:60px;text-align:center;line-height:14px;font-size:10px">1.2</div>
<div class="a" style="left:1132.9px;top:642px;width:1px;height:3px;background:#222"></div>
<div class="a tick" style="left:1143.7px;top:644px;width:60px;text-align:center;line-height:14px;font-size:10px">1.4</div>
<div class="a" style="left:1173.2px;top:642px;width:1px;height:3px;background:#222"></div>
<div class="a tick" style="left:1184.0px;top:644px;width:60px;text-align:center;line-height:14px;font-size:10px">1.6</div>
<div class="a" style="left:1213.5px;top:642px;width:1px;height:3px;background:#222"></div>
<div class="a tick" style="left:1224.3px;top:644px;width:60px;text-align:center;line-height:14px;font-size:10px">1.8</div>
<div class="a" style="left:1253.8px;top:642px;width:1px;height:3px;background:#222"></div>
<div class="a tick" style="left:1264.6px;top:644px;width:60px;text-align:center;line-height:14px;font-size:10px">2.0</div>
<div class="a" style="left:1294.1px;top:642px;width:1px;height:3px;background:#222"></div>
<div class="a" style="left:1044px;top:667px;width:100px;text-align:center;font-size:10px;color:#222">Time (s)</div>
</body></html>
